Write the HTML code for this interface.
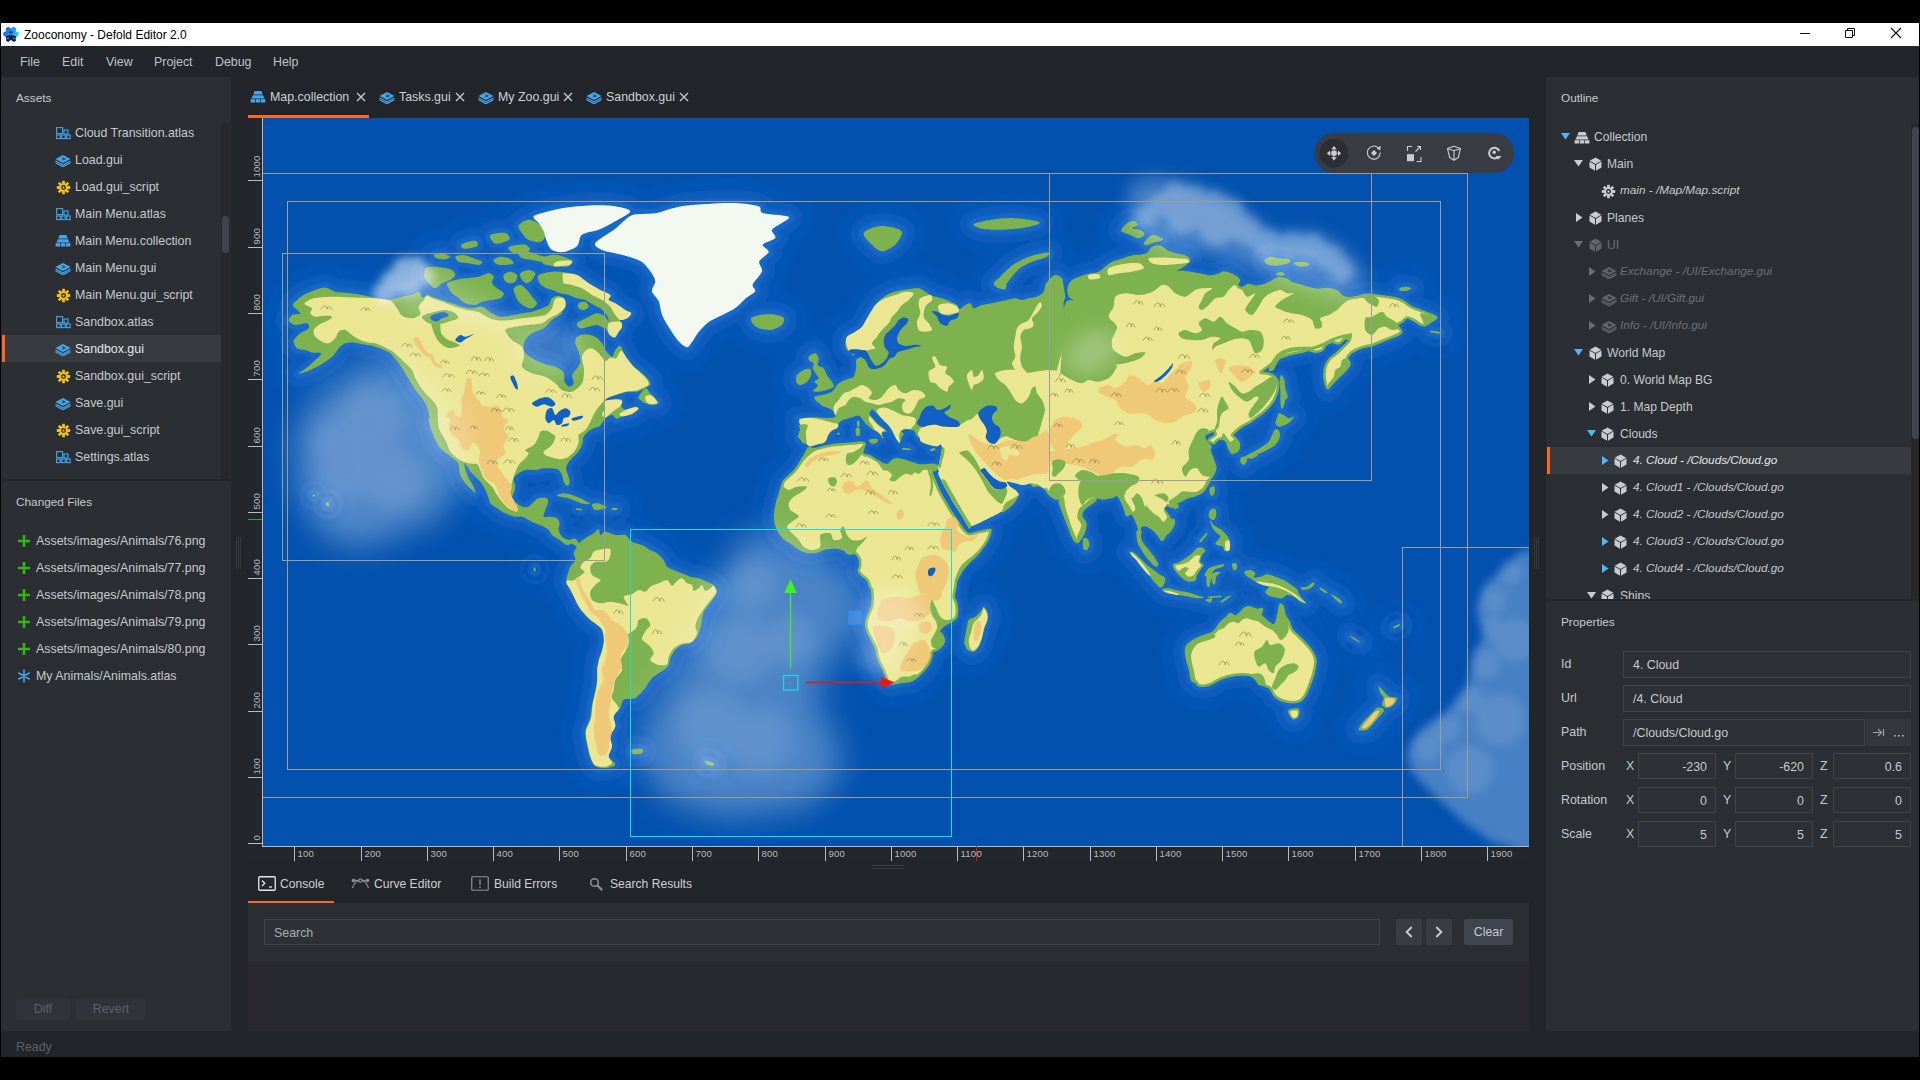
<!DOCTYPE html>
<html lang="en"><head><meta charset="utf-8"><title>Zooconomy - Defold Editor 2.0</title>
<style>
html,body{margin:0;padding:0;background:#000;}
body{width:1920px;height:1080px;overflow:hidden;font-family:"Liberation Sans",sans-serif;}
#app{position:relative;width:1920px;height:1080px;background:#000;overflow:hidden;}
#app>*, .abs{position:absolute;}
.titlebar{left:1px;top:23px;width:1918px;height:23px;background:#fff;}
.win{left:1px;top:46px;width:1918px;height:1011px;background:#22252a;}
.panel{background:#2b2e33;}
.panel2{background:#27292e;}
.t{position:absolute;white-space:pre;color:#c6cacd;font-size:12.4px;line-height:17px;}
.title{color:#000;font-size:12px;line-height:16px;}
.menu{font-size:12.4px;color:#bfc3c7;}
.hdr{font-size:11.8px;color:#c6cacd;}
.tab{font-size:12.4px;color:#cdd1d4;}
.btab{font-size:12.1px;color:#cdd1d4;}
.orow{font-size:12.1px;}
.it{font-style:italic;font-size:11.75px;margin-top:-2px;}
.dim{color:#6c7075;}
.sel1{color:#e4e7ea;}
.i{position:absolute;overflow:visible;}
.sel{background:#373b3f;}
.selbar{width:3px;background:#fd6623;position:absolute;}
.orange{background:#fd6623;}
.sbtrack{background:#26282c;}
.sbthumb{background:#40444d;border-radius:4px;}
.btn{background:#393c42;border-radius:2px;color:#c6cacd;font-size:12.4px;text-align:center;line-height:21px;}
.btn.dis{background:#30333a;color:#5d6167;}
.btn svg{display:block;}
.field{box-sizing:border-box;border:1px solid #40444a;background:#2d3035;}
.field .ph,.field .fv{position:absolute;left:9px;top:5px;font-size:12.4px;line-height:17px;color:#c6cacd;white-space:pre;}
.field .ph{color:#a9adb2;}
.field.num .fv{left:auto;right:8px;}
.pbtn{background:#34373c;}
.grip{width:5px;height:32px;border-left:1px solid #35383d;border-right:1px solid #35383d;box-sizing:border-box;}
.grip:after{content:"";position:absolute;left:1px;top:0;width:1px;height:32px;background:#35383d;}
.hgrip{width:32px;height:4px;border-top:1px solid #3a3d42;border-bottom:1px solid #3a3d42;box-sizing:border-box;}
.blu{color:#4aa5e8;fill:#4aa5e8;}
.yel{color:#f2c114;fill:#f2c114;}
.gry{color:#c8ccd0;fill:#c8ccd0;}
.gdim{color:#62666b;fill:#62666b;}
#vp{left:248px;top:118px;width:1281px;height:743px;overflow:hidden;background:#0450b2;}

</style></head>
<body>

<svg width="0" height="0" style="position:absolute">
<defs>
<symbol id="atlas" viewBox="0 0 16 14"><g fill="none" stroke="#3f9ee0" stroke-width="1.2"><rect x="1.6" y="1.600" width="6" height="6"/><rect x="9" y="4" width="4" height="4"/><rect x="1.6" y="9" width="3.600" height="3.600"/><rect x="6.6" y="9" width="3.600" height="3.600"/><rect x="11.6" y="9" width="3.600" height="3.600"/></g></symbol>
<symbol id="gui" viewBox="0 0 16 13"><path d="M8 1L15.500 5 8 9 .5 5z" fill="#4aa5e8"/><path d="M8 3.200l3.200 1.700L8 6.600 6.500 5.800 8.500 4.800 6.300 4.100z" fill="#1d4f7a"/><path d="M.5 7L8 11l7.500-4" fill="none" stroke="#4aa5e8" stroke-width="1.300"/><path d="M.5 8.800L8 12.800l7.500-4" fill="none" stroke="#4aa5e8" stroke-width="1.100"/></symbol>
<symbol id="guig" viewBox="0 0 16 13"><path d="M8 1L15.500 5 8 9 .5 5z"/><path d="M8 3.200l3.200 1.700L8 6.600 6.500 5.800 8.500 4.800 6.300 4.100z" fill="#2b2e33"/><path d="M.5 7L8 11l7.500-4" fill="none" stroke="currentColor" stroke-width="1.300"/><path d="M.5 8.800L8 12.800l7.500-4" fill="none" stroke="currentColor" stroke-width="1.100"/></symbol>
<symbol id="gear" viewBox="-8 -8 16 16"><g><circle r="4.600"/><g id="teeth"><rect x="-1.5" y="-7.200" width="3" height="14.400" rx=".6"/><rect x="-1.5" y="-7.200" width="3" height="14.400" rx=".6" transform="rotate(45)"/><rect x="-1.5" y="-7.200" width="3" height="14.400" rx=".6" transform="rotate(90)"/><rect x="-1.5" y="-7.200" width="3" height="14.400" rx=".6" transform="rotate(135)"/></g><circle r="2.600" fill="#2b2e33"/><circle r="1.200"/></g></symbol>
<symbol id="coll" viewBox="0 0 16 12"><path d="M4.500 0h7l1.200 3.500h-9.400z"/><path d="M3 4.200h10L14.600 7.500H1.400z"/><path d="M.6 8.200h4.600v3.300H.6zM5.900 8.200h4.200v3.300H5.900zM10.800 8.200h4.600v3.300h-4.600z"/></symbol>
<symbol id="cube" viewBox="0 0 13 14"><path d="M6.500 .5L12.300 3.700 6.500 6.900 .7 3.700z"/><path d="M.5 4.600L6 7.700v6L.5 10.500z"/><path d="M12.500 4.600L7 7.700v6l5.500-3.200z"/></symbol>
<symbol id="plus" viewBox="0 0 14 14"><path d="M5.700 1h2.600v4.700H13v2.600H8.300V13H5.700V8.300H1V5.700h4.700z" fill="#35b31a"/></symbol>
<symbol id="star" viewBox="0 0 14 14"><g stroke="#4aa5e8" stroke-width="1.500" stroke-linecap="round"><path d="M7 1v12M1.800 4l10.400 6M12.200 4L1.800 10"/></g></symbol>
<symbol id="console" viewBox="0 0 18 15"><rect x=".75" y=".75" width="16.500" height="13.500" rx="1" fill="none" stroke="#e6e9ec" stroke-width="1.300"/><path d="M4 4.500l2.800 2.800L4 10" fill="none" stroke="#e6e9ec" stroke-width="1.300"/><path d="M11 11h3" stroke="#e6e9ec" stroke-width="1.300"/></symbol>
<symbol id="builderr" viewBox="0 0 18 15"><rect x=".75" y=".75" width="16.500" height="13.500" rx="1" fill="none" stroke="#8d9196" stroke-width="1.200"/><path d="M9 3.500v5.500M9 10.500v1.500" stroke="#8d9196" stroke-width="1.300"/></symbol>
<symbol id="curve" viewBox="0 0 19 11"><g fill="none" stroke="#8d9196" stroke-width="1.200"><path d="M1.500 10C3 5 6 2.500 9.500 2.500S16 5 17.500 10"/><path d="M3 2.500h13"/><circle cx="9.500" cy="2.500" r="1.700" fill="#22252a"/><circle cx="2.500" cy="2.500" r="1.200" fill="#8d9196"/><circle cx="16.500" cy="2.500" r="1.200" fill="#8d9196"/></g></symbol>
<symbol id="search" viewBox="0 0 14 14"><circle cx="5.500" cy="5.500" r="3.800" fill="none" stroke="#8d9196" stroke-width="1.500"/><path d="M8.500 8.500l4 4" stroke="#8d9196" stroke-width="2.200" stroke-linecap="round"/></symbol>
<symbol id="logo" viewBox="0 0 16 16"><linearGradient id="lg1" gradientUnits="userSpaceOnUse" x1="1" y1="4" x2="15" y2="9"><stop offset="0" stop-color="#1a5fe6"/><stop offset=".55" stop-color="#1c9ae8"/><stop offset="1" stop-color="#1fdcd2"/></linearGradient><g fill="url(#lg1)"><circle cx="8" cy="8" r="5.600"/><circle cx="13.30" cy="8.00" r="2.500"/><circle cx="10.65" cy="12.59" r="2.500"/><circle cx="5.35" cy="12.59" r="2.500"/><circle cx="2.70" cy="8.00" r="2.500"/><circle cx="5.35" cy="3.41" r="2.500"/><circle cx="10.65" cy="3.41" r="2.500"/></g><path d="M2.200 10.400L8 8.800l5.800 1.600-1.600 2.100 .8 2.300-2.300 1.100L8 13.700 5.300 15.900 3 14.800l.8-2.300z" fill="#0e1c4e"/><path d="M3.600 12.300l2-.8 .2 1.900zM12.400 12.300l-2-.8-.2 1.900z" fill="#1ec6d8"/><path d="M5.800 6.300L8 5.100l2.200 1.200L8 7.500z" fill="#0e1c4e"/></symbol>
</defs>
</svg>

<div id="app">

<div class="titlebar"></div>
<svg class="i " style="left:3px;top:26px" width="16" height="16"><use href="#logo"/></svg>
<span class="t title" style="left:24px;top:27px;">Zooconomy - Defold Editor 2.0</span>
<svg class="i" style="left:1780px;top:23px" width="139" height="23" fill="none" stroke="#111" stroke-width="1"><path d="M20 10.5h10"/><path d="M65.500 7.500h7v7h-7zM67.500 7.500v-2h7v7h-2"/><path d="M111 5l10 10M121 5l-10 10" stroke-width="1.1"/></svg>
<div class="win"></div>
<span class="t menu" style="left:20px;top:54px;">File</span>
<span class="t menu" style="left:62px;top:54px;">Edit</span>
<span class="t menu" style="left:106px;top:54px;">View</span>
<span class="t menu" style="left:154px;top:54px;">Project</span>
<span class="t menu" style="left:215px;top:54px;">Debug</span>
<span class="t menu" style="left:273px;top:54px;">Help</span>
<div class="panel" style="left:1px;top:77px;width:230px;height:402px"></div>
<span class="t hdr" style="left:16px;top:90px;">Assets</span>
<div class="sel" style="left:2px;top:335px;width:219px;height:27px"></div><div class="selbar" style="left:2px;top:335px;height:27px"></div>
<svg class="i " style="left:55px;top:126.0px" width="16" height="14"><use href="#atlas"/></svg>
<span class="t row" style="left:75px;top:125.0px;">Cloud Transition.atlas</span>
<svg class="i " style="left:55px;top:153.5px" width="16" height="13"><use href="#gui"/></svg>
<span class="t row" style="left:75px;top:152.0px;">Load.gui</span>
<svg class="i yel" style="left:55.5px;top:179.5px" width="15" height="15"><use href="#gear"/></svg>
<span class="t row" style="left:75px;top:179.0px;">Load.gui_script</span>
<svg class="i " style="left:55px;top:207.0px" width="16" height="14"><use href="#atlas"/></svg>
<span class="t row" style="left:75px;top:206.0px;">Main Menu.atlas</span>
<svg class="i blu" style="left:55px;top:234.5px" width="16" height="12"><use href="#coll"/></svg>
<span class="t row" style="left:75px;top:233.0px;">Main Menu.collection</span>
<svg class="i " style="left:55px;top:261.5px" width="16" height="13"><use href="#gui"/></svg>
<span class="t row" style="left:75px;top:260.0px;">Main Menu.gui</span>
<svg class="i yel" style="left:55.5px;top:287.5px" width="15" height="15"><use href="#gear"/></svg>
<span class="t row" style="left:75px;top:287.0px;">Main Menu.gui_script</span>
<svg class="i " style="left:55px;top:315.0px" width="16" height="14"><use href="#atlas"/></svg>
<span class="t row" style="left:75px;top:314.0px;">Sandbox.atlas</span>
<svg class="i " style="left:55px;top:342.5px" width="16" height="13"><use href="#gui"/></svg>
<span class="t row sel1" style="left:75px;top:341.0px;">Sandbox.gui</span>
<svg class="i yel" style="left:55.5px;top:368.5px" width="15" height="15"><use href="#gear"/></svg>
<span class="t row" style="left:75px;top:368.0px;">Sandbox.gui_script</span>
<svg class="i " style="left:55px;top:396.5px" width="16" height="13"><use href="#gui"/></svg>
<span class="t row" style="left:75px;top:395.0px;">Save.gui</span>
<svg class="i yel" style="left:55.5px;top:422.5px" width="15" height="15"><use href="#gear"/></svg>
<span class="t row" style="left:75px;top:422.0px;">Save.gui_script</span>
<svg class="i " style="left:55px;top:450.0px" width="16" height="14"><use href="#atlas"/></svg>
<span class="t row" style="left:75px;top:449.0px;">Settings.atlas</span>
<div class="sbtrack" style="left:221px;top:123px;width:9px;height:356px"></div><div class="sbthumb" style="left:222px;top:216px;width:7px;height:37px"></div>
<div class="panel" style="left:1px;top:481px;width:230px;height:550px"></div>
<span class="t hdr" style="left:16px;top:494px;">Changed Files</span>
<svg class="i " style="left:17px;top:533.5px" width="14" height="14"><use href="#plus"/></svg>
<span class="t row" style="left:36px;top:533.0px;">Assets/images/Animals/76.png</span>
<svg class="i " style="left:17px;top:560.5px" width="14" height="14"><use href="#plus"/></svg>
<span class="t row" style="left:36px;top:560.0px;">Assets/images/Animals/77.png</span>
<svg class="i " style="left:17px;top:587.5px" width="14" height="14"><use href="#plus"/></svg>
<span class="t row" style="left:36px;top:587.0px;">Assets/images/Animals/78.png</span>
<svg class="i " style="left:17px;top:614.5px" width="14" height="14"><use href="#plus"/></svg>
<span class="t row" style="left:36px;top:614.0px;">Assets/images/Animals/79.png</span>
<svg class="i " style="left:17px;top:641.5px" width="14" height="14"><use href="#plus"/></svg>
<span class="t row" style="left:36px;top:641.0px;">Assets/images/Animals/80.png</span>
<svg class="i " style="left:17px;top:668.5px" width="14" height="14"><use href="#star"/></svg>
<span class="t row" style="left:36px;top:668.0px;">My Animals/Animals.atlas</span>
<div class="btn dis" style="left:16px;top:999px;width:54px;height:21px">Diff</div>
<div class="btn dis" style="left:76px;top:999px;width:70px;height:21px">Revert</div>
<div class="grip" style="left:236px;top:537px"></div><div class="grip" style="left:1534px;top:537px"></div>
<div class="hgrip" style="left:872px;top:865px"></div>
<svg class="i blu" style="left:250px;top:91px" width="16" height="12"><use href="#coll"/></svg>
<span class="t tab" style="left:270px;top:89px;">Map.collection</span>
<svg class="i" style="left:356px;top:92px" width="10" height="10" stroke="#c4c8cc" stroke-width="1.4"><path d="M1 1l8 8M9 1l-8 8"/></svg>
<svg class="i " style="left:379px;top:91px" width="16" height="13"><use href="#gui"/></svg>
<span class="t tab" style="left:399px;top:89px;">Tasks.gui</span>
<svg class="i" style="left:455px;top:92px" width="10" height="10" stroke="#c4c8cc" stroke-width="1.4"><path d="M1 1l8 8M9 1l-8 8"/></svg>
<svg class="i " style="left:478px;top:91px" width="16" height="13"><use href="#gui"/></svg>
<span class="t tab" style="left:498px;top:89px;">My Zoo.gui</span>
<svg class="i" style="left:563px;top:92px" width="10" height="10" stroke="#c4c8cc" stroke-width="1.4"><path d="M1 1l8 8M9 1l-8 8"/></svg>
<svg class="i " style="left:586px;top:91px" width="16" height="13"><use href="#gui"/></svg>
<span class="t tab" style="left:606px;top:89px;">Sandbox.gui</span>
<svg class="i" style="left:679px;top:92px" width="10" height="10" stroke="#c4c8cc" stroke-width="1.4"><path d="M1 1l8 8M9 1l-8 8"/></svg>
<div class="orange" style="left:248px;top:115px;width:121px;height:3px"></div>
<div id="vp">
<svg id="map" viewBox="248 118 1281 743" width="1281" height="743" style="position:absolute;left:0;top:0">
<defs>
<filter id="b3" filterUnits="userSpaceOnUse" x="248" y="118" width="1281" height="743"><feGaussianBlur stdDeviation="1.800"/></filter>
<filter id="cb" filterUnits="userSpaceOnUse" x="248" y="118" width="1281" height="743"><feGaussianBlur stdDeviation="9"/></filter>
<filter id="cb2" filterUnits="userSpaceOnUse" x="248" y="118" width="1281" height="743"><feGaussianBlur stdDeviation="4"/></filter>
<filter id="cb3" filterUnits="userSpaceOnUse" x="248" y="118" width="1281" height="743"><feGaussianBlur stdDeviation="16"/></filter>
<clipPath id="mapclip"><rect x="262" y="118" width="1267" height="728"/></clipPath>
<path id="landp" d="M518.7 225.3C519.7 223.3 525.6 219.9 528.7 219.7C531.8 219.5 536.8 221.8 539.3 224.0C541.8 226.2 545.2 232.0 545.3 234.7C545.5 237.4 542.8 241.2 540.3 242.0C537.8 242.8 531.4 241.3 528.7 240.0C525.9 238.7 523.5 235.5 522.0 233.3C520.5 231.1 517.7 227.4 518.7 225.3Z M751.3 318.0C752.6 316.5 758.4 315.2 762.0 314.7C765.6 314.2 772.1 314.2 775.3 314.7C778.6 315.2 782.7 316.5 783.7 318.0C784.7 319.5 783.8 322.9 782.0 324.7C780.2 326.4 775.2 329.1 772.0 329.7C768.8 330.3 763.1 329.4 760.3 328.7C757.6 327.9 755.0 326.3 753.7 324.7C752.3 323.1 750.1 319.5 751.3 318.0Z M293.7 303.3C295.2 301.6 300.4 297.0 303.7 295.0C306.9 293.0 312.1 291.1 315.3 290.0C318.6 288.9 322.3 287.2 325.3 287.5C328.3 287.8 331.8 290.8 335.3 291.7C338.8 292.5 344.7 292.5 348.7 293.0C352.7 293.5 358.2 294.3 362.0 295.0C365.8 295.7 370.2 296.8 373.7 297.5C377.2 298.2 382.6 299.8 385.3 300.0C388.1 300.2 389.5 299.7 392.0 299.2C394.5 298.7 398.8 297.4 402.0 296.7C405.2 295.9 411.2 294.9 413.7 294.2C416.2 293.4 417.3 291.2 418.7 291.7C420.0 292.2 421.6 297.1 422.8 297.5C424.1 297.9 425.6 294.8 427.0 294.7C428.4 294.5 429.8 295.9 432.0 296.7C434.2 297.5 439.0 299.0 442.0 300.0C445.0 301.0 449.0 302.3 452.0 303.3C455.0 304.3 459.0 305.9 462.0 306.7C465.0 307.4 469.0 308.3 472.0 308.3C475.0 308.3 479.0 305.9 482.0 306.7C485.0 307.4 489.2 311.8 492.0 313.3C494.8 314.8 497.3 316.4 500.3 316.7C503.3 317.0 508.8 315.8 512.0 315.3C515.2 314.8 519.0 313.9 522.0 313.3C525.0 312.8 529.0 312.4 532.0 311.7C535.0 310.9 539.5 309.3 542.0 308.3C544.5 307.3 547.2 306.5 548.7 305.0C550.2 303.5 550.5 299.7 552.0 298.3C553.5 297.0 556.7 295.6 558.7 295.8C560.7 296.1 564.3 298.4 565.3 300.0C566.3 301.6 565.8 304.9 565.3 306.7C564.8 308.4 562.6 310.5 562.0 311.7C561.4 312.8 562.7 312.9 561.2 314.2C559.7 315.4 554.6 317.9 552.0 320.0C549.4 322.1 546.7 326.3 543.7 328.3C540.7 330.3 534.8 331.6 532.0 333.3C529.2 335.1 526.6 337.5 525.3 340.0C524.1 342.5 522.7 347.2 523.7 350.0C524.7 352.8 528.8 356.2 532.0 358.3C535.2 360.5 541.8 362.9 545.3 364.2C548.8 365.4 552.6 365.4 555.3 366.7C558.1 367.9 562.3 370.2 563.7 372.5C565.0 374.8 563.6 379.5 564.5 381.7C565.4 383.8 568.1 386.4 569.5 386.7C570.9 386.9 573.3 385.1 573.7 383.3C574.0 381.6 571.5 377.2 572.0 375.0C572.5 372.8 575.8 370.3 577.0 368.3C578.2 366.3 580.1 364.2 580.3 361.7C580.6 359.2 579.4 354.4 578.7 351.7C577.9 348.9 575.6 345.6 575.3 343.3C575.1 341.1 575.5 338.0 577.0 336.7C578.5 335.3 582.6 334.2 585.3 334.2C588.1 334.2 592.8 335.3 595.3 336.7C597.8 338.0 600.5 341.3 602.0 343.3C603.5 345.3 603.8 348.0 605.3 350.0C606.8 352.0 610.5 356.7 612.0 356.7C613.5 356.7 614.1 351.6 615.3 350.0C616.6 348.4 618.8 344.8 620.3 345.8C621.8 346.8 623.6 353.8 625.3 356.7C627.1 359.5 629.5 362.5 632.0 365.0C634.5 367.5 639.5 371.1 642.0 373.3C644.5 375.6 647.5 378.2 648.7 380.0C649.9 381.8 650.5 383.8 650.0 385.0C649.5 386.2 647.3 387.0 645.3 388.0C643.4 389.0 639.5 391.1 637.0 391.7C634.5 392.2 631.2 391.4 628.7 391.7C626.2 392.0 623.1 392.9 620.3 393.7C617.6 394.4 612.8 395.6 610.3 396.7C607.8 397.7 603.2 400.5 603.7 400.8C604.2 401.2 610.9 399.3 613.7 399.2C616.4 399.0 620.9 399.0 622.0 400.0C623.1 401.0 620.7 404.4 621.2 405.8C621.7 407.3 623.2 409.5 625.3 409.7C627.5 409.8 633.3 406.8 635.3 406.7C637.3 406.5 639.2 407.5 638.7 408.7C638.2 409.8 634.5 413.0 632.0 414.2C629.5 415.4 624.4 416.0 622.0 416.7C619.6 417.3 617.7 418.9 616.2 418.7C614.7 418.4 613.6 415.1 612.0 415.0C610.4 414.9 606.8 417.1 605.3 418.3C603.8 419.6 603.2 421.7 602.0 423.3C600.8 425.0 597.5 428.7 597.0 429.2C596.5 429.7 599.7 426.5 598.7 426.7C597.7 426.8 592.6 428.5 590.3 430.0C588.1 431.5 584.9 434.4 583.7 436.7C582.4 438.9 583.0 442.5 582.0 445.0C581.0 447.5 578.8 451.1 577.0 453.3C575.2 455.6 571.8 458.2 570.3 460.0C568.8 461.8 567.6 463.5 567.0 465.0C566.4 466.5 565.9 468.2 566.2 470.0C566.4 471.8 568.2 474.7 568.7 476.7C569.2 478.7 569.8 482.0 569.5 483.3C569.2 484.7 567.9 486.1 567.0 485.8C566.1 485.6 564.4 483.3 563.7 481.7C562.9 480.0 562.8 476.8 562.0 475.0C561.2 473.2 560.2 471.0 558.7 470.0C557.2 469.0 554.2 468.6 552.0 468.3C549.8 468.1 546.2 468.1 543.7 468.3C541.2 468.6 538.1 469.8 535.3 470.0C532.6 470.2 527.8 469.5 525.3 470.0C522.8 470.5 520.4 472.1 518.7 473.3C516.9 474.6 514.2 476.3 513.7 478.3C513.2 480.3 515.3 484.4 515.3 486.7C515.3 488.9 514.2 491.6 513.7 493.3C513.2 495.1 511.5 496.8 512.0 498.3C512.5 499.8 515.5 502.1 517.0 503.3C518.5 504.6 520.2 506.2 522.0 506.7C523.8 507.2 526.9 507.4 528.7 506.7C530.4 505.9 532.2 502.9 533.7 501.7C535.2 500.4 536.7 498.8 538.7 498.3C540.7 497.8 545.6 497.6 547.0 498.3C548.4 499.1 548.1 501.6 547.8 503.3C547.6 505.1 546.0 508.0 545.3 510.0C544.7 512.0 542.9 515.7 543.7 516.7C544.4 517.7 548.3 516.4 550.3 516.7C552.3 516.9 555.6 517.3 557.0 518.3C558.4 519.3 559.2 521.6 559.5 523.3C559.8 525.1 558.3 528.0 558.7 530.0C559.0 532.0 560.5 535.2 562.0 536.7C563.5 538.2 566.7 539.7 568.7 540.0C570.7 540.3 573.8 538.2 575.3 538.7C576.8 539.2 578.4 542.1 578.7 543.3C578.9 544.5 578.0 546.6 577.0 546.7C576.0 546.7 573.5 543.9 572.0 543.7C570.5 543.4 568.5 545.3 567.0 545.0C565.5 544.7 563.5 542.7 562.0 541.7C560.5 540.7 558.5 539.3 557.0 538.3C555.5 537.3 553.2 536.2 552.0 535.0C550.8 533.8 549.9 531.2 548.7 530.0C547.4 528.8 545.7 527.7 543.7 526.7C541.7 525.7 537.6 524.3 535.3 523.3C533.1 522.3 530.7 521.0 528.7 520.0C526.7 519.0 524.0 517.2 522.0 516.7C520.0 516.2 517.8 517.2 515.3 516.7C512.8 516.2 508.1 514.6 505.3 513.3C502.6 512.1 499.2 509.8 497.0 508.3C494.8 506.8 491.6 504.8 490.3 503.3C489.1 501.8 489.4 500.3 488.7 498.3C487.9 496.3 486.6 492.5 485.3 490.0C484.1 487.5 482.3 484.2 480.3 481.7C478.3 479.2 474.1 475.8 472.0 473.3C469.9 470.8 467.3 466.4 466.2 465.0C465.0 463.6 464.6 462.9 464.5 463.7C464.4 464.4 464.7 467.8 465.3 470.0C466.0 472.2 467.4 475.8 468.7 478.3C469.9 480.8 472.7 484.4 473.7 486.7C474.7 488.9 475.6 492.8 475.3 493.3C475.1 493.8 473.5 491.5 472.0 490.0C470.5 488.5 467.1 485.6 465.3 483.3C463.6 481.1 461.3 477.8 460.3 475.0C459.3 472.2 459.2 467.0 458.7 465.0C458.2 463.0 458.5 463.2 457.0 461.7C455.5 460.2 451.2 457.0 448.7 455.0C446.2 453.0 442.3 450.6 440.3 448.3C438.3 446.1 436.7 442.8 435.3 440.0C434.0 437.2 432.2 433.0 431.2 430.0C430.2 427.0 428.9 422.0 428.7 420.0C428.4 418.0 429.8 418.7 429.5 416.7C429.2 414.7 428.1 409.4 427.0 406.7C425.9 403.9 423.8 400.8 422.0 398.3C420.2 395.8 417.1 392.5 415.3 390.0C413.6 387.5 411.8 384.2 410.3 381.7C408.8 379.2 407.1 376.1 405.3 373.3C403.6 370.6 400.9 366.3 398.7 363.3C396.4 360.3 392.8 355.5 390.3 353.3C387.8 351.2 384.8 350.3 382.0 349.2C379.2 348.0 375.0 346.6 372.0 345.8C369.0 345.1 364.8 344.7 362.0 344.2C359.2 343.7 356.2 342.6 353.7 342.5C351.2 342.4 347.6 342.5 345.3 343.3C343.1 344.2 340.2 346.8 338.7 348.3C337.2 349.8 336.6 351.8 335.3 353.3C334.1 354.8 332.6 356.6 330.3 358.3C328.1 360.1 323.6 363.1 320.3 365.0C317.1 366.9 311.9 369.5 308.7 370.8C305.4 372.1 298.9 374.2 298.7 373.7C298.4 373.2 304.5 369.6 307.0 367.5C309.5 365.4 313.2 362.1 315.3 360.0C317.5 357.9 321.7 354.5 321.2 353.3C320.7 352.2 314.4 353.0 312.0 352.5C309.6 352.0 307.6 350.6 305.3 350.0C303.1 349.4 298.8 349.7 297.0 348.3C295.2 347.0 293.2 343.1 293.7 340.8C294.2 338.6 298.1 335.2 300.3 333.3C302.6 331.5 307.7 329.8 308.7 328.3C309.7 326.8 309.0 323.8 307.0 323.3C305.0 322.8 298.1 325.4 295.3 325.0C292.6 324.6 289.2 322.3 288.7 320.8C288.2 319.3 290.2 316.1 292.0 315.0C293.8 313.9 300.1 314.6 300.3 313.3C300.6 312.1 294.7 308.2 293.7 306.7C292.7 305.2 292.2 305.1 293.7 303.3Z M557.0 495.0C557.5 494.5 561.4 493.3 563.7 493.3C565.9 493.3 569.5 494.2 572.0 495.0C574.5 495.8 578.1 497.3 580.3 498.3C582.6 499.3 585.5 500.9 587.0 501.7C588.5 502.4 590.6 503.0 590.3 503.3C590.1 503.7 587.3 504.4 585.3 504.2C583.3 503.9 579.5 502.5 577.0 501.7C574.5 500.8 571.2 499.1 568.7 498.3C566.2 497.6 562.1 497.2 560.3 496.7C558.6 496.2 556.5 495.5 557.0 495.0Z M592.0 504.2C592.9 503.5 596.8 503.1 598.7 503.3C600.5 503.6 603.2 505.2 604.5 505.8C605.8 506.5 607.4 507.0 607.0 507.5C606.6 508.0 603.8 508.8 602.0 509.2C600.2 509.5 596.7 510.2 595.3 510.0C594.0 509.8 593.3 508.4 592.8 507.5C592.3 506.6 591.1 504.8 592.0 504.2Z M612.0 508.0C612.8 507.7 616.2 507.7 617.0 508.0C617.8 508.3 617.8 509.7 617.0 510.0C616.2 510.3 612.8 510.3 612.0 510.0C611.2 509.7 611.2 508.3 612.0 508.0Z M576.2 508.3C576.8 508.2 580.4 508.5 581.2 508.8C581.9 509.2 581.8 510.3 581.2 510.5C580.5 510.7 577.4 510.3 576.7 510.0C575.9 509.7 575.5 508.5 576.2 508.3Z M538.7 275.0C540.7 273.5 548.0 272.0 552.0 271.7C556.0 271.3 561.6 272.0 565.3 272.5C569.1 273.0 573.5 273.4 577.0 275.0C580.5 276.6 585.2 281.1 588.7 283.3C592.2 285.6 597.1 288.2 600.3 290.0C603.6 291.8 609.1 293.5 610.3 295.0C611.6 296.5 607.9 298.8 608.7 300.0C609.4 301.2 612.8 301.8 615.3 303.3C617.8 304.8 623.0 308.5 625.3 310.0C627.7 311.5 630.9 312.1 631.2 313.3C631.4 314.6 628.6 317.3 627.0 318.3C625.4 319.3 621.1 318.8 620.3 320.0C619.6 321.2 622.2 324.9 622.0 326.7C621.8 328.4 619.8 330.0 618.7 331.7C617.5 333.3 616.0 337.2 614.5 337.5C613.0 337.8 610.0 335.0 608.7 333.3C607.3 331.7 605.3 328.7 605.3 326.7C605.3 324.7 608.7 322.0 608.7 320.0C608.7 318.0 606.6 315.1 605.3 313.3C604.1 311.6 602.1 309.6 600.3 308.3C598.6 307.1 595.9 306.2 593.7 305.0C591.4 303.8 587.8 301.0 585.3 300.0C582.8 299.0 579.5 299.1 577.0 298.3C574.5 297.6 571.2 295.8 568.7 295.0C566.2 294.2 562.8 294.1 560.3 293.3C557.8 292.6 554.5 291.0 552.0 290.0C549.5 289.0 545.7 287.9 543.7 286.7C541.7 285.4 539.4 283.4 538.7 281.7C537.9 279.9 536.7 276.5 538.7 275.0Z M577.0 323.3C578.2 321.6 585.7 318.2 588.7 316.7C591.7 315.2 594.5 313.3 597.0 313.3C599.5 313.3 603.6 315.2 605.3 316.7C607.1 318.2 608.7 321.6 608.7 323.3C608.7 325.1 607.1 328.1 605.3 328.3C603.6 328.6 599.5 325.2 597.0 325.0C594.5 324.8 591.2 326.2 588.7 326.7C586.2 327.2 582.1 328.8 580.3 328.3C578.6 327.8 575.8 325.1 577.0 323.3Z M578.7 303.3C579.7 302.3 583.8 301.2 585.3 301.7C586.8 302.2 588.9 305.4 588.7 306.7C588.4 307.9 585.2 309.8 583.7 310.0C582.2 310.2 579.4 309.3 578.7 308.3C577.9 307.3 577.7 304.3 578.7 303.3Z M638.7 396.7C639.4 394.9 643.6 388.8 645.3 388.3C647.1 387.8 648.8 391.8 650.3 393.3C651.8 394.8 654.1 396.8 655.3 398.3C656.6 399.8 659.2 402.3 658.7 403.3C658.2 404.3 654.0 405.0 652.0 405.0C650.0 405.0 647.1 404.1 645.3 403.3C643.6 402.6 641.3 401.0 640.3 400.0C639.3 399.0 637.9 398.4 638.7 396.7Z M577.0 546.7C577.8 545.2 577.4 544.6 578.7 543.3C579.9 542.1 583.1 539.8 585.3 538.3C587.6 536.8 591.7 534.7 593.7 533.3C595.7 532.0 597.7 528.9 598.7 529.2C599.7 529.4 599.3 534.6 600.3 535.0C601.3 535.4 603.1 531.7 605.3 531.7C607.6 531.7 612.3 534.5 615.3 535.0C618.3 535.5 622.8 534.0 625.3 535.0C627.8 536.0 629.5 540.2 632.0 541.7C634.5 543.2 639.2 543.8 642.0 545.0C644.8 546.2 648.1 548.8 650.3 550.0C652.6 551.2 655.0 551.8 657.0 553.3C659.0 554.8 662.2 558.0 663.7 560.0C665.2 562.0 665.5 565.2 667.0 566.7C668.5 568.2 671.4 569.0 673.7 570.0C675.9 571.0 679.5 572.3 682.0 573.3C684.5 574.3 687.8 575.9 690.3 576.7C692.8 577.4 696.2 577.6 698.7 578.3C701.2 579.1 704.8 580.7 707.0 581.7C709.2 582.7 712.2 583.5 713.7 585.0C715.2 586.5 717.0 589.7 717.0 591.7C717.0 593.7 714.9 596.3 713.7 598.3C712.4 600.3 710.2 603.0 708.7 605.0C707.2 607.0 704.7 609.4 703.7 611.7C702.7 613.9 702.5 617.5 702.0 620.0C701.5 622.5 701.1 625.8 700.3 628.3C699.6 630.8 698.5 634.4 697.0 636.7C695.5 638.9 692.6 642.1 690.3 643.3C688.1 644.6 684.2 644.0 682.0 645.0C679.8 646.0 677.1 648.0 675.3 650.0C673.6 652.0 671.3 656.1 670.3 658.3C669.3 660.6 669.7 663.2 668.7 665.0C667.7 666.8 666.2 668.0 663.7 670.0C661.2 672.0 654.8 675.3 652.0 678.0C649.2 680.7 647.8 685.0 645.3 688.0C642.8 691.0 638.6 696.2 635.3 698.0C632.1 699.8 625.9 698.2 623.7 699.7C621.4 701.2 621.8 705.5 620.3 708.0C618.8 710.5 614.4 713.6 613.7 716.3C612.9 719.1 615.8 723.3 615.3 726.3C614.8 729.3 610.8 733.3 610.3 736.3C609.8 739.3 612.2 743.3 612.0 746.3C611.8 749.3 608.2 753.6 608.7 756.3C609.2 759.1 615.8 762.9 615.3 764.7C614.8 766.4 608.3 767.8 605.3 768.0C602.3 768.2 597.6 767.8 595.3 766.3C593.1 764.8 591.6 761.2 590.3 758.0C589.1 754.8 587.8 748.7 587.0 744.7C586.2 740.7 584.8 735.3 585.3 731.3C585.8 727.3 589.3 722.0 590.3 718.0C591.3 714.0 591.2 708.9 592.0 704.7C592.8 700.5 594.6 693.7 595.3 690.0C596.1 686.3 596.8 683.0 597.0 680.0C597.2 677.0 596.8 673.0 597.0 670.0C597.2 667.0 597.9 663.0 598.7 660.0C599.4 657.0 601.2 653.0 602.0 650.0C602.8 647.0 603.7 643.0 603.7 640.0C603.7 637.0 603.0 632.2 602.0 630.0C601.0 627.8 598.8 626.5 597.0 625.0C595.2 623.5 592.3 621.8 590.3 620.0C588.3 618.2 585.4 615.3 583.7 613.3C581.9 611.3 580.2 609.2 578.7 606.7C577.2 604.2 574.9 599.2 573.7 596.7C572.4 594.2 571.5 592.0 570.3 590.0C569.2 588.0 566.7 585.3 566.2 583.3C565.7 581.3 566.4 579.2 567.0 576.7C567.6 574.2 569.1 569.2 570.3 566.7C571.6 564.2 574.8 562.0 575.3 560.0C575.8 558.0 573.4 555.3 573.7 553.3C573.9 551.3 576.2 548.2 577.0 546.7Z M533.7 568.0C533.9 567.4 535.0 567.1 535.3 567.5C535.6 567.9 535.9 570.3 535.7 570.8C535.5 571.4 534.3 571.8 534.0 571.3C533.7 570.9 533.5 568.6 533.7 568.0Z M808.9 448.1C810.0 447.5 811.7 449.4 813.2 449.4C814.8 449.4 817.4 448.6 819.5 448.1C821.6 447.7 824.8 446.7 827.0 446.2C829.2 445.8 832.2 445.3 834.5 445.0C836.8 444.7 839.8 444.6 842.0 444.4C844.2 444.2 847.2 443.9 849.5 443.8C851.8 443.6 855.3 443.3 857.0 443.1C858.7 442.9 859.6 442.4 860.8 442.5C861.9 442.6 864.1 442.8 864.5 443.8C864.9 444.7 863.6 447.4 863.2 448.8C862.9 450.1 861.8 451.6 862.0 452.5C862.2 453.4 863.4 454.4 864.5 455.0C865.6 455.6 867.8 455.5 869.5 456.2C871.2 457.0 873.9 458.9 875.8 460.0C877.6 461.1 880.1 463.0 882.0 463.8C883.9 464.5 886.8 465.4 888.2 465.0C889.8 464.6 890.7 462.1 892.0 461.2C893.3 460.4 895.3 459.5 897.0 459.4C898.7 459.3 901.4 460.2 903.2 460.6C905.1 461.1 907.4 461.8 909.5 462.5C911.6 463.2 914.9 464.5 917.0 465.0C919.1 465.5 921.4 465.6 923.2 465.6C925.1 465.6 927.8 465.1 929.5 465.0C931.2 464.9 933.4 464.7 934.5 465.0C935.6 465.3 936.9 466.1 937.0 466.9C937.1 467.6 936.0 469.5 935.1 470.0C934.3 470.5 931.7 469.1 931.4 470.0C931.0 470.9 932.2 474.2 932.9 476.2C933.6 478.3 935.0 481.3 936.0 483.8C937.0 486.2 938.4 489.9 939.8 492.5C941.1 495.1 943.2 498.6 944.8 501.2C946.2 503.9 948.2 507.6 949.8 510.0C951.2 512.4 953.3 515.4 954.8 517.5C956.2 519.6 957.8 521.9 959.1 523.8C960.4 525.6 962.1 528.4 963.5 530.0C964.9 531.6 966.6 533.8 968.7 534.2C970.7 534.5 974.5 533.0 977.0 532.5C979.5 532.0 983.3 531.2 985.3 530.8C987.3 530.5 989.8 529.1 990.3 530.0C990.8 530.9 989.4 534.7 988.7 536.7C987.9 538.7 986.6 541.3 985.3 543.3C984.1 545.3 982.1 548.0 980.3 550.0C978.6 552.0 975.7 554.9 973.7 556.7C971.7 558.4 968.8 560.2 967.0 561.7C965.2 563.2 963.2 564.9 962.0 566.7C960.8 568.4 959.5 571.3 958.7 573.3C957.8 575.3 956.7 578.0 956.2 580.0C955.7 582.0 955.7 584.2 955.3 586.7C955.0 589.2 953.5 594.2 953.7 596.7C953.8 599.2 955.7 601.1 956.2 603.3C956.7 605.6 957.1 609.4 957.0 611.7C956.9 613.9 956.6 616.7 955.3 618.3C954.1 620.0 950.7 621.2 948.7 622.5C946.7 623.8 943.5 625.3 942.0 626.7C940.5 628.0 938.7 630.4 938.7 631.7C938.7 632.9 941.2 633.5 942.0 635.0C942.8 636.5 944.2 639.7 943.7 641.7C943.2 643.7 940.4 646.8 938.7 648.3C936.9 649.8 933.1 650.4 932.0 651.7C930.9 652.9 931.7 654.9 931.2 656.7C930.7 658.4 929.8 661.3 928.7 663.3C927.5 665.3 925.4 668.0 923.7 670.0C921.9 672.0 919.0 675.0 917.0 676.7C915.0 678.3 912.6 680.1 910.3 680.8C908.1 681.6 904.5 681.3 902.0 681.7C899.5 682.0 895.7 683.2 893.7 683.3C891.7 683.5 889.8 683.5 888.7 682.5C887.5 681.5 886.9 678.5 886.2 676.7C885.4 674.8 884.5 672.0 883.7 670.0C882.8 668.0 881.2 665.3 880.3 663.3C879.5 661.3 878.5 658.9 877.8 656.7C877.2 654.4 877.0 650.8 876.2 648.3C875.3 645.8 873.2 642.5 872.0 640.0C870.8 637.5 868.7 634.2 867.8 631.7C867.0 629.2 866.0 625.8 866.2 623.3C866.3 620.8 867.8 617.5 868.7 615.0C869.5 612.5 871.4 609.2 872.0 606.7C872.6 604.2 872.8 600.8 872.8 598.3C872.8 595.8 872.4 591.8 872.0 590.0C871.6 588.2 870.8 587.9 870.3 586.7C869.8 585.4 869.3 582.9 868.7 581.7C868.0 580.4 867.2 579.3 866.2 578.3C865.2 577.3 863.1 576.1 862.0 575.0C860.9 573.9 859.2 572.3 859.0 570.8C858.8 569.3 860.3 566.9 860.3 565.0C860.4 563.1 860.2 560.1 859.5 558.3C858.8 556.6 857.0 554.1 855.3 553.3C853.7 552.6 850.4 554.0 848.7 553.3C846.9 552.7 845.7 550.0 843.7 549.2C841.7 548.3 838.1 547.6 835.3 547.5C832.6 547.4 828.3 547.7 825.3 548.3C822.3 549.0 818.1 551.2 815.3 551.7C812.6 552.2 809.2 552.0 807.0 551.7C804.8 551.3 802.6 550.4 800.3 549.2C798.1 547.9 794.5 545.1 792.0 543.3C789.5 541.6 785.7 539.5 783.7 537.5C781.6 535.5 779.5 532.4 778.3 530.0C777.1 527.6 776.1 524.2 775.7 521.7C775.2 519.2 775.1 516.1 775.3 513.3C775.5 510.6 776.4 506.1 777.0 503.3C777.6 500.6 778.8 497.5 779.5 495.0C780.2 492.5 781.4 488.7 782.0 486.7C782.6 484.7 782.7 483.2 783.7 481.7C784.7 480.2 787.0 478.2 788.7 476.7C790.3 475.1 793.1 472.8 794.5 471.2C795.9 469.7 797.1 467.9 798.2 466.2C799.4 464.6 800.9 461.9 802.0 460.0C803.1 458.1 804.7 455.5 805.8 453.8C806.8 452.0 807.8 448.8 808.9 448.1Z M983.7 606.7C984.7 606.7 986.4 609.8 987.0 611.7C987.6 613.5 988.2 616.7 987.8 619.2C987.5 621.7 985.4 625.5 984.5 628.3C983.6 631.2 982.9 635.6 982.0 638.3C981.1 641.1 979.9 644.7 978.7 646.7C977.4 648.7 975.3 651.2 973.7 651.7C972.0 652.2 969.2 651.2 967.8 650.0C966.5 648.8 964.9 645.6 964.5 643.3C964.1 641.1 965.0 637.5 965.3 635.0C965.7 632.5 966.5 628.9 967.0 626.7C967.5 624.4 967.4 621.5 968.7 620.0C969.9 618.5 973.6 617.9 975.3 616.7C977.1 615.4 979.1 613.2 980.3 611.7C981.6 610.2 982.7 606.7 983.7 606.7Z M823.7 406.7C822.2 405.6 816.7 401.5 815.3 400.0C814.0 398.5 813.5 397.4 814.5 396.7C815.5 395.9 819.4 395.8 822.0 395.0C824.6 394.2 829.5 393.4 832.0 391.7C834.5 389.9 836.4 385.2 838.7 383.3C840.9 381.5 844.8 380.2 847.0 379.2C849.2 378.2 852.3 378.5 853.7 376.7C855.0 374.8 855.8 369.2 856.2 366.7C856.5 364.2 855.5 361.6 856.2 360.0C856.8 358.4 861.5 357.1 860.3 355.8C859.2 354.6 850.9 353.3 848.7 351.7C846.4 350.0 845.6 347.2 845.3 345.0C845.1 342.8 845.5 338.7 847.0 336.7C848.5 334.7 853.1 333.2 855.3 331.7C857.6 330.2 860.2 328.7 862.0 326.7C863.8 324.7 865.5 320.8 867.0 318.3C868.5 315.8 870.8 312.0 872.0 310.0C873.2 308.0 873.8 306.8 875.3 305.0C876.8 303.2 879.8 300.1 882.0 298.3C884.2 296.6 887.8 294.5 890.3 293.3C892.8 292.2 895.9 291.5 898.7 290.8C901.4 290.2 905.7 289.5 908.7 289.2C911.7 288.8 916.2 288.0 918.7 288.3C921.2 288.7 923.3 290.5 925.3 291.7C927.3 292.8 929.5 294.8 932.0 295.8C934.5 296.8 939.2 297.5 942.0 298.3C944.8 299.2 948.1 300.7 950.3 301.7C952.6 302.7 955.6 303.9 957.0 305.0C958.4 306.1 958.2 309.2 959.5 309.2C960.8 309.2 963.7 305.9 965.3 305.0C967.0 304.1 969.1 302.8 970.3 303.3C971.6 303.8 971.9 308.1 973.7 308.3C975.4 308.6 979.2 305.8 982.0 305.0C984.8 304.2 989.5 303.8 992.0 303.3C994.5 302.8 996.4 302.2 998.7 301.7C1000.9 301.2 1004.5 300.5 1007.0 300.0C1009.5 299.5 1013.1 298.3 1015.3 298.3C1017.6 298.3 1020.0 300.0 1022.0 300.0C1024.0 300.0 1026.4 298.8 1028.7 298.3C1030.9 297.8 1034.8 297.7 1037.0 296.7C1039.2 295.7 1042.4 293.4 1043.7 291.7C1044.9 289.9 1044.6 286.8 1045.3 285.0C1046.1 283.2 1047.2 281.5 1048.7 280.0C1050.2 278.5 1053.3 275.2 1055.3 275.0C1057.3 274.8 1060.8 276.6 1062.0 278.3C1063.2 280.1 1063.2 283.9 1063.7 286.7C1064.2 289.4 1065.3 293.7 1065.3 296.7C1065.3 299.7 1063.2 298.7 1063.7 306.7C1064.2 314.7 1068.4 333.5 1068.7 350.0C1068.9 366.5 1068.3 398.7 1065.3 416.7C1062.3 434.7 1051.4 461.2 1048.7 470.0C1045.9 478.8 1047.0 473.5 1047.0 475.0C1047.0 476.5 1048.9 478.0 1048.7 480.0C1048.4 482.0 1046.8 487.6 1045.3 488.3C1043.8 489.1 1040.7 485.8 1038.7 485.0C1036.7 484.2 1034.2 483.3 1032.0 483.3C1029.8 483.3 1026.2 485.0 1023.7 485.0C1021.2 485.0 1017.8 483.8 1015.3 483.3C1012.8 482.8 1007.8 481.2 1007.0 481.7C1006.2 482.2 1009.1 485.4 1010.3 486.7C1011.6 487.9 1014.1 488.8 1015.3 490.0C1016.6 491.2 1018.9 493.2 1018.7 495.0C1018.4 496.8 1015.4 499.7 1013.7 501.7C1011.9 503.7 1009.2 506.6 1007.0 508.3C1004.8 510.1 1001.4 511.8 998.7 513.3C995.9 514.8 991.7 516.8 988.7 518.3C985.7 519.8 981.4 522.1 978.7 523.3C975.9 524.6 971.7 525.9 970.3 526.7C969.0 527.5 970.0 529.0 969.5 528.8C969.0 528.5 968.1 526.5 967.2 525.0C966.4 523.5 964.6 520.6 963.5 518.8C962.4 516.9 961.1 514.6 959.8 512.5C958.4 510.4 956.2 507.4 954.8 505.0C953.2 502.6 951.2 498.9 949.8 496.2C948.2 493.6 946.1 489.9 944.8 487.5C943.4 485.1 942.0 482.1 941.0 480.0C940.0 477.9 938.6 475.1 938.2 473.8C937.9 472.4 939.0 472.4 938.9 471.2C938.8 470.1 937.6 467.4 937.6 466.2C937.6 465.1 938.5 464.9 938.9 463.8C939.2 462.6 939.8 460.4 940.1 458.8C940.5 457.1 941.1 454.2 941.4 452.5C941.7 450.8 942.1 448.7 942.0 447.5C941.9 446.3 941.5 444.6 940.8 444.4C940.0 444.2 938.3 446.1 937.0 446.2C935.7 446.4 933.7 446.0 932.0 445.6C930.3 445.2 927.4 444.4 925.8 443.8C924.1 443.1 921.7 442.2 920.8 441.2C919.8 440.3 920.0 438.6 919.5 437.5C919.0 436.4 917.8 434.9 917.6 433.8C917.4 432.6 918.7 430.5 918.2 430.0C917.8 429.5 915.6 430.6 914.5 430.6C913.4 430.6 912.1 430.2 910.8 430.0C909.4 429.8 907.2 429.2 905.8 429.4C904.2 429.6 901.0 430.6 900.8 431.2C900.5 431.9 903.7 433.0 903.9 433.8C904.1 434.5 902.5 435.3 902.0 436.2C901.5 437.2 901.1 438.9 900.8 440.0C900.4 441.1 900.1 443.8 899.5 443.8C898.9 443.8 897.8 441.1 897.0 440.0C896.2 438.9 895.2 437.6 894.5 436.2C893.8 434.9 892.8 432.8 892.0 431.2C891.2 429.8 890.6 427.8 889.5 426.2C888.4 424.8 886.0 422.8 884.5 421.2C883.0 419.8 881.0 417.8 879.5 416.2C878.0 414.8 875.6 412.3 874.5 411.2C873.4 410.2 872.8 409.0 872.0 409.4C871.2 409.8 869.3 412.3 869.5 413.8C869.7 415.2 872.1 417.3 873.2 418.8C874.4 420.2 875.7 421.9 877.0 423.1C878.3 424.3 880.7 425.8 882.0 426.9C883.3 427.9 885.1 429.2 885.8 430.0C886.4 430.8 886.8 431.6 886.4 431.9C886.0 432.2 883.9 431.6 883.2 431.9C882.6 432.2 882.0 432.9 882.0 433.8C882.0 434.6 883.2 436.8 883.2 437.5C883.2 438.2 882.5 438.6 882.0 438.1C881.5 437.7 881.1 435.4 880.1 434.4C879.2 433.3 877.2 432.2 875.8 431.2C874.3 430.3 872.2 429.2 870.8 428.1C869.2 427.0 867.1 425.2 865.8 423.8C864.4 422.3 862.8 419.8 862.0 418.8C861.2 417.7 861.5 417.3 860.8 416.9C860.0 416.4 858.3 415.5 857.0 415.6C855.7 415.7 853.5 417.0 852.0 417.5C850.5 418.0 848.7 418.2 847.0 418.8C845.3 419.3 842.1 420.4 840.8 421.2C839.4 422.1 838.8 423.3 838.2 424.4C837.7 425.4 837.9 427.2 837.0 428.1C836.1 429.1 833.3 429.6 832.0 430.6C830.7 431.7 829.1 433.6 828.2 435.0C827.4 436.4 827.1 438.8 826.4 440.0C825.6 441.2 824.7 442.5 823.2 443.1C821.8 443.8 818.9 443.9 817.0 444.4C815.1 444.8 812.2 446.2 810.8 446.2C809.2 446.2 808.1 444.8 807.0 444.4C805.9 443.9 804.2 443.8 803.2 443.1C802.3 442.5 801.5 441.0 800.8 440.0C800.0 439.0 798.3 437.8 798.2 436.2C798.2 434.8 799.8 431.7 800.1 430.0C800.5 428.3 800.8 426.5 800.8 425.0C800.7 423.5 799.8 420.9 799.5 420.0C799.2 419.1 796.8 419.1 798.7 418.7C800.5 418.3 808.0 417.4 812.0 417.3C816.0 417.2 821.8 418.1 825.3 418.0C828.8 417.9 834.3 417.9 835.3 416.7C836.3 415.5 833.5 411.4 832.0 410.0C830.5 408.6 826.6 407.5 825.3 407.0C824.1 406.5 825.2 407.7 823.7 406.7Z M808.7 356.7C809.5 355.5 813.8 353.1 815.3 353.3C816.8 353.6 818.3 356.6 818.7 358.3C819.0 360.1 817.1 363.5 817.8 365.0C818.6 366.5 822.3 366.8 823.7 368.3C825.0 369.8 825.8 373.0 827.0 375.0C828.2 377.0 831.0 379.9 832.0 381.7C833.0 383.4 834.4 385.4 833.7 386.7C832.9 387.9 829.2 389.2 827.0 390.0C824.8 390.8 820.8 391.5 818.7 391.7C816.5 391.8 813.0 391.7 812.8 390.8C812.7 390.0 817.6 387.2 817.8 385.8C818.1 384.5 814.4 382.8 814.5 381.7C814.6 380.5 818.5 379.6 818.7 378.3C818.8 377.1 816.2 374.8 815.3 373.3C814.5 371.8 813.1 369.8 812.8 368.3C812.6 366.8 814.2 364.5 813.7 363.3C813.2 362.2 810.2 361.8 809.5 360.8C808.8 359.8 807.8 357.8 808.7 356.7Z M797.0 375.0C798.1 373.2 801.7 370.9 803.7 370.0C805.7 369.1 809.2 368.4 810.3 369.2C811.5 369.9 811.7 373.1 811.2 375.0C810.7 376.9 808.6 380.2 807.0 381.7C805.4 383.2 802.0 385.0 800.3 385.0C798.7 385.0 796.7 383.2 796.2 381.7C795.7 380.2 795.9 376.8 797.0 375.0Z M993.7 283.3C993.9 281.6 998.3 278.7 1000.3 276.7C1002.3 274.7 1004.8 272.0 1007.0 270.0C1009.2 268.0 1012.6 265.1 1015.3 263.3C1018.1 261.6 1022.1 259.7 1025.3 258.3C1028.6 257.0 1033.5 255.0 1037.0 254.2C1040.5 253.3 1047.2 252.1 1048.7 252.5C1050.2 252.9 1048.8 255.5 1047.0 256.7C1045.2 257.8 1040.0 258.9 1037.0 260.0C1034.0 261.1 1029.8 262.8 1027.0 264.2C1024.2 265.5 1020.9 267.3 1018.7 269.2C1016.4 271.0 1013.8 274.5 1012.0 276.7C1010.2 278.8 1008.0 281.5 1007.0 283.3C1006.0 285.2 1006.6 288.4 1005.3 289.2C1004.1 289.9 1000.4 289.2 998.7 288.3C996.9 287.5 993.4 285.1 993.7 283.3Z M869.5 439.4C870.6 438.9 875.8 438.4 877.0 438.8C878.2 439.1 878.2 441.1 877.6 441.9C877.1 442.6 874.5 443.8 873.2 443.8C872.0 443.8 870.1 442.5 869.5 441.9C868.9 441.2 868.4 439.8 869.5 439.4Z M855.8 428.8C856.2 427.6 858.9 427.2 859.5 428.1C860.1 429.1 860.2 433.9 859.8 435.0C859.3 436.1 857.0 436.6 856.4 435.6C855.8 434.7 855.3 429.9 855.8 428.8Z M857.0 421.2C857.3 420.4 858.9 420.2 859.2 421.0C859.6 421.8 859.8 425.4 859.5 426.2C859.2 427.1 857.8 427.2 857.4 426.5C857.0 425.8 856.7 422.1 857.0 421.2Z M930.1 449.4C930.7 448.9 933.8 448.0 934.5 448.1C935.2 448.2 935.7 449.5 935.1 450.0C934.6 450.5 931.5 451.3 930.8 451.2C930.0 451.2 929.6 449.8 930.1 449.4Z M902.6 448.1C903.8 448.0 909.6 448.5 910.8 448.8C911.9 449.0 911.3 449.9 910.1 450.0C909.0 450.1 904.1 450.0 903.0 449.8C901.9 449.5 901.5 448.3 902.6 448.1Z M837.0 433.1C837.3 432.8 839.1 432.6 839.5 432.8C839.9 432.9 839.8 434.1 839.5 434.4C839.2 434.7 837.6 434.8 837.2 434.6C836.9 434.4 836.7 433.4 837.0 433.1Z M1063.7 340.0C1068.7 318.2 1064.6 314.1 1065.3 308.3C1066.1 302.6 1067.2 302.7 1068.7 301.7C1070.2 300.7 1074.1 301.9 1075.3 301.7C1076.6 301.4 1077.8 300.8 1077.0 300.0C1076.2 299.2 1071.6 298.4 1070.3 296.7C1069.1 294.9 1068.4 290.6 1068.7 288.3C1068.9 286.1 1070.5 283.2 1072.0 281.7C1073.5 280.2 1076.2 279.3 1078.7 278.3C1081.2 277.3 1085.7 275.8 1088.7 275.0C1091.7 274.2 1096.2 274.3 1098.7 273.3C1101.2 272.3 1103.3 269.8 1105.3 268.3C1107.3 266.8 1109.5 264.6 1112.0 263.3C1114.5 262.1 1119.0 261.0 1122.0 260.0C1125.0 259.0 1129.0 257.3 1132.0 256.7C1135.0 256.0 1139.5 256.3 1142.0 255.8C1144.5 255.3 1147.2 254.5 1148.7 253.3C1150.2 252.2 1150.2 249.3 1152.0 248.3C1153.8 247.3 1158.1 246.2 1160.3 246.7C1162.6 247.2 1164.8 250.5 1167.0 251.7C1169.2 252.8 1172.6 253.4 1175.3 254.2C1178.1 254.9 1183.3 255.8 1185.3 256.7C1187.3 257.5 1188.7 258.9 1188.7 260.0C1188.7 261.1 1186.8 262.9 1185.3 264.2C1183.8 265.4 1180.7 267.2 1178.7 268.3C1176.7 269.5 1174.2 270.4 1172.0 271.7C1169.8 272.9 1163.7 276.4 1163.7 276.7C1163.7 276.9 1169.2 274.1 1172.0 273.3C1174.8 272.6 1179.0 271.7 1182.0 271.7C1185.0 271.7 1189.0 272.8 1192.0 273.3C1195.0 273.8 1199.5 274.5 1202.0 275.0C1204.5 275.5 1206.2 276.7 1208.7 276.7C1211.2 276.7 1216.4 275.6 1218.7 275.0C1220.9 274.4 1221.7 272.5 1223.7 272.5C1225.7 272.5 1229.8 273.9 1232.0 275.0C1234.2 276.1 1237.9 278.5 1238.7 280.0C1239.4 281.5 1236.5 283.8 1237.0 285.0C1237.5 286.2 1240.2 288.3 1242.0 288.3C1243.8 288.3 1246.7 285.2 1248.7 285.0C1250.7 284.8 1252.8 286.7 1255.3 286.7C1257.8 286.7 1262.8 285.8 1265.3 285.0C1267.8 284.2 1270.0 282.7 1272.0 281.7C1274.0 280.7 1276.4 278.6 1278.7 278.3C1280.9 278.1 1285.0 279.2 1287.0 280.0C1289.0 280.8 1290.2 282.6 1292.0 283.3C1293.8 284.1 1296.2 284.2 1298.7 285.0C1301.2 285.8 1305.7 287.6 1308.7 288.3C1311.7 289.1 1315.7 289.9 1318.7 290.0C1321.7 290.1 1325.9 288.9 1328.7 289.2C1331.4 289.4 1335.0 290.5 1337.0 291.7C1339.0 292.8 1340.2 295.7 1342.0 296.7C1343.8 297.7 1346.2 298.3 1348.7 298.3C1351.2 298.3 1356.2 297.2 1358.7 296.7C1361.2 296.2 1363.3 295.2 1365.3 295.0C1367.3 294.8 1369.0 294.8 1372.0 295.0C1375.0 295.2 1381.8 296.2 1385.3 296.7C1388.8 297.2 1392.6 297.6 1395.3 298.3C1398.1 299.1 1401.4 300.4 1403.7 301.7C1405.9 302.9 1408.1 305.4 1410.3 306.7C1412.6 307.9 1416.2 309.0 1418.7 310.0C1421.2 311.0 1424.4 312.2 1427.0 313.3C1429.6 314.5 1435.7 316.2 1436.2 317.5C1436.7 318.8 1432.0 320.5 1430.3 321.7C1428.7 322.8 1426.8 324.6 1425.3 325.0C1423.8 325.4 1422.1 324.9 1420.3 324.2C1418.6 323.4 1415.7 321.0 1413.7 320.0C1411.7 319.0 1408.8 317.2 1407.0 317.5C1405.2 317.8 1403.5 320.5 1402.0 321.7C1400.5 322.8 1397.1 323.5 1397.0 325.0C1396.9 326.5 1401.2 330.2 1401.2 331.7C1401.2 333.2 1398.9 334.0 1397.0 335.0C1395.1 336.0 1391.2 337.3 1388.7 338.3C1386.2 339.3 1382.8 340.7 1380.3 341.7C1377.8 342.7 1374.5 344.2 1372.0 345.0C1369.5 345.8 1366.2 345.9 1363.7 346.7C1361.2 347.4 1357.3 349.0 1355.3 350.0C1353.3 351.0 1351.6 352.1 1350.3 353.3C1349.1 354.6 1347.1 356.8 1347.0 358.3C1346.9 359.8 1349.5 361.8 1349.5 363.3C1349.5 364.8 1348.1 366.8 1347.0 368.3C1345.9 369.8 1343.5 371.8 1342.0 373.3C1340.5 374.8 1338.5 376.8 1337.0 378.3C1335.5 379.8 1333.4 381.8 1332.0 383.3C1330.6 384.8 1328.8 388.6 1327.8 388.3C1326.8 388.1 1325.8 383.9 1325.3 381.7C1324.8 379.4 1324.4 375.8 1324.5 373.3C1324.6 370.8 1325.3 367.2 1326.2 365.0C1327.0 362.8 1328.7 360.1 1330.3 358.3C1332.0 356.6 1335.0 355.1 1337.0 353.3C1339.0 351.6 1341.9 348.4 1343.7 346.7C1345.4 344.9 1347.7 343.2 1348.7 341.7C1349.7 340.2 1350.8 337.2 1350.3 336.7C1349.8 336.2 1347.1 337.3 1345.3 338.3C1343.6 339.3 1340.7 342.8 1338.7 343.3C1336.7 343.8 1334.0 341.4 1332.0 341.7C1330.0 341.9 1326.8 343.8 1325.3 345.0C1323.8 346.2 1323.5 349.0 1322.0 350.0C1320.5 351.0 1317.3 351.7 1315.3 351.7C1313.3 351.7 1310.7 350.0 1308.7 350.0C1306.7 350.0 1304.2 351.2 1302.0 351.7C1299.8 352.2 1295.9 352.8 1293.7 353.3C1291.4 353.8 1289.2 354.2 1287.0 355.0C1284.8 355.8 1280.9 357.1 1278.7 358.3C1276.4 359.6 1274.0 361.8 1272.0 363.3C1270.0 364.8 1267.1 367.0 1265.3 368.3C1263.6 369.7 1260.3 371.8 1260.3 372.5C1260.3 373.2 1263.6 373.0 1265.3 373.3C1267.1 373.7 1270.2 374.0 1272.0 375.0C1273.8 376.0 1276.1 378.0 1277.0 380.0C1277.9 382.0 1278.1 385.8 1277.8 388.3C1277.6 390.8 1276.5 394.2 1275.3 396.7C1274.2 399.2 1272.1 402.8 1270.3 405.0C1268.6 407.2 1265.7 409.9 1263.7 411.7C1261.7 413.4 1259.0 415.2 1257.0 416.7C1255.0 418.2 1252.3 420.4 1250.3 421.7C1248.3 422.9 1245.7 423.8 1243.7 425.0C1241.7 426.2 1238.8 428.5 1237.0 430.0C1235.2 431.5 1232.2 433.8 1232.0 435.0C1231.8 436.2 1234.3 437.1 1235.3 438.3C1236.3 439.6 1238.3 441.6 1238.7 443.3C1239.0 445.1 1238.8 448.6 1237.8 450.0C1236.8 451.4 1233.4 453.0 1232.0 452.5C1230.6 452.0 1229.4 448.3 1228.7 446.7C1227.9 445.0 1228.0 442.9 1227.0 441.7C1226.0 440.4 1223.5 438.6 1222.0 438.3C1220.5 438.1 1218.2 439.2 1217.0 440.0C1215.8 440.8 1214.9 443.3 1213.7 443.3C1212.4 443.3 1208.4 441.2 1208.7 440.0C1208.9 438.8 1214.6 436.4 1215.3 435.0C1216.1 433.6 1214.9 431.1 1213.7 430.8C1212.4 430.6 1208.8 432.5 1207.0 433.3C1205.2 434.2 1202.2 435.4 1202.0 436.7C1201.8 437.9 1204.1 440.2 1205.3 441.7C1206.6 443.2 1209.8 444.9 1210.3 446.7C1210.8 448.4 1208.4 451.3 1208.7 453.3C1208.9 455.3 1211.0 458.0 1212.0 460.0C1213.0 462.0 1215.1 464.7 1215.3 466.7C1215.6 468.7 1214.4 471.6 1213.7 473.3C1212.9 475.1 1211.3 476.6 1210.3 478.3C1209.3 480.1 1208.2 483.0 1207.0 485.0C1205.8 487.0 1203.8 490.2 1202.0 491.7C1200.2 493.2 1197.3 494.2 1195.3 495.0C1193.3 495.8 1190.7 495.9 1188.7 496.7C1186.7 497.4 1184.0 499.0 1182.0 500.0C1180.0 501.0 1176.8 502.3 1175.3 503.3C1173.8 504.3 1173.2 506.4 1172.0 506.7C1170.8 506.9 1168.5 505.0 1167.0 505.0C1165.5 505.0 1162.2 505.7 1162.0 506.7C1161.8 507.7 1164.3 510.2 1165.3 511.7C1166.3 513.2 1167.7 514.9 1168.7 516.7C1169.7 518.4 1171.8 521.3 1172.0 523.3C1172.2 525.3 1170.2 530.5 1170.3 530.0C1170.5 529.5 1172.3 521.0 1172.8 520.0C1173.3 519.0 1174.0 521.8 1173.7 523.3C1173.3 524.8 1171.6 528.2 1170.3 530.0C1169.1 531.8 1166.6 533.5 1165.3 535.0C1164.1 536.5 1163.0 540.0 1162.0 540.0C1161.0 540.0 1160.2 536.8 1158.7 535.0C1157.2 533.2 1154.0 529.8 1152.0 528.3C1150.0 526.8 1147.1 525.2 1145.3 525.0C1143.6 524.8 1141.2 525.9 1140.3 526.7C1139.5 527.4 1139.5 528.0 1139.5 530.0C1139.5 532.0 1139.6 537.5 1140.3 540.0C1141.1 542.5 1143.2 544.9 1144.5 546.7C1145.8 548.4 1147.3 549.9 1148.7 551.7C1150.0 553.4 1152.4 556.5 1153.7 558.3C1154.9 560.2 1156.8 563.2 1157.0 564.2C1157.2 565.2 1156.3 565.6 1155.3 565.0C1154.3 564.4 1151.7 561.5 1150.3 560.0C1149.0 558.5 1147.4 556.8 1146.2 555.0C1144.9 553.2 1143.1 550.3 1142.0 548.3C1140.9 546.3 1139.3 544.2 1138.7 541.7C1138.0 539.2 1137.6 532.9 1137.8 531.7C1138.1 530.4 1140.2 534.1 1140.3 533.3C1140.5 532.6 1139.4 528.9 1138.7 526.7C1137.9 524.4 1136.3 520.3 1135.3 518.3C1134.3 516.3 1133.2 513.8 1132.0 513.3C1130.8 512.8 1128.0 515.5 1127.0 515.0C1126.0 514.5 1126.1 512.0 1125.3 510.0C1124.6 508.0 1123.1 503.9 1122.0 501.7C1120.9 499.4 1119.3 495.8 1117.8 495.0C1116.3 494.2 1114.1 496.2 1112.0 496.7C1109.9 497.2 1106.2 498.3 1103.7 498.3C1101.2 498.3 1096.6 496.4 1095.3 496.7C1094.1 496.9 1096.3 498.8 1095.3 500.0C1094.3 501.2 1090.5 503.5 1088.7 505.0C1086.8 506.5 1084.0 508.2 1082.8 510.0C1081.7 511.8 1080.8 514.7 1081.2 516.7C1081.5 518.7 1084.9 521.1 1085.3 523.3C1085.8 525.6 1084.7 529.4 1084.0 531.7C1083.3 533.9 1081.7 536.8 1080.7 538.3C1079.7 539.9 1078.4 542.0 1077.3 542.0C1076.3 542.0 1074.7 540.1 1073.7 538.3C1072.6 536.5 1071.3 532.5 1070.3 530.0C1069.3 527.5 1068.0 524.2 1067.0 521.7C1066.0 519.2 1064.7 516.1 1063.7 513.3C1062.7 510.6 1061.0 505.6 1060.3 503.3C1059.7 501.1 1060.2 499.1 1059.5 498.3C1058.8 497.6 1057.0 499.1 1055.3 498.3C1053.7 497.6 1050.2 494.8 1048.7 493.3C1047.2 491.8 1046.8 489.6 1045.3 488.3C1043.8 487.1 1040.7 485.8 1038.7 485.0C1036.7 484.2 1033.0 488.1 1032.0 483.3C1031.0 478.6 1027.2 474.8 1032.0 453.3C1036.8 431.8 1058.7 361.8 1063.7 340.0Z M1083.7 538.3C1084.4 537.7 1087.0 538.2 1087.8 539.2C1088.7 540.2 1089.6 543.4 1089.5 545.0C1089.4 546.6 1087.9 549.4 1087.0 550.0C1086.1 550.6 1084.3 550.2 1083.7 549.2C1083.0 548.2 1082.8 545.0 1082.8 543.3C1082.8 541.7 1082.9 539.0 1083.7 538.3Z M1210.3 487.5C1211.1 486.8 1213.9 485.8 1214.5 486.7C1215.1 487.5 1215.0 492.0 1214.5 493.3C1214.0 494.7 1211.9 496.1 1211.2 495.8C1210.4 495.6 1209.6 492.9 1209.5 491.7C1209.4 490.4 1209.6 488.2 1210.3 487.5Z M1172.8 505.0C1173.3 504.2 1177.0 503.8 1177.8 504.2C1178.7 504.5 1179.2 506.8 1178.7 507.5C1178.2 508.2 1175.4 509.5 1174.5 509.2C1173.6 508.8 1172.3 505.8 1172.8 505.0Z M1281.2 375.0C1281.9 374.8 1283.9 378.0 1284.5 380.0C1285.1 382.0 1284.8 385.8 1285.3 388.3C1285.8 390.8 1287.8 394.9 1287.8 396.7C1287.8 398.4 1286.0 398.5 1285.3 400.0C1284.7 401.5 1284.3 405.4 1283.7 406.7C1283.0 407.9 1281.7 409.3 1281.2 408.3C1280.7 407.3 1280.5 402.8 1280.3 400.0C1280.2 397.2 1280.5 392.8 1280.3 390.0C1280.2 387.2 1279.4 383.9 1279.5 381.7C1279.6 379.4 1280.4 375.2 1281.2 375.0Z M1278.7 413.3C1279.7 412.8 1282.2 414.2 1283.7 415.0C1285.2 415.8 1287.2 418.1 1288.7 418.3C1290.2 418.6 1293.4 416.2 1293.7 416.7C1293.9 417.2 1291.6 420.4 1290.3 421.7C1289.1 422.9 1287.1 424.2 1285.3 425.0C1283.6 425.8 1280.2 426.9 1278.7 426.7C1277.2 426.4 1275.6 424.6 1275.3 423.3C1275.1 422.1 1276.5 419.8 1277.0 418.3C1277.5 416.8 1277.7 413.8 1278.7 413.3Z M1275.3 429.2C1276.5 428.7 1278.9 430.3 1279.5 431.7C1280.1 433.0 1280.1 436.3 1279.5 438.3C1278.9 440.3 1276.7 443.5 1275.3 445.0C1274.0 446.5 1272.1 447.3 1270.3 448.3C1268.6 449.3 1265.9 450.7 1263.7 451.7C1261.4 452.7 1257.6 454.0 1255.3 455.0C1253.1 456.0 1250.7 457.6 1248.7 458.3C1246.7 459.1 1242.2 460.5 1242.0 460.0C1241.8 459.5 1245.2 456.2 1247.0 455.0C1248.8 453.8 1251.4 452.9 1253.7 451.7C1255.9 450.4 1259.8 448.2 1262.0 446.7C1264.2 445.2 1267.2 443.4 1268.7 441.7C1270.2 439.9 1271.0 436.9 1272.0 435.0C1273.0 433.1 1274.2 429.7 1275.3 429.2Z M1241.2 457.5C1242.0 456.8 1245.3 456.2 1246.2 456.7C1247.0 457.2 1247.4 459.6 1247.0 460.8C1246.6 462.1 1244.7 464.9 1243.7 465.0C1242.7 465.1 1240.7 462.8 1240.3 461.7C1240.0 460.5 1240.3 458.2 1241.2 457.5Z M1249.5 455.3C1250.5 454.6 1255.9 453.5 1257.0 453.7C1258.1 453.8 1258.0 455.4 1257.0 456.2C1256.0 456.9 1251.5 458.8 1250.3 458.7C1249.2 458.5 1248.5 456.1 1249.5 455.3Z M1121.2 230.0C1121.7 228.6 1125.1 224.7 1127.0 223.3C1128.9 222.0 1132.0 220.6 1133.7 220.8C1135.3 221.1 1138.1 223.9 1137.8 225.0C1137.6 226.1 1131.6 227.6 1132.0 228.3C1132.4 229.1 1138.5 229.1 1140.3 230.0C1142.2 230.9 1144.8 232.9 1144.5 234.2C1144.2 235.4 1140.8 238.2 1138.7 238.3C1136.5 238.5 1132.6 235.9 1130.3 235.0C1128.1 234.1 1125.0 233.2 1123.7 232.5C1122.3 231.8 1120.7 231.4 1121.2 230.0Z M1143.7 243.3C1144.4 241.8 1149.5 235.9 1152.0 235.0C1154.5 234.1 1158.7 236.8 1160.3 237.5C1162.0 238.2 1163.8 239.2 1162.8 240.0C1161.8 240.8 1156.0 241.8 1153.7 242.5C1151.3 243.2 1148.5 244.9 1147.0 245.0C1145.5 245.1 1142.9 244.8 1143.7 243.3Z M1264.5 260.0C1265.0 258.9 1268.2 256.9 1270.3 256.7C1272.5 256.4 1275.9 258.0 1278.7 258.3C1281.4 258.7 1287.0 258.5 1288.7 259.2C1290.3 259.8 1290.5 261.6 1289.5 262.5C1288.5 263.4 1284.4 264.5 1282.0 265.0C1279.6 265.5 1275.9 266.0 1273.7 265.8C1271.4 265.7 1268.4 265.0 1267.0 264.2C1265.6 263.3 1264.0 261.1 1264.5 260.0Z M1294.5 262.5C1295.5 262.0 1299.9 261.5 1302.0 261.7C1304.1 261.8 1307.8 262.7 1308.7 263.3C1309.5 264.0 1309.1 265.3 1307.8 265.8C1306.6 266.3 1302.2 266.8 1300.3 266.7C1298.5 266.5 1296.2 265.6 1295.3 265.0C1294.5 264.4 1293.5 263.0 1294.5 262.5Z M1276.2 273.3C1276.7 272.8 1280.8 271.8 1282.0 272.0C1283.2 272.2 1285.0 274.4 1284.5 275.0C1284.0 275.6 1279.9 276.1 1278.7 275.8C1277.4 275.6 1275.7 273.9 1276.2 273.3Z M1399.5 288.3C1400.2 287.7 1403.6 286.7 1405.3 286.7C1407.1 286.7 1410.9 287.7 1411.2 288.3C1411.4 289.0 1408.6 290.5 1407.0 290.8C1405.4 291.2 1401.5 291.2 1400.3 290.8C1399.2 290.5 1398.8 289.0 1399.5 288.3Z M1430.3 330.8C1431.5 330.7 1437.3 331.2 1438.7 331.7C1440.0 332.1 1440.6 333.5 1439.5 333.7C1438.4 333.8 1432.5 332.9 1431.2 332.5C1429.8 332.1 1429.2 331.0 1430.3 330.8Z M1129.5 551.7C1129.8 551.2 1132.0 551.5 1133.7 552.5C1135.3 553.5 1138.3 556.5 1140.3 558.3C1142.3 560.2 1145.0 563.2 1147.0 565.0C1149.0 566.8 1151.7 568.5 1153.7 570.0C1155.7 571.5 1158.6 573.8 1160.3 575.0C1162.1 576.2 1164.8 576.8 1165.3 578.3C1165.8 579.8 1164.4 583.6 1163.7 585.0C1162.9 586.4 1161.6 587.8 1160.3 587.5C1159.1 587.2 1156.8 585.0 1155.3 583.3C1153.8 581.7 1152.1 578.9 1150.3 576.7C1148.6 574.4 1145.7 570.8 1143.7 568.3C1141.7 565.8 1138.8 561.9 1137.0 560.0C1135.2 558.1 1133.1 557.1 1132.0 555.8C1130.9 554.6 1129.2 552.2 1129.5 551.7Z M1162.0 589.2C1162.8 588.7 1166.2 588.1 1168.7 588.3C1171.2 588.6 1175.7 590.2 1178.7 590.8C1181.7 591.5 1185.7 591.8 1188.7 592.5C1191.7 593.2 1196.4 595.1 1198.7 595.8C1200.9 596.6 1203.7 597.1 1203.7 597.5C1203.7 597.9 1200.9 598.5 1198.7 598.3C1196.4 598.2 1191.7 597.2 1188.7 596.7C1185.7 596.2 1181.7 595.5 1178.7 595.0C1175.7 594.5 1170.9 593.8 1168.7 593.3C1166.4 592.8 1164.7 592.3 1163.7 591.7C1162.7 591.0 1161.2 589.7 1162.0 589.2Z M1205.3 600.0C1205.6 599.4 1211.2 598.0 1212.0 598.3C1212.8 598.7 1211.3 602.2 1210.3 602.5C1209.3 602.8 1205.1 600.6 1205.3 600.0Z M1208.7 596.7C1210.3 596.3 1218.5 595.8 1220.3 595.8C1222.2 595.9 1222.8 596.7 1221.2 597.0C1219.5 597.3 1211.4 598.0 1209.5 598.0C1207.6 598.0 1207.0 597.0 1208.7 596.7Z M1220.3 601.7C1221.1 600.8 1225.4 597.5 1227.0 596.7C1228.6 595.8 1231.2 595.5 1231.2 595.8C1231.2 596.2 1228.4 598.2 1227.0 599.2C1225.6 600.2 1223.0 602.1 1222.0 602.5C1221.0 602.9 1219.6 602.5 1220.3 601.7Z M1172.8 564.2C1173.5 563.0 1176.8 563.4 1178.7 562.5C1180.5 561.6 1183.3 559.7 1185.3 558.3C1187.3 557.0 1190.2 554.8 1192.0 553.3C1193.8 551.8 1195.5 549.2 1197.0 548.3C1198.5 547.5 1200.8 547.1 1202.0 547.5C1203.2 547.9 1205.3 549.7 1205.3 550.8C1205.3 552.0 1202.8 553.4 1202.0 555.0C1201.2 556.6 1200.1 560.2 1200.3 561.7C1200.6 563.2 1203.7 563.8 1203.7 565.0C1203.7 566.2 1201.3 568.5 1200.3 570.0C1199.3 571.5 1197.8 573.4 1197.0 575.0C1196.2 576.6 1196.6 579.8 1195.3 580.8C1194.1 581.8 1190.4 581.9 1188.7 581.7C1186.9 581.4 1185.2 580.2 1183.7 579.2C1182.2 578.2 1180.0 576.4 1178.7 575.0C1177.3 573.6 1175.4 571.6 1174.5 570.0C1173.6 568.4 1172.2 565.3 1172.8 564.2Z M1208.7 568.3C1210.3 567.0 1213.1 566.5 1215.3 565.8C1217.6 565.2 1222.5 564.0 1223.7 564.2C1224.8 564.3 1224.1 565.9 1222.8 566.7C1221.6 567.4 1217.0 568.2 1215.3 569.2C1213.7 570.2 1211.8 573.0 1212.0 573.3C1212.2 573.7 1215.8 571.8 1217.0 571.7C1218.2 571.5 1220.5 571.8 1220.3 572.5C1220.2 573.2 1216.9 575.0 1216.2 576.7C1215.4 578.3 1215.8 582.2 1215.3 583.3C1214.8 584.5 1213.5 584.9 1212.8 584.2C1212.2 583.4 1211.7 578.0 1211.2 578.3C1210.7 578.7 1210.1 585.5 1209.5 586.7C1208.9 587.8 1207.5 587.3 1207.0 585.8C1206.5 584.3 1206.5 578.3 1206.2 576.7C1205.8 575.0 1204.1 576.2 1204.5 575.0C1204.9 573.8 1207.0 569.7 1208.7 568.3Z M1210.3 520.0C1210.6 519.8 1212.4 523.8 1213.7 525.0C1214.9 526.2 1217.2 527.3 1218.7 528.3C1220.2 529.3 1222.2 530.2 1223.7 531.7C1225.2 533.2 1227.7 536.3 1228.7 538.3C1229.7 540.3 1230.3 543.1 1230.3 545.0C1230.3 546.9 1229.5 550.0 1228.7 550.8C1227.8 551.7 1225.4 551.5 1224.5 550.8C1223.6 550.2 1223.7 547.4 1222.8 546.7C1222.0 545.9 1219.8 546.3 1218.7 545.8C1217.5 545.3 1215.3 544.3 1215.3 543.3C1215.3 542.3 1217.9 540.3 1218.7 539.2C1219.4 538.0 1220.8 537.0 1220.3 535.8C1219.8 534.7 1216.6 533.0 1215.3 531.7C1214.1 530.3 1212.8 528.4 1212.0 526.7C1211.2 524.9 1210.1 520.2 1210.3 520.0Z M1210.3 510.0C1211.3 508.9 1214.5 508.4 1215.3 509.2C1216.2 509.9 1216.4 513.4 1216.2 515.0C1215.9 516.6 1214.8 519.8 1213.7 520.0C1212.5 520.2 1209.2 518.2 1208.7 516.7C1208.2 515.2 1209.3 511.1 1210.3 510.0Z M1199.5 540.8C1200.2 539.5 1205.0 534.3 1206.2 533.3C1207.3 532.3 1208.1 532.9 1207.3 534.2C1206.6 535.5 1202.3 541.0 1201.2 542.0C1200.0 543.0 1198.8 542.1 1199.5 540.8Z M1232.0 564.2C1232.4 563.2 1235.4 562.7 1236.2 563.3C1236.9 564.0 1237.4 567.3 1237.0 568.3C1236.6 569.3 1234.4 570.6 1233.7 570.0C1232.9 569.4 1231.6 565.2 1232.0 564.2Z M1244.5 571.7C1245.1 570.8 1248.7 569.8 1250.3 570.0C1252.0 570.2 1254.8 572.2 1255.3 573.3C1255.8 574.5 1252.9 577.0 1253.7 577.5C1254.4 578.0 1258.3 577.2 1260.3 576.7C1262.3 576.2 1264.8 574.2 1267.0 574.2C1269.2 574.2 1272.8 575.8 1275.3 576.7C1277.8 577.5 1281.4 578.9 1283.7 580.0C1285.9 581.1 1288.3 582.8 1290.3 584.2C1292.3 585.5 1295.8 587.8 1297.0 589.2C1298.2 590.5 1297.9 592.0 1298.7 593.3C1299.4 594.7 1300.9 596.8 1302.0 598.3C1303.1 599.8 1306.4 602.8 1306.2 603.3C1305.9 603.8 1302.2 602.7 1300.3 601.7C1298.5 600.7 1295.7 597.7 1293.7 596.7C1291.7 595.7 1288.8 594.8 1287.0 595.0C1285.2 595.2 1283.8 598.0 1282.0 598.3C1280.2 598.7 1277.3 597.9 1275.3 597.5C1273.3 597.1 1270.2 596.7 1268.7 595.8C1267.2 595.0 1265.3 593.0 1265.3 591.7C1265.3 590.3 1269.2 587.8 1268.7 586.7C1268.2 585.5 1264.0 584.9 1262.0 584.2C1260.0 583.4 1257.1 582.5 1255.3 581.7C1253.6 580.8 1251.7 579.2 1250.3 578.3C1249.0 577.5 1247.0 576.8 1246.2 575.8C1245.3 574.8 1243.9 572.5 1244.5 571.7Z M1300.3 587.5C1300.8 587.0 1305.1 587.4 1307.0 586.7C1308.9 585.9 1311.7 582.9 1312.8 582.5C1314.0 582.1 1314.9 583.3 1314.5 584.2C1314.1 585.0 1312.0 587.5 1310.3 588.3C1308.7 589.2 1305.2 590.1 1303.7 590.0C1302.2 589.9 1299.8 588.0 1300.3 587.5Z M1320.3 587.5C1321.4 587.9 1326.1 590.8 1327.0 591.7C1327.9 592.5 1327.2 593.7 1326.2 593.3C1325.1 593.0 1320.9 590.0 1320.0 589.2C1319.1 588.3 1319.3 587.1 1320.3 587.5Z M1332.0 594.2C1333.0 594.6 1337.2 597.1 1338.7 598.3C1340.2 599.6 1341.8 601.8 1342.0 602.5C1342.2 603.2 1341.3 603.8 1340.3 603.3C1339.3 602.8 1336.6 600.4 1335.3 599.2C1334.0 598.0 1332.2 596.1 1331.7 595.3C1331.2 594.6 1331.0 593.7 1332.0 594.2Z M1350.3 635.8C1351.5 636.3 1357.3 639.8 1358.7 640.8C1360.0 641.8 1360.6 643.0 1359.5 642.5C1358.4 642.0 1352.5 638.5 1351.2 637.5C1349.8 636.5 1349.2 635.3 1350.3 635.8Z M1393.7 626.7C1394.3 626.0 1397.8 624.3 1398.7 624.2C1399.5 624.0 1400.1 625.2 1399.5 625.8C1398.9 626.5 1395.4 628.2 1394.5 628.3C1393.6 628.5 1393.0 627.3 1393.7 626.7Z M1197.0 682.5C1196.0 681.7 1193.0 681.9 1192.0 680.0C1191.0 678.1 1191.0 672.8 1190.3 670.0C1189.7 667.2 1188.5 664.2 1187.8 661.7C1187.2 659.2 1186.3 655.6 1186.2 653.3C1186.0 651.1 1186.1 648.4 1187.0 646.7C1187.9 644.9 1189.8 643.2 1192.0 641.7C1194.2 640.2 1199.0 637.9 1202.0 636.7C1205.0 635.4 1209.8 634.6 1212.0 633.3C1214.2 632.1 1215.8 629.8 1217.0 628.3C1218.2 626.8 1218.8 625.0 1220.3 623.3C1221.8 621.7 1225.5 618.9 1227.0 617.5C1228.5 616.1 1229.1 614.3 1230.3 614.2C1231.6 614.0 1233.8 616.8 1235.3 616.7C1236.8 616.5 1238.8 614.6 1240.3 613.3C1241.8 612.1 1243.8 609.2 1245.3 608.3C1246.8 607.5 1248.6 607.2 1250.3 607.5C1252.1 607.8 1255.2 609.8 1257.0 610.0C1258.8 610.2 1261.5 608.4 1262.0 609.2C1262.5 609.9 1259.8 613.4 1260.3 615.0C1260.8 616.6 1263.6 618.5 1265.3 620.0C1267.1 621.5 1270.4 624.5 1272.0 625.0C1273.6 625.5 1275.2 625.1 1276.2 623.3C1277.2 621.6 1278.0 616.1 1278.7 613.3C1279.3 610.6 1279.7 606.0 1280.3 605.0C1281.0 604.0 1282.2 605.2 1282.8 606.7C1283.5 608.2 1283.6 612.8 1284.5 615.0C1285.4 617.2 1287.5 619.4 1288.7 621.7C1289.8 623.9 1290.5 627.8 1292.0 630.0C1293.5 632.2 1296.7 634.7 1298.7 636.7C1300.7 638.7 1303.3 641.1 1305.3 643.3C1307.3 645.6 1310.5 649.2 1312.0 651.7C1313.5 654.2 1315.0 657.5 1315.3 660.0C1315.7 662.5 1315.0 665.6 1314.5 668.3C1314.0 671.0 1313.4 674.0 1312.0 678.0C1310.6 682.0 1307.3 691.2 1305.3 694.7C1303.3 698.2 1301.7 700.3 1298.7 701.3C1295.7 702.3 1288.8 702.1 1285.3 701.3C1281.8 700.6 1277.6 698.3 1275.3 696.3C1273.1 694.3 1272.1 689.8 1270.3 688.0C1268.6 686.2 1265.4 686.2 1263.7 684.7C1261.9 683.2 1260.9 679.5 1258.7 678.0C1256.4 676.5 1252.2 675.2 1248.7 674.7C1245.2 674.2 1239.3 674.2 1235.3 674.7C1231.3 675.2 1226.0 676.5 1222.0 678.0C1218.0 679.5 1212.2 683.6 1208.7 684.7C1205.2 685.8 1200.4 685.7 1198.7 685.3C1196.9 685.0 1198.0 683.3 1197.0 682.5Z M1288.7 709.7C1290.1 708.7 1297.2 707.7 1298.7 708.7C1300.2 709.7 1299.4 714.7 1298.7 716.3C1297.9 718.0 1295.1 719.8 1293.7 719.7C1292.3 719.5 1290.1 716.8 1289.3 715.3C1288.6 713.8 1287.3 710.7 1288.7 709.7Z M1378.7 686.3C1379.2 686.1 1382.2 689.8 1383.7 691.3C1385.2 692.8 1386.7 695.3 1388.7 696.3C1390.7 697.3 1396.2 696.8 1397.0 698.0C1397.8 699.2 1395.2 703.2 1393.7 704.7C1392.2 706.2 1388.8 708.0 1387.0 708.0C1385.2 708.0 1382.5 706.2 1382.0 704.7C1381.5 703.2 1383.9 699.8 1383.7 698.0C1383.4 696.2 1381.1 694.8 1380.3 693.0C1379.6 691.2 1378.2 686.6 1378.7 686.3Z M1382.0 708.0C1383.0 708.5 1384.7 709.3 1383.7 711.3C1382.7 713.3 1377.8 718.6 1375.3 721.3C1372.8 724.1 1369.5 728.4 1367.0 729.7C1364.5 730.9 1359.2 730.9 1358.7 729.7C1358.2 728.4 1361.7 723.8 1363.7 721.3C1365.7 718.8 1370.0 715.0 1372.0 713.0C1374.0 711.0 1375.5 708.8 1377.0 708.0C1378.5 707.2 1381.0 707.5 1382.0 708.0Z M312.7 495.0C312.9 494.7 314.3 494.5 314.7 494.7C315.0 494.9 315.2 496.0 315.0 496.3C314.8 496.6 313.4 496.9 313.0 496.7C312.6 496.5 312.4 495.3 312.7 495.0Z M326.0 502.7C326.4 502.2 328.6 502.2 329.0 502.7C329.4 503.2 329.4 505.6 329.0 506.0C328.6 506.4 326.8 506.2 326.3 505.7C325.9 505.2 325.6 503.1 326.0 502.7Z M632.0 749.7C633.4 748.9 640.5 748.1 642.0 748.7C643.5 749.2 643.4 752.5 642.0 753.3C640.6 754.1 634.2 754.5 632.7 754.0C631.2 753.5 630.6 750.5 632.0 749.7Z M705.3 760.7C706.5 760.5 712.6 762.2 713.7 763.0C714.8 763.8 713.8 765.9 712.7 766.0C711.5 766.1 707.1 764.8 706.0 764.0C704.9 763.2 704.2 760.8 705.3 760.7Z M973.7 224.0C975.2 222.7 986.2 220.6 992.0 219.7C997.8 218.8 1005.5 217.8 1012.0 218.0C1018.5 218.2 1031.3 219.8 1035.3 220.7C1039.3 221.6 1040.7 222.9 1038.7 224.0C1036.7 225.1 1027.5 227.2 1022.0 228.0C1016.5 228.8 1008.0 229.6 1002.0 229.7C996.0 229.8 986.2 229.5 982.0 228.7C977.8 227.8 972.2 225.3 973.7 224.0Z M863.7 233.0C864.7 230.2 873.9 227.1 878.7 226.3C883.4 225.6 891.8 227.0 895.3 228.0C898.8 229.0 902.0 230.5 902.0 233.0C902.0 235.5 898.3 241.9 895.3 244.7C892.3 247.4 885.5 251.3 882.0 251.3C878.5 251.3 874.8 247.4 872.0 244.7C869.2 241.9 862.7 235.8 863.7 233.0Z M425.3 268.3C426.5 266.8 429.5 266.8 432.0 266.7C434.5 266.5 439.0 267.0 442.0 267.5C445.0 268.0 450.0 268.9 452.0 270.0C454.0 271.1 455.6 273.5 455.3 275.0C455.1 276.5 452.3 278.8 450.3 280.0C448.3 281.2 444.2 282.1 442.0 283.3C439.8 284.6 437.3 288.3 435.3 288.3C433.3 288.3 430.3 285.1 428.7 283.3C427.0 281.6 425.0 278.9 424.5 276.7C424.0 274.4 424.2 269.8 425.3 268.3Z M447.0 283.3C448.0 282.1 452.6 280.8 455.3 280.0C458.1 279.2 461.8 278.8 465.3 278.3C468.8 277.8 475.2 277.4 478.7 276.7C482.2 275.9 486.4 273.3 488.7 273.3C490.9 273.3 493.2 275.2 493.7 276.7C494.2 278.2 491.5 281.6 492.0 283.3C492.5 285.1 495.2 286.8 497.0 288.3C498.8 289.8 503.2 291.8 503.7 293.3C504.2 294.8 502.1 297.3 500.3 298.3C498.6 299.3 494.8 299.5 492.0 300.0C489.2 300.5 484.5 300.9 482.0 301.7C479.5 302.4 477.8 304.8 475.3 305.0C472.8 305.2 467.8 304.3 465.3 303.3C462.8 302.3 460.7 299.8 458.7 298.3C456.7 296.8 453.5 294.8 452.0 293.3C450.5 291.8 449.4 289.8 448.7 288.3C447.9 286.8 446.0 284.6 447.0 283.3Z M433.7 255.0C434.4 254.2 439.5 253.1 442.0 253.3C444.5 253.6 449.8 255.8 450.3 256.7C450.8 257.5 447.3 258.9 445.3 259.2C443.3 259.4 438.8 259.0 437.0 258.3C435.2 257.7 432.9 255.8 433.7 255.0Z M455.3 256.7C456.1 255.7 460.9 254.8 463.7 255.0C466.4 255.2 470.9 257.3 473.7 258.3C476.4 259.3 481.2 260.7 482.0 261.7C482.8 262.7 480.7 264.8 478.7 265.0C476.7 265.2 471.7 263.8 468.7 263.3C465.7 262.8 460.7 262.7 458.7 261.7C456.7 260.7 454.6 257.7 455.3 256.7Z M493.7 260.0C494.2 258.9 498.1 256.9 500.3 256.7C502.6 256.4 506.7 257.3 508.7 258.3C510.7 259.3 514.2 262.3 513.7 263.3C513.2 264.3 507.8 264.9 505.3 265.0C502.8 265.1 498.8 264.9 497.0 264.2C495.2 263.4 493.2 261.1 493.7 260.0Z M518.7 253.3C519.7 252.3 525.7 251.4 528.7 251.7C531.7 251.9 535.7 254.0 538.7 255.0C541.7 256.0 548.2 257.3 548.7 258.3C549.2 259.3 544.5 261.4 542.0 261.7C539.5 261.9 535.0 260.5 532.0 260.0C529.0 259.5 524.0 259.3 522.0 258.3C520.0 257.3 517.7 254.3 518.7 253.3Z M552.0 263.3C552.8 262.3 555.7 260.5 558.7 260.0C561.7 259.5 570.2 259.2 572.0 260.0C573.8 260.8 572.1 264.0 570.3 265.0C568.6 266.0 562.8 266.4 560.3 266.7C557.8 266.9 554.9 267.2 553.7 266.7C552.4 266.2 551.2 264.3 552.0 263.3Z M503.7 275.0C504.5 273.8 508.3 271.7 510.3 271.7C512.3 271.7 516.2 273.5 517.0 275.0C517.8 276.5 516.6 280.4 515.3 281.7C514.1 282.9 510.3 283.6 508.7 283.3C507.0 283.1 505.2 281.2 504.5 280.0C503.8 278.8 502.8 276.2 503.7 275.0Z M520.3 273.3C521.3 271.8 526.4 270.0 528.7 270.0C530.9 270.0 534.8 271.8 535.3 273.3C535.8 274.8 533.2 278.5 532.0 280.0C530.8 281.5 528.5 283.3 527.0 283.3C525.5 283.3 523.0 281.5 522.0 280.0C521.0 278.5 519.3 274.8 520.3 273.3Z M513.7 288.3C514.4 286.8 518.3 284.8 520.3 285.0C522.3 285.2 525.2 288.2 527.0 290.0C528.8 291.8 530.5 294.7 532.0 296.7C533.5 298.7 537.0 301.6 537.0 303.3C537.0 305.1 533.8 307.8 532.0 308.3C530.2 308.8 527.3 307.7 525.3 306.7C523.3 305.7 520.2 303.4 518.7 301.7C517.2 299.9 516.1 297.0 515.3 295.0C514.6 293.0 512.9 289.8 513.7 288.3Z M462.0 244.0C463.8 242.8 473.1 240.3 475.3 240.7C477.6 241.0 478.8 245.1 477.0 246.3C475.2 247.5 465.9 249.0 463.7 248.7C461.4 248.3 460.2 245.2 462.0 244.0Z M490.3 235.3C491.8 233.7 502.5 232.3 505.3 233.0C508.2 233.7 510.8 238.1 509.3 239.7C507.8 241.3 498.2 244.3 495.3 243.7C492.5 243.0 488.8 236.9 490.3 235.3Z M508.7 247.0C510.3 245.7 522.2 244.1 525.3 244.7C528.4 245.2 531.0 249.4 529.3 250.7C527.7 252.0 517.4 253.9 514.3 253.3C511.2 252.8 507.0 248.3 508.7 247.0Z M528.7 235.3C530.2 234.2 538.3 232.5 540.3 233.0C542.3 233.5 543.5 237.5 542.0 238.7C540.5 239.8 532.3 241.2 530.3 240.7C528.3 240.2 527.2 236.5 528.7 235.3Z M542.0 258.0C543.8 256.6 551.1 254.4 555.3 254.7C559.6 254.9 568.3 257.9 570.3 259.7C572.3 261.4 570.9 265.3 568.7 266.3C566.4 267.3 559.1 266.7 555.3 266.3C551.6 266.0 545.7 265.2 543.7 264.0C541.7 262.8 540.2 259.4 542.0 258.0Z M595.3 243.0C597.3 239.8 609.8 232.8 615.3 228.7C620.8 224.5 626.0 217.6 632.0 215.3C638.0 213.0 648.3 214.6 655.3 213.3C662.3 212.0 671.2 208.1 678.7 206.7C686.2 205.3 696.8 204.6 705.3 204.0C713.8 203.4 727.3 202.7 735.3 203.0C743.3 203.3 754.6 204.8 758.7 206.3C762.8 207.8 758.2 211.4 762.7 213.0C767.2 214.6 785.9 215.1 788.7 216.7C791.5 218.2 783.8 221.3 781.3 223.3C778.8 225.3 772.9 227.8 772.0 230.0C771.1 232.2 776.7 235.8 775.3 238.0C773.9 240.2 763.7 242.6 762.7 244.7C761.7 246.8 769.2 249.5 768.7 252.0C768.2 254.5 760.3 258.4 759.3 261.3C758.3 264.2 763.0 267.8 762.0 271.3C761.0 274.8 753.7 281.7 752.7 284.7C751.7 287.7 756.4 289.2 755.3 291.3C754.2 293.4 748.3 296.2 745.3 298.7C742.3 301.2 738.8 305.5 735.3 308.0C731.8 310.5 726.0 313.2 722.0 315.3C718.0 317.4 712.2 319.5 708.7 322.0C705.2 324.5 701.2 329.0 698.7 332.0C696.2 335.0 693.8 339.7 692.0 342.0C690.2 344.3 689.0 347.4 687.0 347.3C685.0 347.2 681.3 344.2 678.7 341.3C676.0 338.4 671.8 332.0 669.3 328.0C666.8 324.0 663.6 318.7 662.0 314.7C660.4 310.7 660.2 304.8 658.7 301.3C657.2 297.8 652.5 294.3 652.0 291.3C651.5 288.3 655.6 284.3 655.3 281.3C655.1 278.3 652.3 274.2 650.3 271.3C648.3 268.4 645.2 264.2 642.0 262.0C638.8 259.8 632.7 258.0 628.7 256.7C624.7 255.4 619.3 254.3 615.3 253.3C611.3 252.3 605.0 251.6 602.0 250.0C599.0 248.4 593.3 246.2 595.3 243.0Z M533.7 216.3C535.2 214.6 543.4 212.7 548.7 211.3C553.9 210.0 561.7 208.2 568.7 207.3C575.7 206.4 588.3 205.5 595.3 205.3C602.3 205.2 610.1 205.4 615.3 206.3C620.6 207.2 630.3 209.1 630.3 211.3C630.3 213.6 620.1 218.6 615.3 221.3C610.6 224.1 603.7 227.7 598.7 229.7C593.7 231.7 585.2 232.2 582.0 234.7C578.8 237.2 579.8 243.7 577.0 246.3C574.2 248.9 567.4 251.4 563.7 252.0C559.9 252.6 554.5 251.5 552.0 250.0C549.5 248.5 548.2 244.8 547.0 242.0C545.8 239.2 544.9 234.2 543.7 231.3C542.4 228.5 540.2 225.2 538.7 223.0C537.2 220.8 532.2 218.1 533.7 216.3Z"/>
</defs>
<rect x="248" y="118" width="1281" height="743" fill="#0251af"/>
<g clip-path="url(#mapclip)">
<g filter="url(#b3)" fill="none" stroke-linejoin="round">
<use href="#landp" stroke="#0655b5" stroke-width="50"/>
<use href="#landp" stroke="#0a5bbc" stroke-width="26"/>
<use href="#landp" stroke="#1767c9" stroke-width="10"/>
</g>
<path d="M518.7 225.3C519.7 223.3 525.6 219.9 528.7 219.7C531.8 219.5 536.8 221.8 539.3 224.0C541.8 226.2 545.2 232.0 545.3 234.7C545.5 237.4 542.8 241.2 540.3 242.0C537.8 242.8 531.4 241.3 528.7 240.0C525.9 238.7 523.5 235.5 522.0 233.3C520.5 231.1 517.7 227.4 518.7 225.3Z M751.3 318.0C752.6 316.5 758.4 315.2 762.0 314.7C765.6 314.2 772.1 314.2 775.3 314.7C778.6 315.2 782.7 316.5 783.7 318.0C784.7 319.5 783.8 322.9 782.0 324.7C780.2 326.4 775.2 329.1 772.0 329.7C768.8 330.3 763.1 329.4 760.3 328.7C757.6 327.9 755.0 326.3 753.7 324.7C752.3 323.1 750.1 319.5 751.3 318.0Z M293.7 303.3C295.2 301.6 300.4 297.0 303.7 295.0C306.9 293.0 312.1 291.1 315.3 290.0C318.6 288.9 322.3 287.2 325.3 287.5C328.3 287.8 331.8 290.8 335.3 291.7C338.8 292.5 344.7 292.5 348.7 293.0C352.7 293.5 358.2 294.3 362.0 295.0C365.8 295.7 370.2 296.8 373.7 297.5C377.2 298.2 382.6 299.8 385.3 300.0C388.1 300.2 389.5 299.7 392.0 299.2C394.5 298.7 398.8 297.4 402.0 296.7C405.2 295.9 411.2 294.9 413.7 294.2C416.2 293.4 417.3 291.2 418.7 291.7C420.0 292.2 421.6 297.1 422.8 297.5C424.1 297.9 425.6 294.8 427.0 294.7C428.4 294.5 429.8 295.9 432.0 296.7C434.2 297.5 439.0 299.0 442.0 300.0C445.0 301.0 449.0 302.3 452.0 303.3C455.0 304.3 459.0 305.9 462.0 306.7C465.0 307.4 469.0 308.3 472.0 308.3C475.0 308.3 479.0 305.9 482.0 306.7C485.0 307.4 489.2 311.8 492.0 313.3C494.8 314.8 497.3 316.4 500.3 316.7C503.3 317.0 508.8 315.8 512.0 315.3C515.2 314.8 519.0 313.9 522.0 313.3C525.0 312.8 529.0 312.4 532.0 311.7C535.0 310.9 539.5 309.3 542.0 308.3C544.5 307.3 547.2 306.5 548.7 305.0C550.2 303.5 550.5 299.7 552.0 298.3C553.5 297.0 556.7 295.6 558.7 295.8C560.7 296.1 564.3 298.4 565.3 300.0C566.3 301.6 565.8 304.9 565.3 306.7C564.8 308.4 562.6 310.5 562.0 311.7C561.4 312.8 562.7 312.9 561.2 314.2C559.7 315.4 554.6 317.9 552.0 320.0C549.4 322.1 546.7 326.3 543.7 328.3C540.7 330.3 534.8 331.6 532.0 333.3C529.2 335.1 526.6 337.5 525.3 340.0C524.1 342.5 522.7 347.2 523.7 350.0C524.7 352.8 528.8 356.2 532.0 358.3C535.2 360.5 541.8 362.9 545.3 364.2C548.8 365.4 552.6 365.4 555.3 366.7C558.1 367.9 562.3 370.2 563.7 372.5C565.0 374.8 563.6 379.5 564.5 381.7C565.4 383.8 568.1 386.4 569.5 386.7C570.9 386.9 573.3 385.1 573.7 383.3C574.0 381.6 571.5 377.2 572.0 375.0C572.5 372.8 575.8 370.3 577.0 368.3C578.2 366.3 580.1 364.2 580.3 361.7C580.6 359.2 579.4 354.4 578.7 351.7C577.9 348.9 575.6 345.6 575.3 343.3C575.1 341.1 575.5 338.0 577.0 336.7C578.5 335.3 582.6 334.2 585.3 334.2C588.1 334.2 592.8 335.3 595.3 336.7C597.8 338.0 600.5 341.3 602.0 343.3C603.5 345.3 603.8 348.0 605.3 350.0C606.8 352.0 610.5 356.7 612.0 356.7C613.5 356.7 614.1 351.6 615.3 350.0C616.6 348.4 618.8 344.8 620.3 345.8C621.8 346.8 623.6 353.8 625.3 356.7C627.1 359.5 629.5 362.5 632.0 365.0C634.5 367.5 639.5 371.1 642.0 373.3C644.5 375.6 647.5 378.2 648.7 380.0C649.9 381.8 650.5 383.8 650.0 385.0C649.5 386.2 647.3 387.0 645.3 388.0C643.4 389.0 639.5 391.1 637.0 391.7C634.5 392.2 631.2 391.4 628.7 391.7C626.2 392.0 623.1 392.9 620.3 393.7C617.6 394.4 612.8 395.6 610.3 396.7C607.8 397.7 603.2 400.5 603.7 400.8C604.2 401.2 610.9 399.3 613.7 399.2C616.4 399.0 620.9 399.0 622.0 400.0C623.1 401.0 620.7 404.4 621.2 405.8C621.7 407.3 623.2 409.5 625.3 409.7C627.5 409.8 633.3 406.8 635.3 406.7C637.3 406.5 639.2 407.5 638.7 408.7C638.2 409.8 634.5 413.0 632.0 414.2C629.5 415.4 624.4 416.0 622.0 416.7C619.6 417.3 617.7 418.9 616.2 418.7C614.7 418.4 613.6 415.1 612.0 415.0C610.4 414.9 606.8 417.1 605.3 418.3C603.8 419.6 603.2 421.7 602.0 423.3C600.8 425.0 597.5 428.7 597.0 429.2C596.5 429.7 599.7 426.5 598.7 426.7C597.7 426.8 592.6 428.5 590.3 430.0C588.1 431.5 584.9 434.4 583.7 436.7C582.4 438.9 583.0 442.5 582.0 445.0C581.0 447.5 578.8 451.1 577.0 453.3C575.2 455.6 571.8 458.2 570.3 460.0C568.8 461.8 567.6 463.5 567.0 465.0C566.4 466.5 565.9 468.2 566.2 470.0C566.4 471.8 568.2 474.7 568.7 476.7C569.2 478.7 569.8 482.0 569.5 483.3C569.2 484.7 567.9 486.1 567.0 485.8C566.1 485.6 564.4 483.3 563.7 481.7C562.9 480.0 562.8 476.8 562.0 475.0C561.2 473.2 560.2 471.0 558.7 470.0C557.2 469.0 554.2 468.6 552.0 468.3C549.8 468.1 546.2 468.1 543.7 468.3C541.2 468.6 538.1 469.8 535.3 470.0C532.6 470.2 527.8 469.5 525.3 470.0C522.8 470.5 520.4 472.1 518.7 473.3C516.9 474.6 514.2 476.3 513.7 478.3C513.2 480.3 515.3 484.4 515.3 486.7C515.3 488.9 514.2 491.6 513.7 493.3C513.2 495.1 511.5 496.8 512.0 498.3C512.5 499.8 515.5 502.1 517.0 503.3C518.5 504.6 520.2 506.2 522.0 506.7C523.8 507.2 526.9 507.4 528.7 506.7C530.4 505.9 532.2 502.9 533.7 501.7C535.2 500.4 536.7 498.8 538.7 498.3C540.7 497.8 545.6 497.6 547.0 498.3C548.4 499.1 548.1 501.6 547.8 503.3C547.6 505.1 546.0 508.0 545.3 510.0C544.7 512.0 542.9 515.7 543.7 516.7C544.4 517.7 548.3 516.4 550.3 516.7C552.3 516.9 555.6 517.3 557.0 518.3C558.4 519.3 559.2 521.6 559.5 523.3C559.8 525.1 558.3 528.0 558.7 530.0C559.0 532.0 560.5 535.2 562.0 536.7C563.5 538.2 566.7 539.7 568.7 540.0C570.7 540.3 573.8 538.2 575.3 538.7C576.8 539.2 578.4 542.1 578.7 543.3C578.9 544.5 578.0 546.6 577.0 546.7C576.0 546.7 573.5 543.9 572.0 543.7C570.5 543.4 568.5 545.3 567.0 545.0C565.5 544.7 563.5 542.7 562.0 541.7C560.5 540.7 558.5 539.3 557.0 538.3C555.5 537.3 553.2 536.2 552.0 535.0C550.8 533.8 549.9 531.2 548.7 530.0C547.4 528.8 545.7 527.7 543.7 526.7C541.7 525.7 537.6 524.3 535.3 523.3C533.1 522.3 530.7 521.0 528.7 520.0C526.7 519.0 524.0 517.2 522.0 516.7C520.0 516.2 517.8 517.2 515.3 516.7C512.8 516.2 508.1 514.6 505.3 513.3C502.6 512.1 499.2 509.8 497.0 508.3C494.8 506.8 491.6 504.8 490.3 503.3C489.1 501.8 489.4 500.3 488.7 498.3C487.9 496.3 486.6 492.5 485.3 490.0C484.1 487.5 482.3 484.2 480.3 481.7C478.3 479.2 474.1 475.8 472.0 473.3C469.9 470.8 467.3 466.4 466.2 465.0C465.0 463.6 464.6 462.9 464.5 463.7C464.4 464.4 464.7 467.8 465.3 470.0C466.0 472.2 467.4 475.8 468.7 478.3C469.9 480.8 472.7 484.4 473.7 486.7C474.7 488.9 475.6 492.8 475.3 493.3C475.1 493.8 473.5 491.5 472.0 490.0C470.5 488.5 467.1 485.6 465.3 483.3C463.6 481.1 461.3 477.8 460.3 475.0C459.3 472.2 459.2 467.0 458.7 465.0C458.2 463.0 458.5 463.2 457.0 461.7C455.5 460.2 451.2 457.0 448.7 455.0C446.2 453.0 442.3 450.6 440.3 448.3C438.3 446.1 436.7 442.8 435.3 440.0C434.0 437.2 432.2 433.0 431.2 430.0C430.2 427.0 428.9 422.0 428.7 420.0C428.4 418.0 429.8 418.7 429.5 416.7C429.2 414.7 428.1 409.4 427.0 406.7C425.9 403.9 423.8 400.8 422.0 398.3C420.2 395.8 417.1 392.5 415.3 390.0C413.6 387.5 411.8 384.2 410.3 381.7C408.8 379.2 407.1 376.1 405.3 373.3C403.6 370.6 400.9 366.3 398.7 363.3C396.4 360.3 392.8 355.5 390.3 353.3C387.8 351.2 384.8 350.3 382.0 349.2C379.2 348.0 375.0 346.6 372.0 345.8C369.0 345.1 364.8 344.7 362.0 344.2C359.2 343.7 356.2 342.6 353.7 342.5C351.2 342.4 347.6 342.5 345.3 343.3C343.1 344.2 340.2 346.8 338.7 348.3C337.2 349.8 336.6 351.8 335.3 353.3C334.1 354.8 332.6 356.6 330.3 358.3C328.1 360.1 323.6 363.1 320.3 365.0C317.1 366.9 311.9 369.5 308.7 370.8C305.4 372.1 298.9 374.2 298.7 373.7C298.4 373.2 304.5 369.6 307.0 367.5C309.5 365.4 313.2 362.1 315.3 360.0C317.5 357.9 321.7 354.5 321.2 353.3C320.7 352.2 314.4 353.0 312.0 352.5C309.6 352.0 307.6 350.6 305.3 350.0C303.1 349.4 298.8 349.7 297.0 348.3C295.2 347.0 293.2 343.1 293.7 340.8C294.2 338.6 298.1 335.2 300.3 333.3C302.6 331.5 307.7 329.8 308.7 328.3C309.7 326.8 309.0 323.8 307.0 323.3C305.0 322.8 298.1 325.4 295.3 325.0C292.6 324.6 289.2 322.3 288.7 320.8C288.2 319.3 290.2 316.1 292.0 315.0C293.8 313.9 300.1 314.6 300.3 313.3C300.6 312.1 294.7 308.2 293.7 306.7C292.7 305.2 292.2 305.1 293.7 303.3Z M557.0 495.0C557.5 494.5 561.4 493.3 563.7 493.3C565.9 493.3 569.5 494.2 572.0 495.0C574.5 495.8 578.1 497.3 580.3 498.3C582.6 499.3 585.5 500.9 587.0 501.7C588.5 502.4 590.6 503.0 590.3 503.3C590.1 503.7 587.3 504.4 585.3 504.2C583.3 503.9 579.5 502.5 577.0 501.7C574.5 500.8 571.2 499.1 568.7 498.3C566.2 497.6 562.1 497.2 560.3 496.7C558.6 496.2 556.5 495.5 557.0 495.0Z M592.0 504.2C592.9 503.5 596.8 503.1 598.7 503.3C600.5 503.6 603.2 505.2 604.5 505.8C605.8 506.5 607.4 507.0 607.0 507.5C606.6 508.0 603.8 508.8 602.0 509.2C600.2 509.5 596.7 510.2 595.3 510.0C594.0 509.8 593.3 508.4 592.8 507.5C592.3 506.6 591.1 504.8 592.0 504.2Z M612.0 508.0C612.8 507.7 616.2 507.7 617.0 508.0C617.8 508.3 617.8 509.7 617.0 510.0C616.2 510.3 612.8 510.3 612.0 510.0C611.2 509.7 611.2 508.3 612.0 508.0Z M576.2 508.3C576.8 508.2 580.4 508.5 581.2 508.8C581.9 509.2 581.8 510.3 581.2 510.5C580.5 510.7 577.4 510.3 576.7 510.0C575.9 509.7 575.5 508.5 576.2 508.3Z M538.7 275.0C540.7 273.5 548.0 272.0 552.0 271.7C556.0 271.3 561.6 272.0 565.3 272.5C569.1 273.0 573.5 273.4 577.0 275.0C580.5 276.6 585.2 281.1 588.7 283.3C592.2 285.6 597.1 288.2 600.3 290.0C603.6 291.8 609.1 293.5 610.3 295.0C611.6 296.5 607.9 298.8 608.7 300.0C609.4 301.2 612.8 301.8 615.3 303.3C617.8 304.8 623.0 308.5 625.3 310.0C627.7 311.5 630.9 312.1 631.2 313.3C631.4 314.6 628.6 317.3 627.0 318.3C625.4 319.3 621.1 318.8 620.3 320.0C619.6 321.2 622.2 324.9 622.0 326.7C621.8 328.4 619.8 330.0 618.7 331.7C617.5 333.3 616.0 337.2 614.5 337.5C613.0 337.8 610.0 335.0 608.7 333.3C607.3 331.7 605.3 328.7 605.3 326.7C605.3 324.7 608.7 322.0 608.7 320.0C608.7 318.0 606.6 315.1 605.3 313.3C604.1 311.6 602.1 309.6 600.3 308.3C598.6 307.1 595.9 306.2 593.7 305.0C591.4 303.8 587.8 301.0 585.3 300.0C582.8 299.0 579.5 299.1 577.0 298.3C574.5 297.6 571.2 295.8 568.7 295.0C566.2 294.2 562.8 294.1 560.3 293.3C557.8 292.6 554.5 291.0 552.0 290.0C549.5 289.0 545.7 287.9 543.7 286.7C541.7 285.4 539.4 283.4 538.7 281.7C537.9 279.9 536.7 276.5 538.7 275.0Z M577.0 323.3C578.2 321.6 585.7 318.2 588.7 316.7C591.7 315.2 594.5 313.3 597.0 313.3C599.5 313.3 603.6 315.2 605.3 316.7C607.1 318.2 608.7 321.6 608.7 323.3C608.7 325.1 607.1 328.1 605.3 328.3C603.6 328.6 599.5 325.2 597.0 325.0C594.5 324.8 591.2 326.2 588.7 326.7C586.2 327.2 582.1 328.8 580.3 328.3C578.6 327.8 575.8 325.1 577.0 323.3Z M578.7 303.3C579.7 302.3 583.8 301.2 585.3 301.7C586.8 302.2 588.9 305.4 588.7 306.7C588.4 307.9 585.2 309.8 583.7 310.0C582.2 310.2 579.4 309.3 578.7 308.3C577.9 307.3 577.7 304.3 578.7 303.3Z M638.7 396.7C639.4 394.9 643.6 388.8 645.3 388.3C647.1 387.8 648.8 391.8 650.3 393.3C651.8 394.8 654.1 396.8 655.3 398.3C656.6 399.8 659.2 402.3 658.7 403.3C658.2 404.3 654.0 405.0 652.0 405.0C650.0 405.0 647.1 404.1 645.3 403.3C643.6 402.6 641.3 401.0 640.3 400.0C639.3 399.0 637.9 398.4 638.7 396.7Z M577.0 546.7C577.8 545.2 577.4 544.6 578.7 543.3C579.9 542.1 583.1 539.8 585.3 538.3C587.6 536.8 591.7 534.7 593.7 533.3C595.7 532.0 597.7 528.9 598.7 529.2C599.7 529.4 599.3 534.6 600.3 535.0C601.3 535.4 603.1 531.7 605.3 531.7C607.6 531.7 612.3 534.5 615.3 535.0C618.3 535.5 622.8 534.0 625.3 535.0C627.8 536.0 629.5 540.2 632.0 541.7C634.5 543.2 639.2 543.8 642.0 545.0C644.8 546.2 648.1 548.8 650.3 550.0C652.6 551.2 655.0 551.8 657.0 553.3C659.0 554.8 662.2 558.0 663.7 560.0C665.2 562.0 665.5 565.2 667.0 566.7C668.5 568.2 671.4 569.0 673.7 570.0C675.9 571.0 679.5 572.3 682.0 573.3C684.5 574.3 687.8 575.9 690.3 576.7C692.8 577.4 696.2 577.6 698.7 578.3C701.2 579.1 704.8 580.7 707.0 581.7C709.2 582.7 712.2 583.5 713.7 585.0C715.2 586.5 717.0 589.7 717.0 591.7C717.0 593.7 714.9 596.3 713.7 598.3C712.4 600.3 710.2 603.0 708.7 605.0C707.2 607.0 704.7 609.4 703.7 611.7C702.7 613.9 702.5 617.5 702.0 620.0C701.5 622.5 701.1 625.8 700.3 628.3C699.6 630.8 698.5 634.4 697.0 636.7C695.5 638.9 692.6 642.1 690.3 643.3C688.1 644.6 684.2 644.0 682.0 645.0C679.8 646.0 677.1 648.0 675.3 650.0C673.6 652.0 671.3 656.1 670.3 658.3C669.3 660.6 669.7 663.2 668.7 665.0C667.7 666.8 666.2 668.0 663.7 670.0C661.2 672.0 654.8 675.3 652.0 678.0C649.2 680.7 647.8 685.0 645.3 688.0C642.8 691.0 638.6 696.2 635.3 698.0C632.1 699.8 625.9 698.2 623.7 699.7C621.4 701.2 621.8 705.5 620.3 708.0C618.8 710.5 614.4 713.6 613.7 716.3C612.9 719.1 615.8 723.3 615.3 726.3C614.8 729.3 610.8 733.3 610.3 736.3C609.8 739.3 612.2 743.3 612.0 746.3C611.8 749.3 608.2 753.6 608.7 756.3C609.2 759.1 615.8 762.9 615.3 764.7C614.8 766.4 608.3 767.8 605.3 768.0C602.3 768.2 597.6 767.8 595.3 766.3C593.1 764.8 591.6 761.2 590.3 758.0C589.1 754.8 587.8 748.7 587.0 744.7C586.2 740.7 584.8 735.3 585.3 731.3C585.8 727.3 589.3 722.0 590.3 718.0C591.3 714.0 591.2 708.9 592.0 704.7C592.8 700.5 594.6 693.7 595.3 690.0C596.1 686.3 596.8 683.0 597.0 680.0C597.2 677.0 596.8 673.0 597.0 670.0C597.2 667.0 597.9 663.0 598.7 660.0C599.4 657.0 601.2 653.0 602.0 650.0C602.8 647.0 603.7 643.0 603.7 640.0C603.7 637.0 603.0 632.2 602.0 630.0C601.0 627.8 598.8 626.5 597.0 625.0C595.2 623.5 592.3 621.8 590.3 620.0C588.3 618.2 585.4 615.3 583.7 613.3C581.9 611.3 580.2 609.2 578.7 606.7C577.2 604.2 574.9 599.2 573.7 596.7C572.4 594.2 571.5 592.0 570.3 590.0C569.2 588.0 566.7 585.3 566.2 583.3C565.7 581.3 566.4 579.2 567.0 576.7C567.6 574.2 569.1 569.2 570.3 566.7C571.6 564.2 574.8 562.0 575.3 560.0C575.8 558.0 573.4 555.3 573.7 553.3C573.9 551.3 576.2 548.2 577.0 546.7Z M533.7 568.0C533.9 567.4 535.0 567.1 535.3 567.5C535.6 567.9 535.9 570.3 535.7 570.8C535.5 571.4 534.3 571.8 534.0 571.3C533.7 570.9 533.5 568.6 533.7 568.0Z M808.9 448.1C810.0 447.5 811.7 449.4 813.2 449.4C814.8 449.4 817.4 448.6 819.5 448.1C821.6 447.7 824.8 446.7 827.0 446.2C829.2 445.8 832.2 445.3 834.5 445.0C836.8 444.7 839.8 444.6 842.0 444.4C844.2 444.2 847.2 443.9 849.5 443.8C851.8 443.6 855.3 443.3 857.0 443.1C858.7 442.9 859.6 442.4 860.8 442.5C861.9 442.6 864.1 442.8 864.5 443.8C864.9 444.7 863.6 447.4 863.2 448.8C862.9 450.1 861.8 451.6 862.0 452.5C862.2 453.4 863.4 454.4 864.5 455.0C865.6 455.6 867.8 455.5 869.5 456.2C871.2 457.0 873.9 458.9 875.8 460.0C877.6 461.1 880.1 463.0 882.0 463.8C883.9 464.5 886.8 465.4 888.2 465.0C889.8 464.6 890.7 462.1 892.0 461.2C893.3 460.4 895.3 459.5 897.0 459.4C898.7 459.3 901.4 460.2 903.2 460.6C905.1 461.1 907.4 461.8 909.5 462.5C911.6 463.2 914.9 464.5 917.0 465.0C919.1 465.5 921.4 465.6 923.2 465.6C925.1 465.6 927.8 465.1 929.5 465.0C931.2 464.9 933.4 464.7 934.5 465.0C935.6 465.3 936.9 466.1 937.0 466.9C937.1 467.6 936.0 469.5 935.1 470.0C934.3 470.5 931.7 469.1 931.4 470.0C931.0 470.9 932.2 474.2 932.9 476.2C933.6 478.3 935.0 481.3 936.0 483.8C937.0 486.2 938.4 489.9 939.8 492.5C941.1 495.1 943.2 498.6 944.8 501.2C946.2 503.9 948.2 507.6 949.8 510.0C951.2 512.4 953.3 515.4 954.8 517.5C956.2 519.6 957.8 521.9 959.1 523.8C960.4 525.6 962.1 528.4 963.5 530.0C964.9 531.6 966.6 533.8 968.7 534.2C970.7 534.5 974.5 533.0 977.0 532.5C979.5 532.0 983.3 531.2 985.3 530.8C987.3 530.5 989.8 529.1 990.3 530.0C990.8 530.9 989.4 534.7 988.7 536.7C987.9 538.7 986.6 541.3 985.3 543.3C984.1 545.3 982.1 548.0 980.3 550.0C978.6 552.0 975.7 554.9 973.7 556.7C971.7 558.4 968.8 560.2 967.0 561.7C965.2 563.2 963.2 564.9 962.0 566.7C960.8 568.4 959.5 571.3 958.7 573.3C957.8 575.3 956.7 578.0 956.2 580.0C955.7 582.0 955.7 584.2 955.3 586.7C955.0 589.2 953.5 594.2 953.7 596.7C953.8 599.2 955.7 601.1 956.2 603.3C956.7 605.6 957.1 609.4 957.0 611.7C956.9 613.9 956.6 616.7 955.3 618.3C954.1 620.0 950.7 621.2 948.7 622.5C946.7 623.8 943.5 625.3 942.0 626.7C940.5 628.0 938.7 630.4 938.7 631.7C938.7 632.9 941.2 633.5 942.0 635.0C942.8 636.5 944.2 639.7 943.7 641.7C943.2 643.7 940.4 646.8 938.7 648.3C936.9 649.8 933.1 650.4 932.0 651.7C930.9 652.9 931.7 654.9 931.2 656.7C930.7 658.4 929.8 661.3 928.7 663.3C927.5 665.3 925.4 668.0 923.7 670.0C921.9 672.0 919.0 675.0 917.0 676.7C915.0 678.3 912.6 680.1 910.3 680.8C908.1 681.6 904.5 681.3 902.0 681.7C899.5 682.0 895.7 683.2 893.7 683.3C891.7 683.5 889.8 683.5 888.7 682.5C887.5 681.5 886.9 678.5 886.2 676.7C885.4 674.8 884.5 672.0 883.7 670.0C882.8 668.0 881.2 665.3 880.3 663.3C879.5 661.3 878.5 658.9 877.8 656.7C877.2 654.4 877.0 650.8 876.2 648.3C875.3 645.8 873.2 642.5 872.0 640.0C870.8 637.5 868.7 634.2 867.8 631.7C867.0 629.2 866.0 625.8 866.2 623.3C866.3 620.8 867.8 617.5 868.7 615.0C869.5 612.5 871.4 609.2 872.0 606.7C872.6 604.2 872.8 600.8 872.8 598.3C872.8 595.8 872.4 591.8 872.0 590.0C871.6 588.2 870.8 587.9 870.3 586.7C869.8 585.4 869.3 582.9 868.7 581.7C868.0 580.4 867.2 579.3 866.2 578.3C865.2 577.3 863.1 576.1 862.0 575.0C860.9 573.9 859.2 572.3 859.0 570.8C858.8 569.3 860.3 566.9 860.3 565.0C860.4 563.1 860.2 560.1 859.5 558.3C858.8 556.6 857.0 554.1 855.3 553.3C853.7 552.6 850.4 554.0 848.7 553.3C846.9 552.7 845.7 550.0 843.7 549.2C841.7 548.3 838.1 547.6 835.3 547.5C832.6 547.4 828.3 547.7 825.3 548.3C822.3 549.0 818.1 551.2 815.3 551.7C812.6 552.2 809.2 552.0 807.0 551.7C804.8 551.3 802.6 550.4 800.3 549.2C798.1 547.9 794.5 545.1 792.0 543.3C789.5 541.6 785.7 539.5 783.7 537.5C781.6 535.5 779.5 532.4 778.3 530.0C777.1 527.6 776.1 524.2 775.7 521.7C775.2 519.2 775.1 516.1 775.3 513.3C775.5 510.6 776.4 506.1 777.0 503.3C777.6 500.6 778.8 497.5 779.5 495.0C780.2 492.5 781.4 488.7 782.0 486.7C782.6 484.7 782.7 483.2 783.7 481.7C784.7 480.2 787.0 478.2 788.7 476.7C790.3 475.1 793.1 472.8 794.5 471.2C795.9 469.7 797.1 467.9 798.2 466.2C799.4 464.6 800.9 461.9 802.0 460.0C803.1 458.1 804.7 455.5 805.8 453.8C806.8 452.0 807.8 448.8 808.9 448.1Z M983.7 606.7C984.7 606.7 986.4 609.8 987.0 611.7C987.6 613.5 988.2 616.7 987.8 619.2C987.5 621.7 985.4 625.5 984.5 628.3C983.6 631.2 982.9 635.6 982.0 638.3C981.1 641.1 979.9 644.7 978.7 646.7C977.4 648.7 975.3 651.2 973.7 651.7C972.0 652.2 969.2 651.2 967.8 650.0C966.5 648.8 964.9 645.6 964.5 643.3C964.1 641.1 965.0 637.5 965.3 635.0C965.7 632.5 966.5 628.9 967.0 626.7C967.5 624.4 967.4 621.5 968.7 620.0C969.9 618.5 973.6 617.9 975.3 616.7C977.1 615.4 979.1 613.2 980.3 611.7C981.6 610.2 982.7 606.7 983.7 606.7Z M823.7 406.7C822.2 405.6 816.7 401.5 815.3 400.0C814.0 398.5 813.5 397.4 814.5 396.7C815.5 395.9 819.4 395.8 822.0 395.0C824.6 394.2 829.5 393.4 832.0 391.7C834.5 389.9 836.4 385.2 838.7 383.3C840.9 381.5 844.8 380.2 847.0 379.2C849.2 378.2 852.3 378.5 853.7 376.7C855.0 374.8 855.8 369.2 856.2 366.7C856.5 364.2 855.5 361.6 856.2 360.0C856.8 358.4 861.5 357.1 860.3 355.8C859.2 354.6 850.9 353.3 848.7 351.7C846.4 350.0 845.6 347.2 845.3 345.0C845.1 342.8 845.5 338.7 847.0 336.7C848.5 334.7 853.1 333.2 855.3 331.7C857.6 330.2 860.2 328.7 862.0 326.7C863.8 324.7 865.5 320.8 867.0 318.3C868.5 315.8 870.8 312.0 872.0 310.0C873.2 308.0 873.8 306.8 875.3 305.0C876.8 303.2 879.8 300.1 882.0 298.3C884.2 296.6 887.8 294.5 890.3 293.3C892.8 292.2 895.9 291.5 898.7 290.8C901.4 290.2 905.7 289.5 908.7 289.2C911.7 288.8 916.2 288.0 918.7 288.3C921.2 288.7 923.3 290.5 925.3 291.7C927.3 292.8 929.5 294.8 932.0 295.8C934.5 296.8 939.2 297.5 942.0 298.3C944.8 299.2 948.1 300.7 950.3 301.7C952.6 302.7 955.6 303.9 957.0 305.0C958.4 306.1 958.2 309.2 959.5 309.2C960.8 309.2 963.7 305.9 965.3 305.0C967.0 304.1 969.1 302.8 970.3 303.3C971.6 303.8 971.9 308.1 973.7 308.3C975.4 308.6 979.2 305.8 982.0 305.0C984.8 304.2 989.5 303.8 992.0 303.3C994.5 302.8 996.4 302.2 998.7 301.7C1000.9 301.2 1004.5 300.5 1007.0 300.0C1009.5 299.5 1013.1 298.3 1015.3 298.3C1017.6 298.3 1020.0 300.0 1022.0 300.0C1024.0 300.0 1026.4 298.8 1028.7 298.3C1030.9 297.8 1034.8 297.7 1037.0 296.7C1039.2 295.7 1042.4 293.4 1043.7 291.7C1044.9 289.9 1044.6 286.8 1045.3 285.0C1046.1 283.2 1047.2 281.5 1048.7 280.0C1050.2 278.5 1053.3 275.2 1055.3 275.0C1057.3 274.8 1060.8 276.6 1062.0 278.3C1063.2 280.1 1063.2 283.9 1063.7 286.7C1064.2 289.4 1065.3 293.7 1065.3 296.7C1065.3 299.7 1063.2 298.7 1063.7 306.7C1064.2 314.7 1068.4 333.5 1068.7 350.0C1068.9 366.5 1068.3 398.7 1065.3 416.7C1062.3 434.7 1051.4 461.2 1048.7 470.0C1045.9 478.8 1047.0 473.5 1047.0 475.0C1047.0 476.5 1048.9 478.0 1048.7 480.0C1048.4 482.0 1046.8 487.6 1045.3 488.3C1043.8 489.1 1040.7 485.8 1038.7 485.0C1036.7 484.2 1034.2 483.3 1032.0 483.3C1029.8 483.3 1026.2 485.0 1023.7 485.0C1021.2 485.0 1017.8 483.8 1015.3 483.3C1012.8 482.8 1007.8 481.2 1007.0 481.7C1006.2 482.2 1009.1 485.4 1010.3 486.7C1011.6 487.9 1014.1 488.8 1015.3 490.0C1016.6 491.2 1018.9 493.2 1018.7 495.0C1018.4 496.8 1015.4 499.7 1013.7 501.7C1011.9 503.7 1009.2 506.6 1007.0 508.3C1004.8 510.1 1001.4 511.8 998.7 513.3C995.9 514.8 991.7 516.8 988.7 518.3C985.7 519.8 981.4 522.1 978.7 523.3C975.9 524.6 971.7 525.9 970.3 526.7C969.0 527.5 970.0 529.0 969.5 528.8C969.0 528.5 968.1 526.5 967.2 525.0C966.4 523.5 964.6 520.6 963.5 518.8C962.4 516.9 961.1 514.6 959.8 512.5C958.4 510.4 956.2 507.4 954.8 505.0C953.2 502.6 951.2 498.9 949.8 496.2C948.2 493.6 946.1 489.9 944.8 487.5C943.4 485.1 942.0 482.1 941.0 480.0C940.0 477.9 938.6 475.1 938.2 473.8C937.9 472.4 939.0 472.4 938.9 471.2C938.8 470.1 937.6 467.4 937.6 466.2C937.6 465.1 938.5 464.9 938.9 463.8C939.2 462.6 939.8 460.4 940.1 458.8C940.5 457.1 941.1 454.2 941.4 452.5C941.7 450.8 942.1 448.7 942.0 447.5C941.9 446.3 941.5 444.6 940.8 444.4C940.0 444.2 938.3 446.1 937.0 446.2C935.7 446.4 933.7 446.0 932.0 445.6C930.3 445.2 927.4 444.4 925.8 443.8C924.1 443.1 921.7 442.2 920.8 441.2C919.8 440.3 920.0 438.6 919.5 437.5C919.0 436.4 917.8 434.9 917.6 433.8C917.4 432.6 918.7 430.5 918.2 430.0C917.8 429.5 915.6 430.6 914.5 430.6C913.4 430.6 912.1 430.2 910.8 430.0C909.4 429.8 907.2 429.2 905.8 429.4C904.2 429.6 901.0 430.6 900.8 431.2C900.5 431.9 903.7 433.0 903.9 433.8C904.1 434.5 902.5 435.3 902.0 436.2C901.5 437.2 901.1 438.9 900.8 440.0C900.4 441.1 900.1 443.8 899.5 443.8C898.9 443.8 897.8 441.1 897.0 440.0C896.2 438.9 895.2 437.6 894.5 436.2C893.8 434.9 892.8 432.8 892.0 431.2C891.2 429.8 890.6 427.8 889.5 426.2C888.4 424.8 886.0 422.8 884.5 421.2C883.0 419.8 881.0 417.8 879.5 416.2C878.0 414.8 875.6 412.3 874.5 411.2C873.4 410.2 872.8 409.0 872.0 409.4C871.2 409.8 869.3 412.3 869.5 413.8C869.7 415.2 872.1 417.3 873.2 418.8C874.4 420.2 875.7 421.9 877.0 423.1C878.3 424.3 880.7 425.8 882.0 426.9C883.3 427.9 885.1 429.2 885.8 430.0C886.4 430.8 886.8 431.6 886.4 431.9C886.0 432.2 883.9 431.6 883.2 431.9C882.6 432.2 882.0 432.9 882.0 433.8C882.0 434.6 883.2 436.8 883.2 437.5C883.2 438.2 882.5 438.6 882.0 438.1C881.5 437.7 881.1 435.4 880.1 434.4C879.2 433.3 877.2 432.2 875.8 431.2C874.3 430.3 872.2 429.2 870.8 428.1C869.2 427.0 867.1 425.2 865.8 423.8C864.4 422.3 862.8 419.8 862.0 418.8C861.2 417.7 861.5 417.3 860.8 416.9C860.0 416.4 858.3 415.5 857.0 415.6C855.7 415.7 853.5 417.0 852.0 417.5C850.5 418.0 848.7 418.2 847.0 418.8C845.3 419.3 842.1 420.4 840.8 421.2C839.4 422.1 838.8 423.3 838.2 424.4C837.7 425.4 837.9 427.2 837.0 428.1C836.1 429.1 833.3 429.6 832.0 430.6C830.7 431.7 829.1 433.6 828.2 435.0C827.4 436.4 827.1 438.8 826.4 440.0C825.6 441.2 824.7 442.5 823.2 443.1C821.8 443.8 818.9 443.9 817.0 444.4C815.1 444.8 812.2 446.2 810.8 446.2C809.2 446.2 808.1 444.8 807.0 444.4C805.9 443.9 804.2 443.8 803.2 443.1C802.3 442.5 801.5 441.0 800.8 440.0C800.0 439.0 798.3 437.8 798.2 436.2C798.2 434.8 799.8 431.7 800.1 430.0C800.5 428.3 800.8 426.5 800.8 425.0C800.7 423.5 799.8 420.9 799.5 420.0C799.2 419.1 796.8 419.1 798.7 418.7C800.5 418.3 808.0 417.4 812.0 417.3C816.0 417.2 821.8 418.1 825.3 418.0C828.8 417.9 834.3 417.9 835.3 416.7C836.3 415.5 833.5 411.4 832.0 410.0C830.5 408.6 826.6 407.5 825.3 407.0C824.1 406.5 825.2 407.7 823.7 406.7Z M808.7 356.7C809.5 355.5 813.8 353.1 815.3 353.3C816.8 353.6 818.3 356.6 818.7 358.3C819.0 360.1 817.1 363.5 817.8 365.0C818.6 366.5 822.3 366.8 823.7 368.3C825.0 369.8 825.8 373.0 827.0 375.0C828.2 377.0 831.0 379.9 832.0 381.7C833.0 383.4 834.4 385.4 833.7 386.7C832.9 387.9 829.2 389.2 827.0 390.0C824.8 390.8 820.8 391.5 818.7 391.7C816.5 391.8 813.0 391.7 812.8 390.8C812.7 390.0 817.6 387.2 817.8 385.8C818.1 384.5 814.4 382.8 814.5 381.7C814.6 380.5 818.5 379.6 818.7 378.3C818.8 377.1 816.2 374.8 815.3 373.3C814.5 371.8 813.1 369.8 812.8 368.3C812.6 366.8 814.2 364.5 813.7 363.3C813.2 362.2 810.2 361.8 809.5 360.8C808.8 359.8 807.8 357.8 808.7 356.7Z M797.0 375.0C798.1 373.2 801.7 370.9 803.7 370.0C805.7 369.1 809.2 368.4 810.3 369.2C811.5 369.9 811.7 373.1 811.2 375.0C810.7 376.9 808.6 380.2 807.0 381.7C805.4 383.2 802.0 385.0 800.3 385.0C798.7 385.0 796.7 383.2 796.2 381.7C795.7 380.2 795.9 376.8 797.0 375.0Z M993.7 283.3C993.9 281.6 998.3 278.7 1000.3 276.7C1002.3 274.7 1004.8 272.0 1007.0 270.0C1009.2 268.0 1012.6 265.1 1015.3 263.3C1018.1 261.6 1022.1 259.7 1025.3 258.3C1028.6 257.0 1033.5 255.0 1037.0 254.2C1040.5 253.3 1047.2 252.1 1048.7 252.5C1050.2 252.9 1048.8 255.5 1047.0 256.7C1045.2 257.8 1040.0 258.9 1037.0 260.0C1034.0 261.1 1029.8 262.8 1027.0 264.2C1024.2 265.5 1020.9 267.3 1018.7 269.2C1016.4 271.0 1013.8 274.5 1012.0 276.7C1010.2 278.8 1008.0 281.5 1007.0 283.3C1006.0 285.2 1006.6 288.4 1005.3 289.2C1004.1 289.9 1000.4 289.2 998.7 288.3C996.9 287.5 993.4 285.1 993.7 283.3Z M869.5 439.4C870.6 438.9 875.8 438.4 877.0 438.8C878.2 439.1 878.2 441.1 877.6 441.9C877.1 442.6 874.5 443.8 873.2 443.8C872.0 443.8 870.1 442.5 869.5 441.9C868.9 441.2 868.4 439.8 869.5 439.4Z M855.8 428.8C856.2 427.6 858.9 427.2 859.5 428.1C860.1 429.1 860.2 433.9 859.8 435.0C859.3 436.1 857.0 436.6 856.4 435.6C855.8 434.7 855.3 429.9 855.8 428.8Z M857.0 421.2C857.3 420.4 858.9 420.2 859.2 421.0C859.6 421.8 859.8 425.4 859.5 426.2C859.2 427.1 857.8 427.2 857.4 426.5C857.0 425.8 856.7 422.1 857.0 421.2Z M930.1 449.4C930.7 448.9 933.8 448.0 934.5 448.1C935.2 448.2 935.7 449.5 935.1 450.0C934.6 450.5 931.5 451.3 930.8 451.2C930.0 451.2 929.6 449.8 930.1 449.4Z M902.6 448.1C903.8 448.0 909.6 448.5 910.8 448.8C911.9 449.0 911.3 449.9 910.1 450.0C909.0 450.1 904.1 450.0 903.0 449.8C901.9 449.5 901.5 448.3 902.6 448.1Z M837.0 433.1C837.3 432.8 839.1 432.6 839.5 432.8C839.9 432.9 839.8 434.1 839.5 434.4C839.2 434.7 837.6 434.8 837.2 434.6C836.9 434.4 836.7 433.4 837.0 433.1Z M1063.7 340.0C1068.7 318.2 1064.6 314.1 1065.3 308.3C1066.1 302.6 1067.2 302.7 1068.7 301.7C1070.2 300.7 1074.1 301.9 1075.3 301.7C1076.6 301.4 1077.8 300.8 1077.0 300.0C1076.2 299.2 1071.6 298.4 1070.3 296.7C1069.1 294.9 1068.4 290.6 1068.7 288.3C1068.9 286.1 1070.5 283.2 1072.0 281.7C1073.5 280.2 1076.2 279.3 1078.7 278.3C1081.2 277.3 1085.7 275.8 1088.7 275.0C1091.7 274.2 1096.2 274.3 1098.7 273.3C1101.2 272.3 1103.3 269.8 1105.3 268.3C1107.3 266.8 1109.5 264.6 1112.0 263.3C1114.5 262.1 1119.0 261.0 1122.0 260.0C1125.0 259.0 1129.0 257.3 1132.0 256.7C1135.0 256.0 1139.5 256.3 1142.0 255.8C1144.5 255.3 1147.2 254.5 1148.7 253.3C1150.2 252.2 1150.2 249.3 1152.0 248.3C1153.8 247.3 1158.1 246.2 1160.3 246.7C1162.6 247.2 1164.8 250.5 1167.0 251.7C1169.2 252.8 1172.6 253.4 1175.3 254.2C1178.1 254.9 1183.3 255.8 1185.3 256.7C1187.3 257.5 1188.7 258.9 1188.7 260.0C1188.7 261.1 1186.8 262.9 1185.3 264.2C1183.8 265.4 1180.7 267.2 1178.7 268.3C1176.7 269.5 1174.2 270.4 1172.0 271.7C1169.8 272.9 1163.7 276.4 1163.7 276.7C1163.7 276.9 1169.2 274.1 1172.0 273.3C1174.8 272.6 1179.0 271.7 1182.0 271.7C1185.0 271.7 1189.0 272.8 1192.0 273.3C1195.0 273.8 1199.5 274.5 1202.0 275.0C1204.5 275.5 1206.2 276.7 1208.7 276.7C1211.2 276.7 1216.4 275.6 1218.7 275.0C1220.9 274.4 1221.7 272.5 1223.7 272.5C1225.7 272.5 1229.8 273.9 1232.0 275.0C1234.2 276.1 1237.9 278.5 1238.7 280.0C1239.4 281.5 1236.5 283.8 1237.0 285.0C1237.5 286.2 1240.2 288.3 1242.0 288.3C1243.8 288.3 1246.7 285.2 1248.7 285.0C1250.7 284.8 1252.8 286.7 1255.3 286.7C1257.8 286.7 1262.8 285.8 1265.3 285.0C1267.8 284.2 1270.0 282.7 1272.0 281.7C1274.0 280.7 1276.4 278.6 1278.7 278.3C1280.9 278.1 1285.0 279.2 1287.0 280.0C1289.0 280.8 1290.2 282.6 1292.0 283.3C1293.8 284.1 1296.2 284.2 1298.7 285.0C1301.2 285.8 1305.7 287.6 1308.7 288.3C1311.7 289.1 1315.7 289.9 1318.7 290.0C1321.7 290.1 1325.9 288.9 1328.7 289.2C1331.4 289.4 1335.0 290.5 1337.0 291.7C1339.0 292.8 1340.2 295.7 1342.0 296.7C1343.8 297.7 1346.2 298.3 1348.7 298.3C1351.2 298.3 1356.2 297.2 1358.7 296.7C1361.2 296.2 1363.3 295.2 1365.3 295.0C1367.3 294.8 1369.0 294.8 1372.0 295.0C1375.0 295.2 1381.8 296.2 1385.3 296.7C1388.8 297.2 1392.6 297.6 1395.3 298.3C1398.1 299.1 1401.4 300.4 1403.7 301.7C1405.9 302.9 1408.1 305.4 1410.3 306.7C1412.6 307.9 1416.2 309.0 1418.7 310.0C1421.2 311.0 1424.4 312.2 1427.0 313.3C1429.6 314.5 1435.7 316.2 1436.2 317.5C1436.7 318.8 1432.0 320.5 1430.3 321.7C1428.7 322.8 1426.8 324.6 1425.3 325.0C1423.8 325.4 1422.1 324.9 1420.3 324.2C1418.6 323.4 1415.7 321.0 1413.7 320.0C1411.7 319.0 1408.8 317.2 1407.0 317.5C1405.2 317.8 1403.5 320.5 1402.0 321.7C1400.5 322.8 1397.1 323.5 1397.0 325.0C1396.9 326.5 1401.2 330.2 1401.2 331.7C1401.2 333.2 1398.9 334.0 1397.0 335.0C1395.1 336.0 1391.2 337.3 1388.7 338.3C1386.2 339.3 1382.8 340.7 1380.3 341.7C1377.8 342.7 1374.5 344.2 1372.0 345.0C1369.5 345.8 1366.2 345.9 1363.7 346.7C1361.2 347.4 1357.3 349.0 1355.3 350.0C1353.3 351.0 1351.6 352.1 1350.3 353.3C1349.1 354.6 1347.1 356.8 1347.0 358.3C1346.9 359.8 1349.5 361.8 1349.5 363.3C1349.5 364.8 1348.1 366.8 1347.0 368.3C1345.9 369.8 1343.5 371.8 1342.0 373.3C1340.5 374.8 1338.5 376.8 1337.0 378.3C1335.5 379.8 1333.4 381.8 1332.0 383.3C1330.6 384.8 1328.8 388.6 1327.8 388.3C1326.8 388.1 1325.8 383.9 1325.3 381.7C1324.8 379.4 1324.4 375.8 1324.5 373.3C1324.6 370.8 1325.3 367.2 1326.2 365.0C1327.0 362.8 1328.7 360.1 1330.3 358.3C1332.0 356.6 1335.0 355.1 1337.0 353.3C1339.0 351.6 1341.9 348.4 1343.7 346.7C1345.4 344.9 1347.7 343.2 1348.7 341.7C1349.7 340.2 1350.8 337.2 1350.3 336.7C1349.8 336.2 1347.1 337.3 1345.3 338.3C1343.6 339.3 1340.7 342.8 1338.7 343.3C1336.7 343.8 1334.0 341.4 1332.0 341.7C1330.0 341.9 1326.8 343.8 1325.3 345.0C1323.8 346.2 1323.5 349.0 1322.0 350.0C1320.5 351.0 1317.3 351.7 1315.3 351.7C1313.3 351.7 1310.7 350.0 1308.7 350.0C1306.7 350.0 1304.2 351.2 1302.0 351.7C1299.8 352.2 1295.9 352.8 1293.7 353.3C1291.4 353.8 1289.2 354.2 1287.0 355.0C1284.8 355.8 1280.9 357.1 1278.7 358.3C1276.4 359.6 1274.0 361.8 1272.0 363.3C1270.0 364.8 1267.1 367.0 1265.3 368.3C1263.6 369.7 1260.3 371.8 1260.3 372.5C1260.3 373.2 1263.6 373.0 1265.3 373.3C1267.1 373.7 1270.2 374.0 1272.0 375.0C1273.8 376.0 1276.1 378.0 1277.0 380.0C1277.9 382.0 1278.1 385.8 1277.8 388.3C1277.6 390.8 1276.5 394.2 1275.3 396.7C1274.2 399.2 1272.1 402.8 1270.3 405.0C1268.6 407.2 1265.7 409.9 1263.7 411.7C1261.7 413.4 1259.0 415.2 1257.0 416.7C1255.0 418.2 1252.3 420.4 1250.3 421.7C1248.3 422.9 1245.7 423.8 1243.7 425.0C1241.7 426.2 1238.8 428.5 1237.0 430.0C1235.2 431.5 1232.2 433.8 1232.0 435.0C1231.8 436.2 1234.3 437.1 1235.3 438.3C1236.3 439.6 1238.3 441.6 1238.7 443.3C1239.0 445.1 1238.8 448.6 1237.8 450.0C1236.8 451.4 1233.4 453.0 1232.0 452.5C1230.6 452.0 1229.4 448.3 1228.7 446.7C1227.9 445.0 1228.0 442.9 1227.0 441.7C1226.0 440.4 1223.5 438.6 1222.0 438.3C1220.5 438.1 1218.2 439.2 1217.0 440.0C1215.8 440.8 1214.9 443.3 1213.7 443.3C1212.4 443.3 1208.4 441.2 1208.7 440.0C1208.9 438.8 1214.6 436.4 1215.3 435.0C1216.1 433.6 1214.9 431.1 1213.7 430.8C1212.4 430.6 1208.8 432.5 1207.0 433.3C1205.2 434.2 1202.2 435.4 1202.0 436.7C1201.8 437.9 1204.1 440.2 1205.3 441.7C1206.6 443.2 1209.8 444.9 1210.3 446.7C1210.8 448.4 1208.4 451.3 1208.7 453.3C1208.9 455.3 1211.0 458.0 1212.0 460.0C1213.0 462.0 1215.1 464.7 1215.3 466.7C1215.6 468.7 1214.4 471.6 1213.7 473.3C1212.9 475.1 1211.3 476.6 1210.3 478.3C1209.3 480.1 1208.2 483.0 1207.0 485.0C1205.8 487.0 1203.8 490.2 1202.0 491.7C1200.2 493.2 1197.3 494.2 1195.3 495.0C1193.3 495.8 1190.7 495.9 1188.7 496.7C1186.7 497.4 1184.0 499.0 1182.0 500.0C1180.0 501.0 1176.8 502.3 1175.3 503.3C1173.8 504.3 1173.2 506.4 1172.0 506.7C1170.8 506.9 1168.5 505.0 1167.0 505.0C1165.5 505.0 1162.2 505.7 1162.0 506.7C1161.8 507.7 1164.3 510.2 1165.3 511.7C1166.3 513.2 1167.7 514.9 1168.7 516.7C1169.7 518.4 1171.8 521.3 1172.0 523.3C1172.2 525.3 1170.2 530.5 1170.3 530.0C1170.5 529.5 1172.3 521.0 1172.8 520.0C1173.3 519.0 1174.0 521.8 1173.7 523.3C1173.3 524.8 1171.6 528.2 1170.3 530.0C1169.1 531.8 1166.6 533.5 1165.3 535.0C1164.1 536.5 1163.0 540.0 1162.0 540.0C1161.0 540.0 1160.2 536.8 1158.7 535.0C1157.2 533.2 1154.0 529.8 1152.0 528.3C1150.0 526.8 1147.1 525.2 1145.3 525.0C1143.6 524.8 1141.2 525.9 1140.3 526.7C1139.5 527.4 1139.5 528.0 1139.5 530.0C1139.5 532.0 1139.6 537.5 1140.3 540.0C1141.1 542.5 1143.2 544.9 1144.5 546.7C1145.8 548.4 1147.3 549.9 1148.7 551.7C1150.0 553.4 1152.4 556.5 1153.7 558.3C1154.9 560.2 1156.8 563.2 1157.0 564.2C1157.2 565.2 1156.3 565.6 1155.3 565.0C1154.3 564.4 1151.7 561.5 1150.3 560.0C1149.0 558.5 1147.4 556.8 1146.2 555.0C1144.9 553.2 1143.1 550.3 1142.0 548.3C1140.9 546.3 1139.3 544.2 1138.7 541.7C1138.0 539.2 1137.6 532.9 1137.8 531.7C1138.1 530.4 1140.2 534.1 1140.3 533.3C1140.5 532.6 1139.4 528.9 1138.7 526.7C1137.9 524.4 1136.3 520.3 1135.3 518.3C1134.3 516.3 1133.2 513.8 1132.0 513.3C1130.8 512.8 1128.0 515.5 1127.0 515.0C1126.0 514.5 1126.1 512.0 1125.3 510.0C1124.6 508.0 1123.1 503.9 1122.0 501.7C1120.9 499.4 1119.3 495.8 1117.8 495.0C1116.3 494.2 1114.1 496.2 1112.0 496.7C1109.9 497.2 1106.2 498.3 1103.7 498.3C1101.2 498.3 1096.6 496.4 1095.3 496.7C1094.1 496.9 1096.3 498.8 1095.3 500.0C1094.3 501.2 1090.5 503.5 1088.7 505.0C1086.8 506.5 1084.0 508.2 1082.8 510.0C1081.7 511.8 1080.8 514.7 1081.2 516.7C1081.5 518.7 1084.9 521.1 1085.3 523.3C1085.8 525.6 1084.7 529.4 1084.0 531.7C1083.3 533.9 1081.7 536.8 1080.7 538.3C1079.7 539.9 1078.4 542.0 1077.3 542.0C1076.3 542.0 1074.7 540.1 1073.7 538.3C1072.6 536.5 1071.3 532.5 1070.3 530.0C1069.3 527.5 1068.0 524.2 1067.0 521.7C1066.0 519.2 1064.7 516.1 1063.7 513.3C1062.7 510.6 1061.0 505.6 1060.3 503.3C1059.7 501.1 1060.2 499.1 1059.5 498.3C1058.8 497.6 1057.0 499.1 1055.3 498.3C1053.7 497.6 1050.2 494.8 1048.7 493.3C1047.2 491.8 1046.8 489.6 1045.3 488.3C1043.8 487.1 1040.7 485.8 1038.7 485.0C1036.7 484.2 1033.0 488.1 1032.0 483.3C1031.0 478.6 1027.2 474.8 1032.0 453.3C1036.8 431.8 1058.7 361.8 1063.7 340.0Z M1083.7 538.3C1084.4 537.7 1087.0 538.2 1087.8 539.2C1088.7 540.2 1089.6 543.4 1089.5 545.0C1089.4 546.6 1087.9 549.4 1087.0 550.0C1086.1 550.6 1084.3 550.2 1083.7 549.2C1083.0 548.2 1082.8 545.0 1082.8 543.3C1082.8 541.7 1082.9 539.0 1083.7 538.3Z M1210.3 487.5C1211.1 486.8 1213.9 485.8 1214.5 486.7C1215.1 487.5 1215.0 492.0 1214.5 493.3C1214.0 494.7 1211.9 496.1 1211.2 495.8C1210.4 495.6 1209.6 492.9 1209.5 491.7C1209.4 490.4 1209.6 488.2 1210.3 487.5Z M1172.8 505.0C1173.3 504.2 1177.0 503.8 1177.8 504.2C1178.7 504.5 1179.2 506.8 1178.7 507.5C1178.2 508.2 1175.4 509.5 1174.5 509.2C1173.6 508.8 1172.3 505.8 1172.8 505.0Z M1281.2 375.0C1281.9 374.8 1283.9 378.0 1284.5 380.0C1285.1 382.0 1284.8 385.8 1285.3 388.3C1285.8 390.8 1287.8 394.9 1287.8 396.7C1287.8 398.4 1286.0 398.5 1285.3 400.0C1284.7 401.5 1284.3 405.4 1283.7 406.7C1283.0 407.9 1281.7 409.3 1281.2 408.3C1280.7 407.3 1280.5 402.8 1280.3 400.0C1280.2 397.2 1280.5 392.8 1280.3 390.0C1280.2 387.2 1279.4 383.9 1279.5 381.7C1279.6 379.4 1280.4 375.2 1281.2 375.0Z M1278.7 413.3C1279.7 412.8 1282.2 414.2 1283.7 415.0C1285.2 415.8 1287.2 418.1 1288.7 418.3C1290.2 418.6 1293.4 416.2 1293.7 416.7C1293.9 417.2 1291.6 420.4 1290.3 421.7C1289.1 422.9 1287.1 424.2 1285.3 425.0C1283.6 425.8 1280.2 426.9 1278.7 426.7C1277.2 426.4 1275.6 424.6 1275.3 423.3C1275.1 422.1 1276.5 419.8 1277.0 418.3C1277.5 416.8 1277.7 413.8 1278.7 413.3Z M1275.3 429.2C1276.5 428.7 1278.9 430.3 1279.5 431.7C1280.1 433.0 1280.1 436.3 1279.5 438.3C1278.9 440.3 1276.7 443.5 1275.3 445.0C1274.0 446.5 1272.1 447.3 1270.3 448.3C1268.6 449.3 1265.9 450.7 1263.7 451.7C1261.4 452.7 1257.6 454.0 1255.3 455.0C1253.1 456.0 1250.7 457.6 1248.7 458.3C1246.7 459.1 1242.2 460.5 1242.0 460.0C1241.8 459.5 1245.2 456.2 1247.0 455.0C1248.8 453.8 1251.4 452.9 1253.7 451.7C1255.9 450.4 1259.8 448.2 1262.0 446.7C1264.2 445.2 1267.2 443.4 1268.7 441.7C1270.2 439.9 1271.0 436.9 1272.0 435.0C1273.0 433.1 1274.2 429.7 1275.3 429.2Z M1241.2 457.5C1242.0 456.8 1245.3 456.2 1246.2 456.7C1247.0 457.2 1247.4 459.6 1247.0 460.8C1246.6 462.1 1244.7 464.9 1243.7 465.0C1242.7 465.1 1240.7 462.8 1240.3 461.7C1240.0 460.5 1240.3 458.2 1241.2 457.5Z M1249.5 455.3C1250.5 454.6 1255.9 453.5 1257.0 453.7C1258.1 453.8 1258.0 455.4 1257.0 456.2C1256.0 456.9 1251.5 458.8 1250.3 458.7C1249.2 458.5 1248.5 456.1 1249.5 455.3Z M1121.2 230.0C1121.7 228.6 1125.1 224.7 1127.0 223.3C1128.9 222.0 1132.0 220.6 1133.7 220.8C1135.3 221.1 1138.1 223.9 1137.8 225.0C1137.6 226.1 1131.6 227.6 1132.0 228.3C1132.4 229.1 1138.5 229.1 1140.3 230.0C1142.2 230.9 1144.8 232.9 1144.5 234.2C1144.2 235.4 1140.8 238.2 1138.7 238.3C1136.5 238.5 1132.6 235.9 1130.3 235.0C1128.1 234.1 1125.0 233.2 1123.7 232.5C1122.3 231.8 1120.7 231.4 1121.2 230.0Z M1143.7 243.3C1144.4 241.8 1149.5 235.9 1152.0 235.0C1154.5 234.1 1158.7 236.8 1160.3 237.5C1162.0 238.2 1163.8 239.2 1162.8 240.0C1161.8 240.8 1156.0 241.8 1153.7 242.5C1151.3 243.2 1148.5 244.9 1147.0 245.0C1145.5 245.1 1142.9 244.8 1143.7 243.3Z M1264.5 260.0C1265.0 258.9 1268.2 256.9 1270.3 256.7C1272.5 256.4 1275.9 258.0 1278.7 258.3C1281.4 258.7 1287.0 258.5 1288.7 259.2C1290.3 259.8 1290.5 261.6 1289.5 262.5C1288.5 263.4 1284.4 264.5 1282.0 265.0C1279.6 265.5 1275.9 266.0 1273.7 265.8C1271.4 265.7 1268.4 265.0 1267.0 264.2C1265.6 263.3 1264.0 261.1 1264.5 260.0Z M1294.5 262.5C1295.5 262.0 1299.9 261.5 1302.0 261.7C1304.1 261.8 1307.8 262.7 1308.7 263.3C1309.5 264.0 1309.1 265.3 1307.8 265.8C1306.6 266.3 1302.2 266.8 1300.3 266.7C1298.5 266.5 1296.2 265.6 1295.3 265.0C1294.5 264.4 1293.5 263.0 1294.5 262.5Z M1276.2 273.3C1276.7 272.8 1280.8 271.8 1282.0 272.0C1283.2 272.2 1285.0 274.4 1284.5 275.0C1284.0 275.6 1279.9 276.1 1278.7 275.8C1277.4 275.6 1275.7 273.9 1276.2 273.3Z M1399.5 288.3C1400.2 287.7 1403.6 286.7 1405.3 286.7C1407.1 286.7 1410.9 287.7 1411.2 288.3C1411.4 289.0 1408.6 290.5 1407.0 290.8C1405.4 291.2 1401.5 291.2 1400.3 290.8C1399.2 290.5 1398.8 289.0 1399.5 288.3Z M1430.3 330.8C1431.5 330.7 1437.3 331.2 1438.7 331.7C1440.0 332.1 1440.6 333.5 1439.5 333.7C1438.4 333.8 1432.5 332.9 1431.2 332.5C1429.8 332.1 1429.2 331.0 1430.3 330.8Z M1129.5 551.7C1129.8 551.2 1132.0 551.5 1133.7 552.5C1135.3 553.5 1138.3 556.5 1140.3 558.3C1142.3 560.2 1145.0 563.2 1147.0 565.0C1149.0 566.8 1151.7 568.5 1153.7 570.0C1155.7 571.5 1158.6 573.8 1160.3 575.0C1162.1 576.2 1164.8 576.8 1165.3 578.3C1165.8 579.8 1164.4 583.6 1163.7 585.0C1162.9 586.4 1161.6 587.8 1160.3 587.5C1159.1 587.2 1156.8 585.0 1155.3 583.3C1153.8 581.7 1152.1 578.9 1150.3 576.7C1148.6 574.4 1145.7 570.8 1143.7 568.3C1141.7 565.8 1138.8 561.9 1137.0 560.0C1135.2 558.1 1133.1 557.1 1132.0 555.8C1130.9 554.6 1129.2 552.2 1129.5 551.7Z M1162.0 589.2C1162.8 588.7 1166.2 588.1 1168.7 588.3C1171.2 588.6 1175.7 590.2 1178.7 590.8C1181.7 591.5 1185.7 591.8 1188.7 592.5C1191.7 593.2 1196.4 595.1 1198.7 595.8C1200.9 596.6 1203.7 597.1 1203.7 597.5C1203.7 597.9 1200.9 598.5 1198.7 598.3C1196.4 598.2 1191.7 597.2 1188.7 596.7C1185.7 596.2 1181.7 595.5 1178.7 595.0C1175.7 594.5 1170.9 593.8 1168.7 593.3C1166.4 592.8 1164.7 592.3 1163.7 591.7C1162.7 591.0 1161.2 589.7 1162.0 589.2Z M1205.3 600.0C1205.6 599.4 1211.2 598.0 1212.0 598.3C1212.8 598.7 1211.3 602.2 1210.3 602.5C1209.3 602.8 1205.1 600.6 1205.3 600.0Z M1208.7 596.7C1210.3 596.3 1218.5 595.8 1220.3 595.8C1222.2 595.9 1222.8 596.7 1221.2 597.0C1219.5 597.3 1211.4 598.0 1209.5 598.0C1207.6 598.0 1207.0 597.0 1208.7 596.7Z M1220.3 601.7C1221.1 600.8 1225.4 597.5 1227.0 596.7C1228.6 595.8 1231.2 595.5 1231.2 595.8C1231.2 596.2 1228.4 598.2 1227.0 599.2C1225.6 600.2 1223.0 602.1 1222.0 602.5C1221.0 602.9 1219.6 602.5 1220.3 601.7Z M1172.8 564.2C1173.5 563.0 1176.8 563.4 1178.7 562.5C1180.5 561.6 1183.3 559.7 1185.3 558.3C1187.3 557.0 1190.2 554.8 1192.0 553.3C1193.8 551.8 1195.5 549.2 1197.0 548.3C1198.5 547.5 1200.8 547.1 1202.0 547.5C1203.2 547.9 1205.3 549.7 1205.3 550.8C1205.3 552.0 1202.8 553.4 1202.0 555.0C1201.2 556.6 1200.1 560.2 1200.3 561.7C1200.6 563.2 1203.7 563.8 1203.7 565.0C1203.7 566.2 1201.3 568.5 1200.3 570.0C1199.3 571.5 1197.8 573.4 1197.0 575.0C1196.2 576.6 1196.6 579.8 1195.3 580.8C1194.1 581.8 1190.4 581.9 1188.7 581.7C1186.9 581.4 1185.2 580.2 1183.7 579.2C1182.2 578.2 1180.0 576.4 1178.7 575.0C1177.3 573.6 1175.4 571.6 1174.5 570.0C1173.6 568.4 1172.2 565.3 1172.8 564.2Z M1208.7 568.3C1210.3 567.0 1213.1 566.5 1215.3 565.8C1217.6 565.2 1222.5 564.0 1223.7 564.2C1224.8 564.3 1224.1 565.9 1222.8 566.7C1221.6 567.4 1217.0 568.2 1215.3 569.2C1213.7 570.2 1211.8 573.0 1212.0 573.3C1212.2 573.7 1215.8 571.8 1217.0 571.7C1218.2 571.5 1220.5 571.8 1220.3 572.5C1220.2 573.2 1216.9 575.0 1216.2 576.7C1215.4 578.3 1215.8 582.2 1215.3 583.3C1214.8 584.5 1213.5 584.9 1212.8 584.2C1212.2 583.4 1211.7 578.0 1211.2 578.3C1210.7 578.7 1210.1 585.5 1209.5 586.7C1208.9 587.8 1207.5 587.3 1207.0 585.8C1206.5 584.3 1206.5 578.3 1206.2 576.7C1205.8 575.0 1204.1 576.2 1204.5 575.0C1204.9 573.8 1207.0 569.7 1208.7 568.3Z M1210.3 520.0C1210.6 519.8 1212.4 523.8 1213.7 525.0C1214.9 526.2 1217.2 527.3 1218.7 528.3C1220.2 529.3 1222.2 530.2 1223.7 531.7C1225.2 533.2 1227.7 536.3 1228.7 538.3C1229.7 540.3 1230.3 543.1 1230.3 545.0C1230.3 546.9 1229.5 550.0 1228.7 550.8C1227.8 551.7 1225.4 551.5 1224.5 550.8C1223.6 550.2 1223.7 547.4 1222.8 546.7C1222.0 545.9 1219.8 546.3 1218.7 545.8C1217.5 545.3 1215.3 544.3 1215.3 543.3C1215.3 542.3 1217.9 540.3 1218.7 539.2C1219.4 538.0 1220.8 537.0 1220.3 535.8C1219.8 534.7 1216.6 533.0 1215.3 531.7C1214.1 530.3 1212.8 528.4 1212.0 526.7C1211.2 524.9 1210.1 520.2 1210.3 520.0Z M1210.3 510.0C1211.3 508.9 1214.5 508.4 1215.3 509.2C1216.2 509.9 1216.4 513.4 1216.2 515.0C1215.9 516.6 1214.8 519.8 1213.7 520.0C1212.5 520.2 1209.2 518.2 1208.7 516.7C1208.2 515.2 1209.3 511.1 1210.3 510.0Z M1199.5 540.8C1200.2 539.5 1205.0 534.3 1206.2 533.3C1207.3 532.3 1208.1 532.9 1207.3 534.2C1206.6 535.5 1202.3 541.0 1201.2 542.0C1200.0 543.0 1198.8 542.1 1199.5 540.8Z M1232.0 564.2C1232.4 563.2 1235.4 562.7 1236.2 563.3C1236.9 564.0 1237.4 567.3 1237.0 568.3C1236.6 569.3 1234.4 570.6 1233.7 570.0C1232.9 569.4 1231.6 565.2 1232.0 564.2Z M1244.5 571.7C1245.1 570.8 1248.7 569.8 1250.3 570.0C1252.0 570.2 1254.8 572.2 1255.3 573.3C1255.8 574.5 1252.9 577.0 1253.7 577.5C1254.4 578.0 1258.3 577.2 1260.3 576.7C1262.3 576.2 1264.8 574.2 1267.0 574.2C1269.2 574.2 1272.8 575.8 1275.3 576.7C1277.8 577.5 1281.4 578.9 1283.7 580.0C1285.9 581.1 1288.3 582.8 1290.3 584.2C1292.3 585.5 1295.8 587.8 1297.0 589.2C1298.2 590.5 1297.9 592.0 1298.7 593.3C1299.4 594.7 1300.9 596.8 1302.0 598.3C1303.1 599.8 1306.4 602.8 1306.2 603.3C1305.9 603.8 1302.2 602.7 1300.3 601.7C1298.5 600.7 1295.7 597.7 1293.7 596.7C1291.7 595.7 1288.8 594.8 1287.0 595.0C1285.2 595.2 1283.8 598.0 1282.0 598.3C1280.2 598.7 1277.3 597.9 1275.3 597.5C1273.3 597.1 1270.2 596.7 1268.7 595.8C1267.2 595.0 1265.3 593.0 1265.3 591.7C1265.3 590.3 1269.2 587.8 1268.7 586.7C1268.2 585.5 1264.0 584.9 1262.0 584.2C1260.0 583.4 1257.1 582.5 1255.3 581.7C1253.6 580.8 1251.7 579.2 1250.3 578.3C1249.0 577.5 1247.0 576.8 1246.2 575.8C1245.3 574.8 1243.9 572.5 1244.5 571.7Z M1300.3 587.5C1300.8 587.0 1305.1 587.4 1307.0 586.7C1308.9 585.9 1311.7 582.9 1312.8 582.5C1314.0 582.1 1314.9 583.3 1314.5 584.2C1314.1 585.0 1312.0 587.5 1310.3 588.3C1308.7 589.2 1305.2 590.1 1303.7 590.0C1302.2 589.9 1299.8 588.0 1300.3 587.5Z M1320.3 587.5C1321.4 587.9 1326.1 590.8 1327.0 591.7C1327.9 592.5 1327.2 593.7 1326.2 593.3C1325.1 593.0 1320.9 590.0 1320.0 589.2C1319.1 588.3 1319.3 587.1 1320.3 587.5Z M1332.0 594.2C1333.0 594.6 1337.2 597.1 1338.7 598.3C1340.2 599.6 1341.8 601.8 1342.0 602.5C1342.2 603.2 1341.3 603.8 1340.3 603.3C1339.3 602.8 1336.6 600.4 1335.3 599.2C1334.0 598.0 1332.2 596.1 1331.7 595.3C1331.2 594.6 1331.0 593.7 1332.0 594.2Z M1350.3 635.8C1351.5 636.3 1357.3 639.8 1358.7 640.8C1360.0 641.8 1360.6 643.0 1359.5 642.5C1358.4 642.0 1352.5 638.5 1351.2 637.5C1349.8 636.5 1349.2 635.3 1350.3 635.8Z M1393.7 626.7C1394.3 626.0 1397.8 624.3 1398.7 624.2C1399.5 624.0 1400.1 625.2 1399.5 625.8C1398.9 626.5 1395.4 628.2 1394.5 628.3C1393.6 628.5 1393.0 627.3 1393.7 626.7Z M1197.0 682.5C1196.0 681.7 1193.0 681.9 1192.0 680.0C1191.0 678.1 1191.0 672.8 1190.3 670.0C1189.7 667.2 1188.5 664.2 1187.8 661.7C1187.2 659.2 1186.3 655.6 1186.2 653.3C1186.0 651.1 1186.1 648.4 1187.0 646.7C1187.9 644.9 1189.8 643.2 1192.0 641.7C1194.2 640.2 1199.0 637.9 1202.0 636.7C1205.0 635.4 1209.8 634.6 1212.0 633.3C1214.2 632.1 1215.8 629.8 1217.0 628.3C1218.2 626.8 1218.8 625.0 1220.3 623.3C1221.8 621.7 1225.5 618.9 1227.0 617.5C1228.5 616.1 1229.1 614.3 1230.3 614.2C1231.6 614.0 1233.8 616.8 1235.3 616.7C1236.8 616.5 1238.8 614.6 1240.3 613.3C1241.8 612.1 1243.8 609.2 1245.3 608.3C1246.8 607.5 1248.6 607.2 1250.3 607.5C1252.1 607.8 1255.2 609.8 1257.0 610.0C1258.8 610.2 1261.5 608.4 1262.0 609.2C1262.5 609.9 1259.8 613.4 1260.3 615.0C1260.8 616.6 1263.6 618.5 1265.3 620.0C1267.1 621.5 1270.4 624.5 1272.0 625.0C1273.6 625.5 1275.2 625.1 1276.2 623.3C1277.2 621.6 1278.0 616.1 1278.7 613.3C1279.3 610.6 1279.7 606.0 1280.3 605.0C1281.0 604.0 1282.2 605.2 1282.8 606.7C1283.5 608.2 1283.6 612.8 1284.5 615.0C1285.4 617.2 1287.5 619.4 1288.7 621.7C1289.8 623.9 1290.5 627.8 1292.0 630.0C1293.5 632.2 1296.7 634.7 1298.7 636.7C1300.7 638.7 1303.3 641.1 1305.3 643.3C1307.3 645.6 1310.5 649.2 1312.0 651.7C1313.5 654.2 1315.0 657.5 1315.3 660.0C1315.7 662.5 1315.0 665.6 1314.5 668.3C1314.0 671.0 1313.4 674.0 1312.0 678.0C1310.6 682.0 1307.3 691.2 1305.3 694.7C1303.3 698.2 1301.7 700.3 1298.7 701.3C1295.7 702.3 1288.8 702.1 1285.3 701.3C1281.8 700.6 1277.6 698.3 1275.3 696.3C1273.1 694.3 1272.1 689.8 1270.3 688.0C1268.6 686.2 1265.4 686.2 1263.7 684.7C1261.9 683.2 1260.9 679.5 1258.7 678.0C1256.4 676.5 1252.2 675.2 1248.7 674.7C1245.2 674.2 1239.3 674.2 1235.3 674.7C1231.3 675.2 1226.0 676.5 1222.0 678.0C1218.0 679.5 1212.2 683.6 1208.7 684.7C1205.2 685.8 1200.4 685.7 1198.7 685.3C1196.9 685.0 1198.0 683.3 1197.0 682.5Z M1288.7 709.7C1290.1 708.7 1297.2 707.7 1298.7 708.7C1300.2 709.7 1299.4 714.7 1298.7 716.3C1297.9 718.0 1295.1 719.8 1293.7 719.7C1292.3 719.5 1290.1 716.8 1289.3 715.3C1288.6 713.8 1287.3 710.7 1288.7 709.7Z M1378.7 686.3C1379.2 686.1 1382.2 689.8 1383.7 691.3C1385.2 692.8 1386.7 695.3 1388.7 696.3C1390.7 697.3 1396.2 696.8 1397.0 698.0C1397.8 699.2 1395.2 703.2 1393.7 704.7C1392.2 706.2 1388.8 708.0 1387.0 708.0C1385.2 708.0 1382.5 706.2 1382.0 704.7C1381.5 703.2 1383.9 699.8 1383.7 698.0C1383.4 696.2 1381.1 694.8 1380.3 693.0C1379.6 691.2 1378.2 686.6 1378.7 686.3Z M1382.0 708.0C1383.0 708.5 1384.7 709.3 1383.7 711.3C1382.7 713.3 1377.8 718.6 1375.3 721.3C1372.8 724.1 1369.5 728.4 1367.0 729.7C1364.5 730.9 1359.2 730.9 1358.7 729.7C1358.2 728.4 1361.7 723.8 1363.7 721.3C1365.7 718.8 1370.0 715.0 1372.0 713.0C1374.0 711.0 1375.5 708.8 1377.0 708.0C1378.5 707.2 1381.0 707.5 1382.0 708.0Z M312.7 495.0C312.9 494.7 314.3 494.5 314.7 494.7C315.0 494.9 315.2 496.0 315.0 496.3C314.8 496.6 313.4 496.9 313.0 496.7C312.6 496.5 312.4 495.3 312.7 495.0Z M326.0 502.7C326.4 502.2 328.6 502.2 329.0 502.7C329.4 503.2 329.4 505.6 329.0 506.0C328.6 506.4 326.8 506.2 326.3 505.7C325.9 505.2 325.6 503.1 326.0 502.7Z M632.0 749.7C633.4 748.9 640.5 748.1 642.0 748.7C643.5 749.2 643.4 752.5 642.0 753.3C640.6 754.1 634.2 754.5 632.7 754.0C631.2 753.5 630.6 750.5 632.0 749.7Z M705.3 760.7C706.5 760.5 712.6 762.2 713.7 763.0C714.8 763.8 713.8 765.9 712.7 766.0C711.5 766.1 707.1 764.8 706.0 764.0C704.9 763.2 704.2 760.8 705.3 760.7Z M973.7 224.0C975.2 222.7 986.2 220.6 992.0 219.7C997.8 218.8 1005.5 217.8 1012.0 218.0C1018.5 218.2 1031.3 219.8 1035.3 220.7C1039.3 221.6 1040.7 222.9 1038.7 224.0C1036.7 225.1 1027.5 227.2 1022.0 228.0C1016.5 228.8 1008.0 229.6 1002.0 229.7C996.0 229.8 986.2 229.5 982.0 228.7C977.8 227.8 972.2 225.3 973.7 224.0Z M863.7 233.0C864.7 230.2 873.9 227.1 878.7 226.3C883.4 225.6 891.8 227.0 895.3 228.0C898.8 229.0 902.0 230.5 902.0 233.0C902.0 235.5 898.3 241.9 895.3 244.7C892.3 247.4 885.5 251.3 882.0 251.3C878.5 251.3 874.8 247.4 872.0 244.7C869.2 241.9 862.7 235.8 863.7 233.0Z M425.3 268.3C426.5 266.8 429.5 266.8 432.0 266.7C434.5 266.5 439.0 267.0 442.0 267.5C445.0 268.0 450.0 268.9 452.0 270.0C454.0 271.1 455.6 273.5 455.3 275.0C455.1 276.5 452.3 278.8 450.3 280.0C448.3 281.2 444.2 282.1 442.0 283.3C439.8 284.6 437.3 288.3 435.3 288.3C433.3 288.3 430.3 285.1 428.7 283.3C427.0 281.6 425.0 278.9 424.5 276.7C424.0 274.4 424.2 269.8 425.3 268.3Z M447.0 283.3C448.0 282.1 452.6 280.8 455.3 280.0C458.1 279.2 461.8 278.8 465.3 278.3C468.8 277.8 475.2 277.4 478.7 276.7C482.2 275.9 486.4 273.3 488.7 273.3C490.9 273.3 493.2 275.2 493.7 276.7C494.2 278.2 491.5 281.6 492.0 283.3C492.5 285.1 495.2 286.8 497.0 288.3C498.8 289.8 503.2 291.8 503.7 293.3C504.2 294.8 502.1 297.3 500.3 298.3C498.6 299.3 494.8 299.5 492.0 300.0C489.2 300.5 484.5 300.9 482.0 301.7C479.5 302.4 477.8 304.8 475.3 305.0C472.8 305.2 467.8 304.3 465.3 303.3C462.8 302.3 460.7 299.8 458.7 298.3C456.7 296.8 453.5 294.8 452.0 293.3C450.5 291.8 449.4 289.8 448.7 288.3C447.9 286.8 446.0 284.6 447.0 283.3Z M433.7 255.0C434.4 254.2 439.5 253.1 442.0 253.3C444.5 253.6 449.8 255.8 450.3 256.7C450.8 257.5 447.3 258.9 445.3 259.2C443.3 259.4 438.8 259.0 437.0 258.3C435.2 257.7 432.9 255.8 433.7 255.0Z M455.3 256.7C456.1 255.7 460.9 254.8 463.7 255.0C466.4 255.2 470.9 257.3 473.7 258.3C476.4 259.3 481.2 260.7 482.0 261.7C482.8 262.7 480.7 264.8 478.7 265.0C476.7 265.2 471.7 263.8 468.7 263.3C465.7 262.8 460.7 262.7 458.7 261.7C456.7 260.7 454.6 257.7 455.3 256.7Z M493.7 260.0C494.2 258.9 498.1 256.9 500.3 256.7C502.6 256.4 506.7 257.3 508.7 258.3C510.7 259.3 514.2 262.3 513.7 263.3C513.2 264.3 507.8 264.9 505.3 265.0C502.8 265.1 498.8 264.9 497.0 264.2C495.2 263.4 493.2 261.1 493.7 260.0Z M518.7 253.3C519.7 252.3 525.7 251.4 528.7 251.7C531.7 251.9 535.7 254.0 538.7 255.0C541.7 256.0 548.2 257.3 548.7 258.3C549.2 259.3 544.5 261.4 542.0 261.7C539.5 261.9 535.0 260.5 532.0 260.0C529.0 259.5 524.0 259.3 522.0 258.3C520.0 257.3 517.7 254.3 518.7 253.3Z M552.0 263.3C552.8 262.3 555.7 260.5 558.7 260.0C561.7 259.5 570.2 259.2 572.0 260.0C573.8 260.8 572.1 264.0 570.3 265.0C568.6 266.0 562.8 266.4 560.3 266.7C557.8 266.9 554.9 267.2 553.7 266.7C552.4 266.2 551.2 264.3 552.0 263.3Z M503.7 275.0C504.5 273.8 508.3 271.7 510.3 271.7C512.3 271.7 516.2 273.5 517.0 275.0C517.8 276.5 516.6 280.4 515.3 281.7C514.1 282.9 510.3 283.6 508.7 283.3C507.0 283.1 505.2 281.2 504.5 280.0C503.8 278.8 502.8 276.2 503.7 275.0Z M520.3 273.3C521.3 271.8 526.4 270.0 528.7 270.0C530.9 270.0 534.8 271.8 535.3 273.3C535.8 274.8 533.2 278.5 532.0 280.0C530.8 281.5 528.5 283.3 527.0 283.3C525.5 283.3 523.0 281.5 522.0 280.0C521.0 278.5 519.3 274.8 520.3 273.3Z M513.7 288.3C514.4 286.8 518.3 284.8 520.3 285.0C522.3 285.2 525.2 288.2 527.0 290.0C528.8 291.8 530.5 294.7 532.0 296.7C533.5 298.7 537.0 301.6 537.0 303.3C537.0 305.1 533.8 307.8 532.0 308.3C530.2 308.8 527.3 307.7 525.3 306.7C523.3 305.7 520.2 303.4 518.7 301.7C517.2 299.9 516.1 297.0 515.3 295.0C514.6 293.0 512.9 289.8 513.7 288.3Z M462.0 244.0C463.8 242.8 473.1 240.3 475.3 240.7C477.6 241.0 478.8 245.1 477.0 246.3C475.2 247.5 465.9 249.0 463.7 248.7C461.4 248.3 460.2 245.2 462.0 244.0Z M490.3 235.3C491.8 233.7 502.5 232.3 505.3 233.0C508.2 233.7 510.8 238.1 509.3 239.7C507.8 241.3 498.2 244.3 495.3 243.7C492.5 243.0 488.8 236.9 490.3 235.3Z M508.7 247.0C510.3 245.7 522.2 244.1 525.3 244.7C528.4 245.2 531.0 249.4 529.3 250.7C527.7 252.0 517.4 253.9 514.3 253.3C511.2 252.8 507.0 248.3 508.7 247.0Z M528.7 235.3C530.2 234.2 538.3 232.5 540.3 233.0C542.3 233.5 543.5 237.5 542.0 238.7C540.5 239.8 532.3 241.2 530.3 240.7C528.3 240.2 527.2 236.5 528.7 235.3Z M542.0 258.0C543.8 256.6 551.1 254.4 555.3 254.7C559.6 254.9 568.3 257.9 570.3 259.7C572.3 261.4 570.9 265.3 568.7 266.3C566.4 267.3 559.1 266.7 555.3 266.3C551.6 266.0 545.7 265.2 543.7 264.0C541.7 262.8 540.2 259.4 542.0 258.0Z" fill="#7eb24f"/>
<path d="M808.9 448.1C810.0 447.5 811.7 449.4 813.2 449.4C814.8 449.4 817.4 448.6 819.5 448.1C821.6 447.7 824.8 446.7 827.0 446.2C829.2 445.8 832.2 445.3 834.5 445.0C836.8 444.7 839.8 444.6 842.0 444.4C844.2 444.2 847.2 443.9 849.5 443.8C851.8 443.6 855.3 443.3 857.0 443.1C858.7 442.9 859.6 442.4 860.8 442.5C861.9 442.6 864.1 442.8 864.5 443.8C864.9 444.7 863.6 447.4 863.2 448.8C862.9 450.1 861.8 451.6 862.0 452.5C862.2 453.4 863.4 454.4 864.5 455.0C865.6 455.6 867.8 455.5 869.5 456.2C871.2 457.0 873.9 458.9 875.8 460.0C877.6 461.1 880.1 463.0 882.0 463.8C883.9 464.5 886.8 465.4 888.2 465.0C889.8 464.6 890.7 462.1 892.0 461.2C893.3 460.4 895.3 459.5 897.0 459.4C898.7 459.3 901.4 460.2 903.2 460.6C905.1 461.1 907.4 461.8 909.5 462.5C911.6 463.2 914.9 464.5 917.0 465.0C919.1 465.5 921.4 465.6 923.2 465.6C925.1 465.6 927.8 465.1 929.5 465.0C931.2 464.9 933.4 464.7 934.5 465.0C935.6 465.3 936.9 466.1 937.0 466.9C937.1 467.6 936.0 469.5 935.1 470.0C934.3 470.5 931.7 469.1 931.4 470.0C931.0 470.9 932.2 474.2 932.9 476.2C933.6 478.3 935.0 481.3 936.0 483.8C937.0 486.2 938.4 489.9 939.8 492.5C941.1 495.1 943.2 498.6 944.8 501.2C946.2 503.9 948.2 507.6 949.8 510.0C951.2 512.4 953.3 515.4 954.8 517.5C956.2 519.6 957.8 521.9 959.1 523.8C960.4 525.6 962.1 528.4 963.5 530.0C964.9 531.6 966.6 533.8 968.7 534.2C970.7 534.5 974.5 533.0 977.0 532.5C979.5 532.0 983.3 531.2 985.3 530.8C987.3 530.5 989.8 529.1 990.3 530.0C990.8 530.9 989.4 534.7 988.7 536.7C987.9 538.7 986.6 541.3 985.3 543.3C984.1 545.3 982.1 548.0 980.3 550.0C978.6 552.0 975.7 554.9 973.7 556.7C971.7 558.4 968.8 560.2 967.0 561.7C965.2 563.2 963.2 564.9 962.0 566.7C960.8 568.4 959.5 571.3 958.7 573.3C957.8 575.3 956.7 578.0 956.2 580.0C955.7 582.0 955.7 584.2 955.3 586.7C955.0 589.2 953.5 594.2 953.7 596.7C953.8 599.2 955.7 601.1 956.2 603.3C956.7 605.6 957.1 609.4 957.0 611.7C956.9 613.9 956.6 616.7 955.3 618.3C954.1 620.0 950.7 621.2 948.7 622.5C946.7 623.8 943.5 625.3 942.0 626.7C940.5 628.0 938.7 630.4 938.7 631.7C938.7 632.9 941.2 633.5 942.0 635.0C942.8 636.5 944.2 639.7 943.7 641.7C943.2 643.7 940.4 646.8 938.7 648.3C936.9 649.8 933.1 650.4 932.0 651.7C930.9 652.9 931.7 654.9 931.2 656.7C930.7 658.4 929.8 661.3 928.7 663.3C927.5 665.3 925.4 668.0 923.7 670.0C921.9 672.0 919.0 675.0 917.0 676.7C915.0 678.3 912.6 680.1 910.3 680.8C908.1 681.6 904.5 681.3 902.0 681.7C899.5 682.0 895.7 683.2 893.7 683.3C891.7 683.5 889.8 683.5 888.7 682.5C887.5 681.5 886.9 678.5 886.2 676.7C885.4 674.8 884.5 672.0 883.7 670.0C882.8 668.0 881.2 665.3 880.3 663.3C879.5 661.3 878.5 658.9 877.8 656.7C877.2 654.4 877.0 650.8 876.2 648.3C875.3 645.8 873.2 642.5 872.0 640.0C870.8 637.5 868.7 634.2 867.8 631.7C867.0 629.2 866.0 625.8 866.2 623.3C866.3 620.8 867.8 617.5 868.7 615.0C869.5 612.5 871.4 609.2 872.0 606.7C872.6 604.2 872.8 600.8 872.8 598.3C872.8 595.8 872.4 591.8 872.0 590.0C871.6 588.2 870.8 587.9 870.3 586.7C869.8 585.4 869.3 582.9 868.7 581.7C868.0 580.4 867.2 579.3 866.2 578.3C865.2 577.3 863.1 576.1 862.0 575.0C860.9 573.9 859.2 572.3 859.0 570.8C858.8 569.3 860.3 566.9 860.3 565.0C860.4 563.1 860.2 560.1 859.5 558.3C858.8 556.6 857.0 554.1 855.3 553.3C853.7 552.6 850.4 554.0 848.7 553.3C846.9 552.7 845.7 550.0 843.7 549.2C841.7 548.3 838.1 547.6 835.3 547.5C832.6 547.4 828.3 547.7 825.3 548.3C822.3 549.0 818.1 551.2 815.3 551.7C812.6 552.2 809.2 552.0 807.0 551.7C804.8 551.3 802.6 550.4 800.3 549.2C798.1 547.9 794.5 545.1 792.0 543.3C789.5 541.6 785.7 539.5 783.7 537.5C781.6 535.5 779.5 532.4 778.3 530.0C777.1 527.6 776.1 524.2 775.7 521.7C775.2 519.2 775.1 516.1 775.3 513.3C775.5 510.6 776.4 506.1 777.0 503.3C777.6 500.6 778.8 497.5 779.5 495.0C780.2 492.5 781.4 488.7 782.0 486.7C782.6 484.7 782.7 483.2 783.7 481.7C784.7 480.2 787.0 478.2 788.7 476.7C790.3 475.1 793.1 472.8 794.5 471.2C795.9 469.7 797.1 467.9 798.2 466.2C799.4 464.6 800.9 461.9 802.0 460.0C803.1 458.1 804.7 455.5 805.8 453.8C806.8 452.0 807.8 448.8 808.9 448.1Z M1063.7 340.0C1068.7 318.2 1064.6 314.1 1065.3 308.3C1066.1 302.6 1067.2 302.7 1068.7 301.7C1070.2 300.7 1074.1 301.9 1075.3 301.7C1076.6 301.4 1077.8 300.8 1077.0 300.0C1076.2 299.2 1071.6 298.4 1070.3 296.7C1069.1 294.9 1068.4 290.6 1068.7 288.3C1068.9 286.1 1070.5 283.2 1072.0 281.7C1073.5 280.2 1076.2 279.3 1078.7 278.3C1081.2 277.3 1085.7 275.8 1088.7 275.0C1091.7 274.2 1096.2 274.3 1098.7 273.3C1101.2 272.3 1103.3 269.8 1105.3 268.3C1107.3 266.8 1109.5 264.6 1112.0 263.3C1114.5 262.1 1119.0 261.0 1122.0 260.0C1125.0 259.0 1129.0 257.3 1132.0 256.7C1135.0 256.0 1139.5 256.3 1142.0 255.8C1144.5 255.3 1147.2 254.5 1148.7 253.3C1150.2 252.2 1150.2 249.3 1152.0 248.3C1153.8 247.3 1158.1 246.2 1160.3 246.7C1162.6 247.2 1164.8 250.5 1167.0 251.7C1169.2 252.8 1172.6 253.4 1175.3 254.2C1178.1 254.9 1183.3 255.8 1185.3 256.7C1187.3 257.5 1188.7 258.9 1188.7 260.0C1188.7 261.1 1186.8 262.9 1185.3 264.2C1183.8 265.4 1180.7 267.2 1178.7 268.3C1176.7 269.5 1174.2 270.4 1172.0 271.7C1169.8 272.9 1163.7 276.4 1163.7 276.7C1163.7 276.9 1169.2 274.1 1172.0 273.3C1174.8 272.6 1179.0 271.7 1182.0 271.7C1185.0 271.7 1189.0 272.8 1192.0 273.3C1195.0 273.8 1199.5 274.5 1202.0 275.0C1204.5 275.5 1206.2 276.7 1208.7 276.7C1211.2 276.7 1216.4 275.6 1218.7 275.0C1220.9 274.4 1221.7 272.5 1223.7 272.5C1225.7 272.5 1229.8 273.9 1232.0 275.0C1234.2 276.1 1237.9 278.5 1238.7 280.0C1239.4 281.5 1236.5 283.8 1237.0 285.0C1237.5 286.2 1240.2 288.3 1242.0 288.3C1243.8 288.3 1246.7 285.2 1248.7 285.0C1250.7 284.8 1252.8 286.7 1255.3 286.7C1257.8 286.7 1262.8 285.8 1265.3 285.0C1267.8 284.2 1270.0 282.7 1272.0 281.7C1274.0 280.7 1276.4 278.6 1278.7 278.3C1280.9 278.1 1285.0 279.2 1287.0 280.0C1289.0 280.8 1290.2 282.6 1292.0 283.3C1293.8 284.1 1296.2 284.2 1298.7 285.0C1301.2 285.8 1305.7 287.6 1308.7 288.3C1311.7 289.1 1315.7 289.9 1318.7 290.0C1321.7 290.1 1325.9 288.9 1328.7 289.2C1331.4 289.4 1335.0 290.5 1337.0 291.7C1339.0 292.8 1340.2 295.7 1342.0 296.7C1343.8 297.7 1346.2 298.3 1348.7 298.3C1351.2 298.3 1356.2 297.2 1358.7 296.7C1361.2 296.2 1363.3 295.2 1365.3 295.0C1367.3 294.8 1369.0 294.8 1372.0 295.0C1375.0 295.2 1381.8 296.2 1385.3 296.7C1388.8 297.2 1392.6 297.6 1395.3 298.3C1398.1 299.1 1401.4 300.4 1403.7 301.7C1405.9 302.9 1408.1 305.4 1410.3 306.7C1412.6 307.9 1416.2 309.0 1418.7 310.0C1421.2 311.0 1424.4 312.2 1427.0 313.3C1429.6 314.5 1435.7 316.2 1436.2 317.5C1436.7 318.8 1432.0 320.5 1430.3 321.7C1428.7 322.8 1426.8 324.6 1425.3 325.0C1423.8 325.4 1422.1 324.9 1420.3 324.2C1418.6 323.4 1415.7 321.0 1413.7 320.0C1411.7 319.0 1408.8 317.2 1407.0 317.5C1405.2 317.8 1403.5 320.5 1402.0 321.7C1400.5 322.8 1397.1 323.5 1397.0 325.0C1396.9 326.5 1401.2 330.2 1401.2 331.7C1401.2 333.2 1398.9 334.0 1397.0 335.0C1395.1 336.0 1391.2 337.3 1388.7 338.3C1386.2 339.3 1382.8 340.7 1380.3 341.7C1377.8 342.7 1374.5 344.2 1372.0 345.0C1369.5 345.8 1366.2 345.9 1363.7 346.7C1361.2 347.4 1357.3 349.0 1355.3 350.0C1353.3 351.0 1351.6 352.1 1350.3 353.3C1349.1 354.6 1347.1 356.8 1347.0 358.3C1346.9 359.8 1349.5 361.8 1349.5 363.3C1349.5 364.8 1348.1 366.8 1347.0 368.3C1345.9 369.8 1343.5 371.8 1342.0 373.3C1340.5 374.8 1338.5 376.8 1337.0 378.3C1335.5 379.8 1333.4 381.8 1332.0 383.3C1330.6 384.8 1328.8 388.6 1327.8 388.3C1326.8 388.1 1325.8 383.9 1325.3 381.7C1324.8 379.4 1324.4 375.8 1324.5 373.3C1324.6 370.8 1325.3 367.2 1326.2 365.0C1327.0 362.8 1328.7 360.1 1330.3 358.3C1332.0 356.6 1335.0 355.1 1337.0 353.3C1339.0 351.6 1341.9 348.4 1343.7 346.7C1345.4 344.9 1347.7 343.2 1348.7 341.7C1349.7 340.2 1350.8 337.2 1350.3 336.7C1349.8 336.2 1347.1 337.3 1345.3 338.3C1343.6 339.3 1340.7 342.8 1338.7 343.3C1336.7 343.8 1334.0 341.4 1332.0 341.7C1330.0 341.9 1326.8 343.8 1325.3 345.0C1323.8 346.2 1323.5 349.0 1322.0 350.0C1320.5 351.0 1317.3 351.7 1315.3 351.7C1313.3 351.7 1310.7 350.0 1308.7 350.0C1306.7 350.0 1304.2 351.2 1302.0 351.7C1299.8 352.2 1295.9 352.8 1293.7 353.3C1291.4 353.8 1289.2 354.2 1287.0 355.0C1284.8 355.8 1280.9 357.1 1278.7 358.3C1276.4 359.6 1274.0 361.8 1272.0 363.3C1270.0 364.8 1267.1 367.0 1265.3 368.3C1263.6 369.7 1260.3 371.8 1260.3 372.5C1260.3 373.2 1263.6 373.0 1265.3 373.3C1267.1 373.7 1270.2 374.0 1272.0 375.0C1273.8 376.0 1276.1 378.0 1277.0 380.0C1277.9 382.0 1278.1 385.8 1277.8 388.3C1277.6 390.8 1276.5 394.2 1275.3 396.7C1274.2 399.2 1272.1 402.8 1270.3 405.0C1268.6 407.2 1265.7 409.9 1263.7 411.7C1261.7 413.4 1259.0 415.2 1257.0 416.7C1255.0 418.2 1252.3 420.4 1250.3 421.7C1248.3 422.9 1245.7 423.8 1243.7 425.0C1241.7 426.2 1238.8 428.5 1237.0 430.0C1235.2 431.5 1232.2 433.8 1232.0 435.0C1231.8 436.2 1234.3 437.1 1235.3 438.3C1236.3 439.6 1238.3 441.6 1238.7 443.3C1239.0 445.1 1238.8 448.6 1237.8 450.0C1236.8 451.4 1233.4 453.0 1232.0 452.5C1230.6 452.0 1229.4 448.3 1228.7 446.7C1227.9 445.0 1228.0 442.9 1227.0 441.7C1226.0 440.4 1223.5 438.6 1222.0 438.3C1220.5 438.1 1218.2 439.2 1217.0 440.0C1215.8 440.8 1214.9 443.3 1213.7 443.3C1212.4 443.3 1208.4 441.2 1208.7 440.0C1208.9 438.8 1214.6 436.4 1215.3 435.0C1216.1 433.6 1214.9 431.1 1213.7 430.8C1212.4 430.6 1208.8 432.5 1207.0 433.3C1205.2 434.2 1202.2 435.4 1202.0 436.7C1201.8 437.9 1204.1 440.2 1205.3 441.7C1206.6 443.2 1209.8 444.9 1210.3 446.7C1210.8 448.4 1208.4 451.3 1208.7 453.3C1208.9 455.3 1211.0 458.0 1212.0 460.0C1213.0 462.0 1215.1 464.7 1215.3 466.7C1215.6 468.7 1214.4 471.6 1213.7 473.3C1212.9 475.1 1211.3 476.6 1210.3 478.3C1209.3 480.1 1208.2 483.0 1207.0 485.0C1205.8 487.0 1203.8 490.2 1202.0 491.7C1200.2 493.2 1197.3 494.2 1195.3 495.0C1193.3 495.8 1190.7 495.9 1188.7 496.7C1186.7 497.4 1184.0 499.0 1182.0 500.0C1180.0 501.0 1176.8 502.3 1175.3 503.3C1173.8 504.3 1173.2 506.4 1172.0 506.7C1170.8 506.9 1168.5 505.0 1167.0 505.0C1165.5 505.0 1162.2 505.7 1162.0 506.7C1161.8 507.7 1164.3 510.2 1165.3 511.7C1166.3 513.2 1167.7 514.9 1168.7 516.7C1169.7 518.4 1171.8 521.3 1172.0 523.3C1172.2 525.3 1170.2 530.5 1170.3 530.0C1170.5 529.5 1172.3 521.0 1172.8 520.0C1173.3 519.0 1174.0 521.8 1173.7 523.3C1173.3 524.8 1171.6 528.2 1170.3 530.0C1169.1 531.8 1166.6 533.5 1165.3 535.0C1164.1 536.5 1163.0 540.0 1162.0 540.0C1161.0 540.0 1160.2 536.8 1158.7 535.0C1157.2 533.2 1154.0 529.8 1152.0 528.3C1150.0 526.8 1147.1 525.2 1145.3 525.0C1143.6 524.8 1141.2 525.9 1140.3 526.7C1139.5 527.4 1139.5 528.0 1139.5 530.0C1139.5 532.0 1139.6 537.5 1140.3 540.0C1141.1 542.5 1143.2 544.9 1144.5 546.7C1145.8 548.4 1147.3 549.9 1148.7 551.7C1150.0 553.4 1152.4 556.5 1153.7 558.3C1154.9 560.2 1156.8 563.2 1157.0 564.2C1157.2 565.2 1156.3 565.6 1155.3 565.0C1154.3 564.4 1151.7 561.5 1150.3 560.0C1149.0 558.5 1147.4 556.8 1146.2 555.0C1144.9 553.2 1143.1 550.3 1142.0 548.3C1140.9 546.3 1139.3 544.2 1138.7 541.7C1138.0 539.2 1137.6 532.9 1137.8 531.7C1138.1 530.4 1140.2 534.1 1140.3 533.3C1140.5 532.6 1139.4 528.9 1138.7 526.7C1137.9 524.4 1136.3 520.3 1135.3 518.3C1134.3 516.3 1133.2 513.8 1132.0 513.3C1130.8 512.8 1128.0 515.5 1127.0 515.0C1126.0 514.5 1126.1 512.0 1125.3 510.0C1124.6 508.0 1123.1 503.9 1122.0 501.7C1120.9 499.4 1119.3 495.8 1117.8 495.0C1116.3 494.2 1114.1 496.2 1112.0 496.7C1109.9 497.2 1106.2 498.3 1103.7 498.3C1101.2 498.3 1096.6 496.4 1095.3 496.7C1094.1 496.9 1096.3 498.8 1095.3 500.0C1094.3 501.2 1090.5 503.5 1088.7 505.0C1086.8 506.5 1084.0 508.2 1082.8 510.0C1081.7 511.8 1080.8 514.7 1081.2 516.7C1081.5 518.7 1084.9 521.1 1085.3 523.3C1085.8 525.6 1084.7 529.4 1084.0 531.7C1083.3 533.9 1081.7 536.8 1080.7 538.3C1079.7 539.9 1078.4 542.0 1077.3 542.0C1076.3 542.0 1074.7 540.1 1073.7 538.3C1072.6 536.5 1071.3 532.5 1070.3 530.0C1069.3 527.5 1068.0 524.2 1067.0 521.7C1066.0 519.2 1064.7 516.1 1063.7 513.3C1062.7 510.6 1061.0 505.6 1060.3 503.3C1059.7 501.1 1060.2 499.1 1059.5 498.3C1058.8 497.6 1057.0 499.1 1055.3 498.3C1053.7 497.6 1050.2 494.8 1048.7 493.3C1047.2 491.8 1046.8 489.6 1045.3 488.3C1043.8 487.1 1040.7 485.8 1038.7 485.0C1036.7 484.2 1033.0 488.1 1032.0 483.3C1031.0 478.6 1027.2 474.8 1032.0 453.3C1036.8 431.8 1058.7 361.8 1063.7 340.0Z M1197.0 682.5C1196.0 681.7 1193.0 681.9 1192.0 680.0C1191.0 678.1 1191.0 672.8 1190.3 670.0C1189.7 667.2 1188.5 664.2 1187.8 661.7C1187.2 659.2 1186.3 655.6 1186.2 653.3C1186.0 651.1 1186.1 648.4 1187.0 646.7C1187.9 644.9 1189.8 643.2 1192.0 641.7C1194.2 640.2 1199.0 637.9 1202.0 636.7C1205.0 635.4 1209.8 634.6 1212.0 633.3C1214.2 632.1 1215.8 629.8 1217.0 628.3C1218.2 626.8 1218.8 625.0 1220.3 623.3C1221.8 621.7 1225.5 618.9 1227.0 617.5C1228.5 616.1 1229.1 614.3 1230.3 614.2C1231.6 614.0 1233.8 616.8 1235.3 616.7C1236.8 616.5 1238.8 614.6 1240.3 613.3C1241.8 612.1 1243.8 609.2 1245.3 608.3C1246.8 607.5 1248.6 607.2 1250.3 607.5C1252.1 607.8 1255.2 609.8 1257.0 610.0C1258.8 610.2 1261.5 608.4 1262.0 609.2C1262.5 609.9 1259.8 613.4 1260.3 615.0C1260.8 616.6 1263.6 618.5 1265.3 620.0C1267.1 621.5 1270.4 624.5 1272.0 625.0C1273.6 625.5 1275.2 625.1 1276.2 623.3C1277.2 621.6 1278.0 616.1 1278.7 613.3C1279.3 610.6 1279.7 606.0 1280.3 605.0C1281.0 604.0 1282.2 605.2 1282.8 606.7C1283.5 608.2 1283.6 612.8 1284.5 615.0C1285.4 617.2 1287.5 619.4 1288.7 621.7C1289.8 623.9 1290.5 627.8 1292.0 630.0C1293.5 632.2 1296.7 634.7 1298.7 636.7C1300.7 638.7 1303.3 641.1 1305.3 643.3C1307.3 645.6 1310.5 649.2 1312.0 651.7C1313.5 654.2 1315.0 657.5 1315.3 660.0C1315.7 662.5 1315.0 665.6 1314.5 668.3C1314.0 671.0 1313.4 674.0 1312.0 678.0C1310.6 682.0 1307.3 691.2 1305.3 694.7C1303.3 698.2 1301.7 700.3 1298.7 701.3C1295.7 702.3 1288.8 702.1 1285.3 701.3C1281.8 700.6 1277.6 698.3 1275.3 696.3C1273.1 694.3 1272.1 689.8 1270.3 688.0C1268.6 686.2 1265.4 686.2 1263.7 684.7C1261.9 683.2 1260.9 679.5 1258.7 678.0C1256.4 676.5 1252.2 675.2 1248.7 674.7C1245.2 674.2 1239.3 674.2 1235.3 674.7C1231.3 675.2 1226.0 676.5 1222.0 678.0C1218.0 679.5 1212.2 683.6 1208.7 684.7C1205.2 685.8 1200.4 685.7 1198.7 685.3C1196.9 685.0 1198.0 683.3 1197.0 682.5Z" fill="#eae691" stroke="#7eb24f" stroke-width="2.600" stroke-linejoin="round"/>
<path d="M304.5 303.3C305.5 302.2 309.5 299.3 313.7 298.3C317.8 297.3 326.2 296.8 332.0 296.7C337.8 296.5 345.5 297.2 352.0 297.5C358.5 297.8 369.6 297.8 375.3 298.3C381.1 298.8 387.1 299.3 390.3 300.8C393.6 302.3 395.2 306.1 397.0 308.3C398.8 310.6 399.8 314.3 402.0 315.8C404.2 317.3 409.2 318.6 412.0 318.3C414.8 318.1 419.3 315.9 420.3 314.2C421.3 312.4 418.2 308.8 418.7 306.7C419.2 304.5 422.4 301.6 423.7 300.0C424.9 298.4 425.8 296.1 427.0 295.8C428.2 295.6 429.8 297.5 432.0 298.3C434.2 299.2 438.5 300.4 442.0 301.7C445.5 302.9 451.3 305.4 455.3 306.7C459.3 308.0 465.2 309.5 468.7 310.3C472.2 311.1 475.9 311.0 478.7 312.0C481.4 313.0 484.2 315.8 487.0 317.0C489.8 318.2 493.8 319.8 497.0 320.3C500.2 320.8 504.9 320.6 508.7 320.3C512.4 320.0 518.0 318.9 522.0 318.3C526.0 317.8 531.8 317.2 535.3 316.7C538.8 316.2 542.8 316.2 545.3 315.0C547.8 313.8 550.5 310.8 552.0 308.3C553.5 305.9 553.6 300.2 555.3 298.7C557.1 297.2 562.2 297.1 563.7 298.3C565.2 299.5 566.1 304.4 565.3 306.7C564.6 308.9 561.2 311.5 558.7 313.3C556.2 315.1 551.2 317.2 548.7 318.7C546.2 320.2 545.0 322.4 542.0 323.3C539.0 324.3 532.7 324.5 528.7 325.0C524.7 325.5 518.8 325.9 515.3 326.7C511.8 327.4 505.8 328.0 505.3 330.0C504.8 332.0 509.5 337.5 512.0 340.0C514.5 342.5 520.2 344.2 522.0 346.7C523.8 349.2 524.0 353.7 524.0 356.7C524.0 359.7 520.8 364.2 522.0 366.7C523.2 369.2 528.5 371.8 532.0 373.3C535.5 374.8 541.8 375.2 545.3 376.7C548.8 378.2 552.8 381.3 555.3 383.3C557.8 385.3 559.5 388.8 562.0 390.0C564.5 391.2 569.0 392.7 572.0 391.7C575.0 390.7 580.2 386.6 582.0 383.3C583.8 380.1 584.0 374.0 584.0 370.0C584.0 366.0 581.7 359.7 582.0 356.7C582.3 353.7 584.7 351.2 586.2 350.0C587.7 348.8 590.1 347.8 592.0 348.3C593.9 348.8 596.7 351.5 598.7 353.3C600.7 355.2 603.6 360.2 605.3 360.8C607.1 361.5 608.7 357.9 610.3 357.5C612.0 357.1 614.5 359.3 616.2 358.3C617.8 357.3 619.5 350.8 621.2 350.8C622.8 350.8 625.1 356.0 627.0 358.3C628.9 360.7 631.4 364.3 633.7 366.7C635.9 369.0 639.9 372.0 642.0 374.2C644.1 376.3 646.9 379.2 647.8 380.8C648.8 382.5 649.0 384.0 648.3 385.0C647.7 386.0 645.6 386.6 643.7 387.5C641.7 388.4 638.1 390.2 635.3 390.8C632.6 391.5 628.3 391.0 625.3 391.7C622.3 392.3 618.1 394.0 615.3 395.0C612.6 396.0 609.2 396.8 607.0 398.3C604.8 399.8 602.1 403.0 600.3 405.0C598.6 407.0 596.6 409.7 595.3 411.7C594.1 413.7 593.0 416.3 592.0 418.3C591.0 420.3 589.7 423.2 588.7 425.0C587.7 426.8 586.8 428.5 585.3 430.0C583.8 431.5 579.7 433.2 578.7 435.0C577.7 436.8 579.2 439.4 578.7 441.7C578.2 443.9 576.8 447.8 575.3 450.0C573.8 452.2 570.9 455.3 568.7 456.7C566.4 458.0 562.8 459.0 560.3 459.2C557.8 459.3 554.2 458.1 552.0 457.5C549.8 456.9 546.6 455.9 545.3 455.0C544.1 454.1 542.7 453.2 543.7 451.7C544.7 450.2 550.2 447.2 552.0 445.0C553.8 442.8 555.1 438.2 555.3 436.7C555.6 435.2 554.9 435.9 553.7 435.0C552.4 434.1 549.0 431.3 547.0 430.8C545.0 430.3 541.6 430.8 540.3 431.7C539.1 432.5 539.7 434.7 538.7 436.7C537.7 438.7 535.7 443.0 533.7 445.0C531.7 447.0 526.1 448.8 525.3 450.0C524.6 451.2 528.7 452.1 528.7 453.3C528.7 454.6 526.8 456.6 525.3 458.3C523.8 460.1 520.4 462.2 518.7 465.0C516.9 467.8 514.9 472.9 513.7 476.7C512.4 480.4 510.6 486.8 510.3 490.0C510.1 493.2 511.0 495.8 512.0 498.3C513.0 500.8 516.2 504.7 517.0 506.7C517.8 508.7 518.2 511.4 517.0 511.7C515.8 511.9 510.9 509.8 508.7 508.3C506.4 506.8 503.8 503.7 502.0 501.7C500.2 499.7 498.5 497.2 497.0 495.0C495.5 492.8 494.0 489.2 492.0 486.7C490.0 484.2 485.4 480.8 483.7 478.3C481.9 475.8 481.3 472.1 480.3 470.0C479.3 467.9 478.8 465.2 477.0 464.2C475.2 463.2 471.4 464.1 468.7 463.3C465.9 462.6 461.4 460.9 458.7 459.2C455.9 457.4 452.2 454.3 450.3 451.7C448.5 449.0 447.8 444.9 446.2 441.7C444.5 438.4 440.8 433.2 439.5 430.0C438.2 426.8 438.1 422.0 437.8 420.0C437.6 418.0 438.0 418.7 437.8 416.7C437.7 414.7 437.9 409.2 437.0 406.7C436.1 404.2 433.8 402.0 432.0 400.0C430.2 398.0 427.1 395.3 425.3 393.3C423.6 391.3 421.8 388.9 420.3 386.7C418.8 384.4 416.6 380.8 415.3 378.3C414.1 375.8 413.5 372.2 412.0 370.0C410.5 367.8 407.3 365.3 405.3 363.3C403.3 361.3 400.9 358.7 398.7 356.7C396.4 354.7 393.8 352.0 390.3 350.0C386.8 348.0 378.6 344.5 375.3 343.3C372.1 342.2 370.9 343.0 368.7 342.5C366.4 342.0 362.8 341.1 360.3 340.0C357.8 338.9 354.2 336.5 352.0 335.0C349.8 333.5 347.3 330.5 345.3 330.0C343.3 329.5 340.2 330.4 338.7 331.7C337.2 332.9 336.8 336.6 335.3 338.3C333.8 340.1 330.7 342.8 328.7 343.3C326.7 343.8 324.0 342.7 322.0 341.7C320.0 340.7 316.6 338.4 315.3 336.7C314.1 334.9 313.2 331.8 313.7 330.0C314.2 328.2 316.4 326.5 318.7 325.0C320.9 323.5 326.7 321.2 328.7 320.0C330.7 318.8 332.5 317.3 332.0 316.7C331.5 316.0 327.8 315.8 325.3 315.8C322.8 315.8 317.6 317.0 315.3 316.7C313.1 316.3 310.8 314.6 310.3 313.3C309.8 312.1 312.5 309.5 312.0 308.3C311.5 307.2 308.1 306.6 307.0 305.8C305.9 305.1 303.5 304.5 304.5 303.3Z M563.7 273.3C565.8 272.8 573.2 273.5 577.0 275.0C580.8 276.5 585.2 281.1 588.7 283.3C592.2 285.6 597.1 288.2 600.3 290.0C603.6 291.8 609.1 293.5 610.3 295.0C611.6 296.5 607.9 298.8 608.7 300.0C609.4 301.2 612.8 301.8 615.3 303.3C617.8 304.8 623.0 308.5 625.3 310.0C627.7 311.5 630.9 312.1 631.2 313.3C631.4 314.6 628.6 317.3 627.0 318.3C625.4 319.3 622.1 320.5 620.3 320.0C618.6 319.5 616.8 317.0 615.3 315.0C613.8 313.0 612.3 308.9 610.3 306.7C608.3 304.4 604.8 301.8 602.0 300.0C599.2 298.2 595.0 296.8 592.0 295.0C589.0 293.2 585.0 289.8 582.0 288.3C579.0 286.8 574.8 285.8 572.0 285.0C569.2 284.2 565.0 284.3 563.7 283.3C562.3 282.3 562.8 279.8 562.8 278.3C562.8 276.8 561.5 273.8 563.7 273.3Z M608.7 323.3C610.4 321.6 618.3 321.2 620.3 321.7C622.3 322.2 622.2 325.2 622.0 326.7C621.8 328.2 619.8 330.0 618.7 331.7C617.5 333.3 616.0 337.2 614.5 337.5C613.0 337.8 609.5 335.5 608.7 333.3C607.8 331.2 606.9 325.1 608.7 323.3Z M604.5 401.3C605.8 400.0 611.1 399.8 613.7 399.7C616.2 399.5 620.6 399.6 621.7 400.5C622.7 401.4 621.6 404.5 620.7 405.8C619.7 407.2 617.0 408.4 615.3 409.7C613.7 410.9 611.0 413.0 609.5 414.2C608.0 415.3 606.5 417.5 605.3 417.5C604.2 417.5 602.0 415.5 602.0 414.2C602.0 412.8 605.0 410.3 605.3 408.3C605.7 406.4 603.2 402.6 604.5 401.3Z M625.7 410.0C628.0 408.9 633.5 407.3 635.3 407.2C637.2 407.0 638.7 407.9 638.2 408.8C637.7 409.8 634.3 412.6 632.0 413.7C629.7 414.8 624.7 416.1 622.8 416.2C621.0 416.2 619.1 415.1 619.5 414.2C619.9 413.2 623.3 411.1 625.7 410.0Z M645.3 396.7C645.8 395.5 648.8 394.6 650.3 395.0C651.8 395.4 654.3 398.0 655.3 399.2C656.3 400.4 657.5 402.2 657.0 403.0C656.5 403.8 653.5 404.2 652.0 404.2C650.5 404.1 648.0 403.6 647.0 402.5C646.0 401.4 644.8 397.8 645.3 396.7Z M623.7 596.7C624.2 594.8 629.8 595.2 632.0 594.2C634.2 593.2 636.7 590.4 638.7 590.0C640.7 589.6 643.6 592.2 645.3 591.7C647.1 591.2 648.3 587.9 650.3 586.7C652.3 585.4 656.2 584.3 658.7 583.3C661.2 582.3 665.0 579.6 667.0 580.0C669.0 580.4 670.6 585.6 672.0 585.8C673.4 586.1 674.7 582.8 676.2 581.7C677.7 580.5 680.4 578.1 682.0 578.3C683.6 578.6 685.5 582.3 687.0 583.3C688.5 584.3 691.0 583.9 692.0 585.0C693.0 586.1 692.7 590.3 693.7 590.8C694.7 591.3 697.4 589.2 698.7 588.3C699.9 587.5 701.0 584.6 702.0 585.0C703.0 585.4 704.1 590.3 705.3 590.8C706.6 591.3 709.1 589.1 710.3 588.3C711.6 587.6 712.8 585.3 713.7 585.8C714.5 586.3 716.4 589.8 716.2 591.7C715.9 593.5 713.6 596.1 712.0 598.3C710.4 600.6 706.8 604.7 705.3 606.7C703.8 608.7 703.1 609.9 702.0 611.7C700.9 613.4 698.8 616.1 697.8 618.3C696.8 620.6 695.5 624.4 695.3 626.7C695.2 628.9 697.5 631.1 697.0 633.3C696.5 635.6 694.2 640.1 692.0 641.7C689.8 643.2 684.8 642.7 682.0 643.7C679.2 644.7 675.7 646.4 673.7 648.3C671.7 650.3 669.7 654.3 668.7 656.7C667.7 659.0 668.5 662.9 667.0 664.2C665.5 665.4 661.2 665.6 658.7 665.0C656.2 664.4 651.1 661.8 650.3 660.0C649.6 658.2 653.7 655.3 653.7 653.3C653.7 651.3 651.7 648.4 650.3 646.7C649.0 644.9 645.8 642.9 644.5 641.7C643.2 640.4 641.8 640.1 642.0 638.3C642.2 636.6 644.9 632.0 646.2 630.0C647.4 628.0 650.3 626.8 650.3 625.0C650.3 623.2 647.9 619.1 646.2 618.3C644.4 617.6 640.0 618.8 638.7 620.0C637.3 621.2 638.2 624.8 637.0 626.7C635.8 628.5 631.6 632.5 630.3 632.5C629.1 632.5 628.7 629.0 628.7 626.7C628.7 624.3 630.3 619.7 630.3 616.7C630.3 613.7 629.7 609.7 628.7 606.7C627.7 603.7 623.2 598.5 623.7 596.7Z M593.7 551.7C595.4 550.3 599.5 549.5 602.0 549.2C604.5 548.8 609.2 547.8 610.3 549.2C611.5 550.5 610.2 556.5 609.5 558.3C608.8 560.2 607.5 561.1 605.3 561.7C603.2 562.2 597.6 561.2 595.3 562.0C593.1 562.8 590.8 564.7 590.3 566.7C589.8 568.6 590.5 573.0 592.0 575.0C593.5 577.0 599.8 578.5 600.3 580.0C600.8 581.5 596.8 583.2 595.3 585.0C593.8 586.8 590.8 589.4 590.3 591.7C589.8 593.9 590.5 598.2 592.0 600.0C593.5 601.8 597.6 603.1 600.3 603.3C603.1 603.6 607.6 601.7 610.3 601.7C613.1 601.7 615.9 602.6 618.7 603.3C621.4 604.1 626.9 604.7 628.7 606.7C630.4 608.7 630.3 613.7 630.3 616.7C630.3 619.7 628.7 624.3 628.7 626.7C628.7 629.0 630.8 631.0 630.3 632.5C629.8 634.0 625.6 635.0 625.3 636.7C625.1 638.3 628.7 641.1 628.7 643.3C628.7 645.6 626.6 649.2 625.3 651.7C624.1 654.2 620.8 657.2 620.3 660.0C619.8 662.8 622.8 667.0 622.0 670.0C621.2 673.0 616.6 677.0 615.3 680.0C614.1 683.0 614.2 687.3 613.7 690.0C613.2 692.7 611.2 695.3 612.0 698.0C612.8 700.7 618.4 705.2 618.7 708.0C618.9 710.8 614.2 713.6 613.7 716.3C613.2 719.1 615.8 723.3 615.3 726.3C614.8 729.3 610.8 733.3 610.3 736.3C609.8 739.3 612.2 743.3 612.0 746.3C611.8 749.3 608.7 753.8 608.7 756.3C608.7 758.8 612.5 761.4 612.0 763.0C611.5 764.6 607.8 766.3 605.3 766.7C602.8 767.0 597.5 766.6 595.3 765.3C593.2 764.0 592.1 761.1 591.0 758.0C589.9 754.9 588.4 748.7 587.7 744.7C586.9 740.7 585.5 735.3 586.0 731.3C586.5 727.3 590.0 722.0 591.0 718.0C592.0 714.0 591.9 708.9 592.7 704.7C593.4 700.5 595.3 693.7 596.0 690.0C596.7 686.3 597.1 683.0 597.3 680.0C597.5 677.0 597.1 673.0 597.3 670.0C597.6 667.0 598.2 663.0 599.0 660.0C599.8 657.0 601.6 653.0 602.3 650.0C603.1 647.0 604.0 643.0 604.0 640.0C604.0 637.0 603.3 632.2 602.3 630.0C601.3 627.8 599.1 626.5 597.3 625.0C595.6 623.5 592.7 621.8 590.7 620.0C588.7 618.2 585.8 615.3 584.0 613.3C582.2 611.3 580.5 609.2 579.0 606.7C577.5 604.2 575.2 599.2 574.0 596.7C572.8 594.2 571.8 592.0 570.7 590.0C569.6 588.0 567.1 584.8 566.7 583.3C566.2 581.8 567.0 580.4 567.8 580.0C568.6 579.6 570.6 581.1 572.0 580.8C573.4 580.6 575.8 579.1 577.0 578.3C578.2 577.6 579.2 576.8 580.3 575.8C581.5 574.8 584.5 572.9 584.5 571.7C584.5 570.4 580.5 569.0 580.3 567.5C580.2 566.0 582.2 563.4 583.7 562.0C585.2 560.6 588.8 559.9 590.3 558.3C591.8 556.8 591.9 553.0 593.7 551.7Z M983.7 608.3C984.4 608.3 986.5 611.7 987.0 613.3C987.5 615.0 987.8 616.9 987.3 619.2C986.9 621.4 984.9 625.5 984.0 628.3C983.1 631.2 982.5 635.6 981.7 638.3C980.8 641.0 979.5 644.5 978.3 646.3C977.1 648.2 974.9 650.5 973.7 650.8C972.5 651.1 971.1 650.0 970.3 648.3C969.6 646.7 968.5 642.5 968.7 640.0C968.8 637.5 970.4 634.2 971.2 631.7C971.9 629.2 972.5 625.3 973.7 623.3C974.8 621.3 977.4 619.8 978.7 618.3C979.9 616.8 981.2 614.8 982.0 613.3C982.8 611.8 982.9 608.3 983.7 608.3Z M847.0 336.7C848.4 334.9 853.1 333.2 855.3 331.7C857.6 330.2 860.2 328.7 862.0 326.7C863.8 324.7 865.5 320.8 867.0 318.3C868.5 315.8 870.5 312.2 872.0 310.0C873.5 307.8 875.0 305.1 877.0 303.3C879.0 301.6 882.6 299.6 885.3 298.3C888.1 297.1 892.3 296.0 895.3 295.0C898.3 294.0 902.6 291.9 905.3 291.7C908.1 291.4 913.2 292.1 913.7 293.3C914.2 294.6 910.4 298.2 908.7 300.0C906.9 301.8 903.8 303.2 902.0 305.0C900.2 306.8 898.5 309.9 897.0 311.7C895.5 313.4 893.2 314.9 892.0 316.7C890.8 318.4 890.2 321.3 888.7 323.3C887.2 325.3 883.8 328.0 882.0 330.0C880.2 332.0 878.5 334.7 877.0 336.7C875.5 338.7 872.2 341.6 872.0 343.3C871.8 345.1 875.8 347.3 875.3 348.3C874.8 349.3 870.9 349.2 868.7 350.0C866.4 350.8 862.6 352.6 860.3 353.3C858.1 354.1 855.4 355.5 853.7 355.0C851.9 354.5 849.8 351.8 848.7 350.0C847.5 348.2 846.4 345.3 846.2 343.3C845.9 341.3 845.6 338.4 847.0 336.7Z M920.3 298.3C922.1 296.8 928.6 294.8 930.3 295.0C932.1 295.2 932.8 298.2 932.0 300.0C931.2 301.8 926.6 304.2 925.3 306.7C924.1 309.2 923.2 314.2 923.7 316.7C924.2 319.2 927.4 321.3 928.7 323.3C929.9 325.3 932.5 328.8 932.0 330.0C931.5 331.2 927.3 331.7 925.3 331.7C923.3 331.7 919.9 331.5 918.7 330.0C917.4 328.5 916.8 324.2 917.0 321.7C917.2 319.2 920.1 315.8 920.3 313.3C920.6 310.8 918.7 307.2 918.7 305.0C918.7 302.8 918.6 299.8 920.3 298.3Z M938.7 305.0C940.2 304.0 945.9 303.1 948.7 303.3C951.4 303.6 955.5 305.4 957.0 306.7C958.5 307.9 959.7 310.5 958.7 311.7C957.7 312.8 952.8 313.8 950.3 314.2C947.8 314.5 943.8 314.8 942.0 314.2C940.2 313.5 939.2 311.4 938.7 310.0C938.2 308.6 937.2 306.0 938.7 305.0Z M1038.7 303.3C1040.7 301.2 1042.2 304.3 1042.0 305.8C1041.8 307.3 1038.5 311.5 1037.0 313.3C1035.5 315.2 1032.5 316.6 1032.0 318.3C1031.5 320.1 1033.9 323.5 1033.7 325.0C1033.4 326.5 1031.8 327.6 1030.3 328.3C1028.8 329.1 1025.2 328.8 1023.7 330.0C1022.2 331.2 1020.6 334.2 1020.3 336.7C1020.1 339.2 1022.0 343.7 1022.0 346.7C1022.0 349.7 1020.3 353.7 1020.3 356.7C1020.3 359.7 1021.0 364.2 1022.0 366.7C1023.0 369.2 1027.0 371.8 1027.0 373.3C1027.0 374.8 1023.8 377.2 1022.0 376.7C1020.2 376.2 1016.8 372.0 1015.3 370.0C1013.8 368.0 1012.0 365.3 1012.0 363.3C1012.0 361.3 1015.1 359.2 1015.3 356.7C1015.6 354.2 1013.7 349.7 1013.7 346.7C1013.7 343.7 1014.8 339.4 1015.3 336.7C1015.8 333.9 1016.0 330.3 1017.0 328.3C1018.0 326.3 1020.2 324.6 1022.0 323.3C1023.8 322.1 1026.2 323.0 1028.7 320.0C1031.2 317.0 1036.7 305.5 1038.7 303.3Z M928.7 371.7C929.4 369.4 934.8 368.7 935.3 366.7C935.8 364.7 932.0 359.8 932.0 358.3C932.0 356.8 934.1 355.7 935.3 356.7C936.6 357.7 938.6 363.5 940.3 365.0C942.1 366.5 946.2 365.4 947.0 366.7C947.8 367.9 944.8 371.8 945.3 373.3C945.8 374.8 949.1 375.4 950.3 376.7C951.6 377.9 953.9 380.2 953.7 381.7C953.4 383.2 949.7 385.2 948.7 386.7C947.7 388.2 948.2 391.4 947.0 391.7C945.8 391.9 942.1 389.6 940.3 388.3C938.6 387.1 936.8 384.3 935.3 383.3C933.8 382.3 931.3 383.4 930.3 381.7C929.3 379.9 927.9 373.9 928.7 371.7Z M967.0 375.0C967.5 373.0 971.0 369.8 972.0 370.0C973.0 370.2 972.7 375.9 973.7 376.7C974.7 377.4 977.4 376.0 978.7 375.0C979.9 374.0 981.2 369.5 982.0 370.0C982.8 370.5 984.2 376.3 983.7 378.3C983.2 380.3 980.2 382.3 978.7 383.3C977.2 384.3 974.7 384.0 973.7 385.0C972.7 386.0 972.8 390.2 972.0 390.0C971.2 389.8 969.4 385.6 968.7 383.3C967.9 381.1 966.5 377.0 967.0 375.0Z M855.3 388.3C857.3 387.3 860.0 385.0 862.0 385.0C864.0 385.0 867.2 387.1 868.7 388.3C870.2 389.6 872.0 391.8 872.0 393.3C872.0 394.8 868.2 397.3 868.7 398.3C869.2 399.3 873.3 400.2 875.3 400.0C877.3 399.8 880.0 398.4 882.0 396.7C884.0 394.9 886.7 390.1 888.7 388.3C890.7 386.6 893.8 384.8 895.3 385.0C896.8 385.2 897.2 388.8 898.7 390.0C900.2 391.2 903.1 393.3 905.3 393.3C907.6 393.3 911.2 390.2 913.7 390.0C916.2 389.8 920.2 390.7 922.0 391.7C923.8 392.7 925.8 395.4 925.3 396.7C924.8 397.9 920.2 398.5 918.7 400.0C917.2 401.5 916.6 404.7 915.3 406.7C914.1 408.7 912.1 412.6 910.3 413.3C908.6 414.1 904.9 412.9 903.7 411.7C902.4 410.4 901.8 406.8 902.0 405.0C902.2 403.2 905.8 401.0 905.3 400.0C904.8 399.0 900.7 398.1 898.7 398.3C896.7 398.6 894.0 400.9 892.0 401.7C890.0 402.4 887.3 402.8 885.3 403.3C883.3 403.8 880.7 405.0 878.7 405.0C876.7 405.0 874.0 403.8 872.0 403.3C870.0 402.8 867.1 402.4 865.3 401.7C863.6 400.9 862.1 399.1 860.3 398.3C858.6 397.6 855.4 396.4 853.7 396.7C851.9 396.9 849.9 398.8 848.7 400.0C847.4 401.2 846.8 403.8 845.3 405.0C843.8 406.2 840.2 406.8 838.7 408.3C837.2 409.8 836.1 415.2 835.3 415.0C834.6 414.8 833.2 408.9 833.7 406.7C834.2 404.4 837.2 402.0 838.7 400.0C840.2 398.0 842.2 394.6 843.7 393.3C845.2 392.1 846.9 392.4 848.7 391.7C850.4 390.9 853.3 389.3 855.3 388.3Z M799.5 420.0C800.4 419.0 804.4 418.3 807.0 418.1C809.6 417.9 814.4 418.4 817.0 418.8C819.6 419.1 822.2 420.1 824.5 420.6C826.8 421.2 829.9 421.9 832.0 422.5C834.1 423.1 837.5 423.5 838.2 424.4C839.0 425.2 837.9 427.2 837.0 428.1C836.1 429.1 833.3 429.6 832.0 430.6C830.7 431.7 829.1 433.6 828.2 435.0C827.4 436.4 827.1 438.8 826.4 440.0C825.6 441.2 824.7 442.5 823.2 443.1C821.8 443.8 818.9 443.9 817.0 444.4C815.1 444.8 812.2 446.2 810.8 446.2C809.2 446.2 807.7 445.3 807.0 444.4C806.3 443.4 806.6 441.8 806.4 440.0C806.2 438.2 805.6 434.8 805.8 432.5C805.9 430.2 808.4 426.1 807.6 425.0C806.9 423.9 802.0 425.8 800.8 425.0C799.5 424.2 798.6 421.0 799.5 420.0Z M869.5 416.2C870.2 416.2 872.1 418.8 873.2 420.0C874.4 421.2 875.7 423.2 877.0 424.4C878.3 425.6 880.8 427.2 882.0 428.1C883.2 429.1 885.1 430.1 885.1 430.6C885.1 431.2 882.6 431.2 882.0 431.9C881.4 432.5 881.9 435.0 881.4 435.0C880.8 435.0 879.3 432.7 878.2 431.9C877.2 431.0 875.4 430.4 874.5 429.4C873.6 428.3 872.8 426.3 872.0 425.0C871.2 423.7 869.2 421.9 868.9 420.6C868.5 419.3 868.8 416.3 869.5 416.2Z M877.0 410.0C877.8 408.9 881.9 407.3 884.5 407.5C887.1 407.7 891.9 410.1 894.5 411.2C897.1 412.4 899.8 414.2 902.0 415.0C904.2 415.8 907.4 415.7 909.5 416.2C911.6 416.8 915.0 417.4 915.8 418.8C916.5 420.1 915.2 423.5 914.5 425.0C913.8 426.5 912.2 428.2 910.8 428.8C909.2 429.3 906.0 428.4 904.5 428.8C903.0 429.1 901.6 430.1 900.8 431.2C899.9 432.4 899.0 434.6 898.9 436.2C898.8 437.9 900.4 441.9 900.1 442.5C899.8 443.1 897.8 441.1 897.0 440.0C896.2 438.9 895.2 436.5 894.5 435.0C893.8 433.5 892.9 431.5 892.0 430.0C891.1 428.5 889.6 426.5 888.2 425.0C886.9 423.5 884.7 421.5 883.2 420.0C881.8 418.5 879.8 416.5 878.9 415.0C877.9 413.5 876.2 411.1 877.0 410.0Z M918.2 430.0C919.1 429.0 921.8 427.5 923.2 426.9C924.8 426.2 926.6 426.0 928.2 425.6C929.9 425.2 932.4 424.3 934.5 424.4C936.6 424.5 939.8 425.9 942.0 426.2C944.2 426.6 947.2 426.8 949.5 426.9C951.8 427.0 955.4 427.2 957.0 426.9C958.6 426.6 958.8 425.8 960.1 425.0C961.4 424.2 964.0 422.2 965.8 421.2C967.5 420.3 970.1 419.9 972.0 418.8C973.9 417.6 976.9 413.6 978.2 413.8C979.6 413.9 979.8 418.3 980.8 420.0C981.7 421.7 983.6 423.3 984.5 425.0C985.4 426.7 986.8 429.4 987.0 431.2C987.2 433.1 985.4 435.8 985.8 437.5C986.1 439.2 988.2 441.6 989.5 442.5C990.8 443.4 993.2 444.1 994.5 443.8C995.8 443.4 997.1 440.9 998.2 440.0C999.4 439.1 1000.7 438.1 1002.0 437.5C1003.3 436.9 1005.0 435.9 1007.0 436.2C1009.0 436.6 1012.6 439.2 1015.3 440.0C1018.1 440.8 1022.3 441.7 1025.3 441.7C1028.3 441.7 1032.8 441.2 1035.3 440.0C1037.8 438.8 1040.0 435.3 1042.0 433.3C1044.0 431.3 1047.7 421.2 1048.7 426.7C1049.7 432.2 1048.9 462.8 1048.7 470.0C1048.4 477.2 1047.0 473.5 1047.0 475.0C1047.0 476.5 1048.9 478.0 1048.7 480.0C1048.4 482.0 1046.8 487.6 1045.3 488.3C1043.8 489.1 1040.7 485.8 1038.7 485.0C1036.7 484.2 1034.2 483.3 1032.0 483.3C1029.8 483.3 1026.2 485.0 1023.7 485.0C1021.2 485.0 1017.8 483.8 1015.3 483.3C1012.8 482.8 1007.8 481.2 1007.0 481.7C1006.2 482.2 1009.1 485.4 1010.3 486.7C1011.6 487.9 1014.1 488.8 1015.3 490.0C1016.6 491.2 1018.9 493.2 1018.7 495.0C1018.4 496.8 1015.4 499.7 1013.7 501.7C1011.9 503.7 1009.2 506.6 1007.0 508.3C1004.8 510.1 1001.4 511.8 998.7 513.3C995.9 514.8 991.7 516.8 988.7 518.3C985.7 519.8 981.4 522.1 978.7 523.3C975.9 524.6 971.7 525.9 970.3 526.7C969.0 527.5 970.0 529.0 969.5 528.8C969.0 528.5 968.1 526.5 967.2 525.0C966.4 523.5 964.6 520.6 963.5 518.8C962.4 516.9 961.1 514.6 959.8 512.5C958.4 510.4 956.2 507.4 954.8 505.0C953.2 502.6 951.2 498.9 949.8 496.2C948.2 493.6 946.1 489.9 944.8 487.5C943.4 485.1 942.0 482.1 941.0 480.0C940.0 477.9 938.6 475.1 938.2 473.8C937.9 472.4 939.0 472.4 938.9 471.2C938.8 470.1 937.6 467.4 937.6 466.2C937.6 465.1 938.5 464.9 938.9 463.8C939.2 462.6 939.8 460.4 940.1 458.8C940.5 457.1 941.1 454.2 941.4 452.5C941.7 450.8 942.1 448.7 942.0 447.5C941.9 446.3 941.5 444.6 940.8 444.4C940.0 444.2 938.3 446.1 937.0 446.2C935.7 446.4 933.7 446.0 932.0 445.6C930.3 445.2 927.4 444.4 925.8 443.8C924.1 443.1 921.7 442.2 920.8 441.2C919.8 440.3 920.0 438.6 919.5 437.5C919.0 436.4 917.8 434.9 917.6 433.8C917.4 432.6 917.4 431.0 918.2 430.0Z M995.3 373.3C996.3 371.8 1002.3 370.5 1005.3 370.0C1008.3 369.5 1012.8 369.0 1015.3 370.0C1017.8 371.0 1020.2 376.2 1022.0 376.7C1023.8 377.2 1025.0 374.1 1027.0 373.3C1029.0 372.6 1032.1 372.2 1035.3 371.7C1038.6 371.2 1044.2 370.0 1048.7 370.0C1053.2 370.0 1061.3 371.2 1065.3 371.7C1069.3 372.2 1073.8 364.6 1075.3 373.3C1076.8 382.1 1079.3 421.5 1075.3 430.0C1071.3 438.5 1053.2 433.0 1048.7 430.0C1044.2 427.0 1046.3 414.5 1045.3 410.0C1044.3 405.5 1043.2 402.5 1042.0 400.0C1040.8 397.5 1038.0 395.3 1037.0 393.3C1036.0 391.3 1036.1 387.4 1035.3 386.7C1034.6 385.9 1033.0 386.8 1032.0 388.3C1031.0 389.8 1030.2 394.4 1028.7 396.7C1027.2 398.9 1024.0 402.8 1022.0 403.3C1020.0 403.8 1017.1 401.8 1015.3 400.0C1013.6 398.2 1011.8 393.9 1010.3 391.7C1008.8 389.4 1007.1 386.8 1005.3 385.0C1003.6 383.2 1000.2 381.8 998.7 380.0C997.2 378.2 994.3 374.8 995.3 373.3Z M1130.3 552.5C1130.6 552.2 1132.2 552.9 1133.7 554.2C1135.2 555.4 1138.5 558.7 1140.3 560.8C1142.2 563.0 1144.7 566.2 1146.2 568.3C1147.7 570.5 1150.1 574.1 1150.3 575.0C1150.6 575.9 1149.1 575.3 1147.8 574.2C1146.6 573.0 1143.8 569.6 1142.0 567.5C1140.2 565.4 1137.7 561.8 1136.2 560.0C1134.7 558.2 1132.9 557.0 1132.0 555.8C1131.1 554.7 1130.1 552.8 1130.3 552.5Z M1163.7 590.8C1163.9 590.5 1168.1 590.8 1170.3 591.3C1172.6 591.8 1177.7 593.6 1178.7 594.2C1179.7 594.7 1178.5 595.1 1177.0 595.0C1175.5 594.9 1170.7 594.0 1168.7 593.3C1166.7 592.7 1163.4 591.1 1163.7 590.8Z M1175.3 565.8C1175.8 564.8 1180.0 564.8 1182.0 564.2C1184.0 563.5 1186.7 562.9 1188.7 561.7C1190.7 560.4 1193.6 556.7 1195.3 555.8C1197.1 555.0 1199.8 555.0 1200.3 555.8C1200.8 556.7 1198.5 560.2 1198.7 561.7C1198.8 563.2 1201.4 564.6 1201.2 565.8C1200.9 567.1 1198.1 568.6 1197.0 570.0C1195.9 571.4 1194.9 574.0 1193.7 575.0C1192.4 576.0 1189.9 576.9 1188.7 576.7C1187.4 576.4 1185.3 574.6 1185.3 573.3C1185.3 572.1 1188.9 569.2 1188.7 568.3C1188.4 567.5 1185.2 567.1 1183.7 567.5C1182.2 567.9 1179.9 571.1 1178.7 570.8C1177.4 570.6 1174.8 566.8 1175.3 565.8Z M1225.3 541.7C1225.9 540.3 1228.9 539.6 1229.5 540.8C1230.1 542.1 1230.1 548.6 1229.5 550.0C1228.9 551.4 1226.3 551.2 1225.7 550.0C1225.0 548.8 1224.8 543.0 1225.3 541.7Z M1256.2 581.7C1256.4 581.2 1262.5 582.1 1265.3 582.5C1268.2 582.9 1272.3 583.3 1275.3 584.2C1278.3 585.0 1282.6 587.0 1285.3 588.3C1288.1 589.7 1291.2 591.6 1293.7 593.3C1296.2 595.1 1300.2 598.5 1302.0 600.0C1303.8 601.5 1305.8 603.1 1305.3 603.0C1304.8 602.9 1300.9 600.6 1298.7 599.2C1296.4 597.7 1292.8 594.8 1290.3 593.3C1287.8 591.8 1284.5 590.2 1282.0 589.2C1279.5 588.2 1276.4 587.2 1273.7 586.7C1270.9 586.1 1266.3 586.1 1263.7 585.3C1261.0 584.6 1255.9 582.1 1256.2 581.7Z M1290.7 711.3C1291.6 710.7 1296.3 710.0 1297.3 710.7C1298.3 711.4 1297.9 714.9 1297.3 716.0C1296.8 717.1 1294.6 718.2 1293.7 718.0C1292.7 717.8 1291.5 715.7 1291.0 714.7C1290.5 713.7 1289.7 711.9 1290.7 711.3Z M553.7 263.7C554.3 262.9 556.4 261.4 559.0 261.0C561.6 260.6 569.6 260.3 571.2 260.8C572.8 261.4 571.3 263.9 569.7 264.7C568.0 265.4 562.6 265.8 560.3 266.0C558.1 266.2 555.7 266.4 554.7 266.0C553.7 265.6 553.0 264.4 553.7 263.7Z" fill="#eae691"/>
<path d="M413.7 338.3C414.3 337.5 417.4 336.5 418.7 337.5C419.9 338.5 420.8 342.9 422.0 345.0C423.2 347.1 425.4 350.2 427.0 351.7C428.6 353.2 431.6 353.5 432.8 355.0C434.1 356.5 434.0 360.0 435.3 361.7C436.7 363.3 441.2 364.8 442.0 365.8C442.8 366.8 441.6 368.5 440.3 368.3C439.1 368.2 435.2 366.5 433.7 365.0C432.2 363.5 431.8 359.8 430.3 358.3C428.8 356.8 425.4 356.5 423.7 355.0C421.9 353.5 420.0 350.1 418.7 348.3C417.3 346.6 415.2 344.8 414.5 343.3C413.8 341.8 413.0 339.2 413.7 338.3Z M467.0 378.3C467.9 377.5 470.4 377.9 471.2 379.2C471.9 380.4 471.6 384.3 472.0 386.7C472.4 389.0 472.7 393.0 473.7 395.0C474.7 397.0 477.4 398.5 478.7 400.0C479.9 401.5 480.2 404.0 482.0 405.0C483.8 406.0 487.8 406.5 490.3 406.7C492.8 406.8 497.2 405.3 498.7 405.8C500.2 406.3 499.6 408.1 500.3 410.0C501.1 411.9 502.4 416.8 503.7 418.3C504.9 419.8 508.4 419.0 508.7 420.0C508.9 421.0 506.1 423.5 505.3 425.0C504.6 426.5 503.2 428.2 503.7 430.0C504.2 431.8 508.7 434.4 508.7 436.7C508.7 438.9 504.2 442.5 503.7 445.0C503.2 447.5 506.1 451.3 505.3 453.3C504.6 455.3 499.9 456.6 498.7 458.3C497.4 460.1 496.5 462.8 497.0 465.0C497.5 467.2 500.2 470.8 502.0 473.3C503.8 475.8 507.2 479.7 508.7 481.7C510.2 483.7 511.8 484.9 512.0 486.7C512.2 488.4 510.1 491.3 510.3 493.3C510.6 495.3 512.7 497.8 513.7 500.0C514.7 502.2 516.8 506.6 517.0 508.3C517.2 510.1 516.6 511.9 515.3 511.7C514.1 511.4 510.7 508.4 508.7 506.7C506.7 504.9 503.5 502.0 502.0 500.0C500.5 498.0 499.7 495.6 498.7 493.3C497.7 491.1 497.3 487.2 495.3 485.0C493.3 482.8 487.3 480.6 485.3 478.3C483.3 476.1 483.0 472.8 482.0 470.0C481.0 467.2 478.9 462.8 478.7 460.0C478.4 457.2 480.6 453.9 480.3 451.7C480.1 449.4 478.2 446.2 477.0 445.0C475.8 443.8 473.2 442.6 472.0 443.3C470.8 444.1 470.2 449.2 468.7 450.0C467.2 450.8 463.5 449.8 462.0 448.3C460.5 446.8 460.2 442.0 458.7 440.0C457.2 438.0 453.5 437.0 452.0 435.0C450.5 433.0 448.9 428.9 448.7 426.7C448.4 424.4 450.7 421.5 450.3 420.0C450.0 418.5 446.4 417.9 446.2 416.7C445.9 415.4 447.5 412.7 448.7 411.7C449.8 410.7 452.7 409.5 453.7 410.0C454.7 410.5 454.3 414.0 455.3 415.0C456.3 416.0 459.3 417.4 460.3 416.7C461.3 415.9 461.9 412.5 462.0 410.0C462.1 407.5 460.9 402.5 461.2 400.0C461.4 397.5 463.0 395.6 463.7 393.3C464.3 391.1 464.8 387.2 465.3 385.0C465.8 382.8 466.1 379.2 467.0 378.3Z M575.3 579.2C575.5 577.7 578.5 577.0 579.5 578.3C580.5 579.7 580.9 585.6 582.0 588.3C583.1 591.1 585.5 594.2 587.0 596.7C588.5 599.2 590.8 603.0 592.0 605.0C593.2 607.0 593.8 609.2 595.3 610.0C596.8 610.8 600.2 609.5 602.0 610.0C603.8 610.5 605.5 611.8 607.0 613.3C608.5 614.8 610.0 618.2 612.0 620.0C614.0 621.8 618.3 623.5 620.3 625.0C622.3 626.5 624.1 628.2 625.3 630.0C626.6 631.8 628.2 634.4 628.7 636.7C629.2 638.9 629.4 643.0 628.7 645.0C627.9 647.0 624.9 648.2 623.7 650.0C622.4 651.8 620.6 654.2 620.3 656.7C620.1 659.2 622.5 663.9 622.0 666.7C621.5 669.4 618.2 672.5 617.0 675.0C615.8 677.5 614.4 680.9 613.7 683.3C612.9 685.8 612.5 688.1 612.0 691.3C611.5 694.5 610.8 701.7 610.3 704.7C609.8 707.7 608.7 708.8 608.7 711.3C608.7 713.8 609.8 718.3 610.3 721.3C610.8 724.3 612.1 728.3 612.0 731.3C611.9 734.3 609.8 738.8 609.3 741.3C608.8 743.8 609.3 746.0 608.7 748.0C608.1 750.0 606.8 753.7 605.3 754.7C603.8 755.7 600.1 756.2 598.7 754.7C597.3 753.2 596.8 748.2 596.0 744.7C595.2 741.2 593.8 735.3 593.7 731.3C593.6 727.3 595.1 722.0 595.3 718.0C595.6 714.0 594.9 708.7 595.3 704.7C595.7 700.7 596.8 695.0 598.0 691.3C599.2 687.6 603.1 683.2 603.7 680.0C604.3 676.8 601.8 673.0 602.0 670.0C602.2 667.0 604.6 663.0 605.3 660.0C606.1 657.0 607.0 653.0 607.0 650.0C607.0 647.0 605.6 643.0 605.3 640.0C605.1 637.0 605.8 632.5 605.3 630.0C604.8 627.5 603.2 625.3 602.0 623.3C600.8 621.3 598.8 618.4 597.0 616.7C595.2 614.9 591.8 613.4 590.3 611.7C588.8 609.9 588.2 607.2 587.0 605.0C585.8 602.8 583.2 599.2 582.0 596.7C580.8 594.2 579.7 591.0 578.7 588.3C577.7 585.7 575.2 580.7 575.3 579.2Z M805.1 465.0C805.5 463.7 807.7 460.2 809.5 458.8C811.3 457.2 814.8 455.9 817.0 455.0C819.2 454.1 822.2 453.1 824.5 452.5C826.8 451.9 829.8 451.4 832.0 451.2C834.2 451.1 838.2 451.0 839.5 451.2C840.8 451.5 841.7 452.6 840.8 453.1C839.8 453.7 835.5 454.5 833.2 455.0C831.0 455.5 828.0 455.7 825.8 456.2C823.5 456.8 820.3 457.8 818.2 458.8C816.2 459.7 813.7 461.2 812.0 462.5C810.3 463.8 808.0 467.1 807.0 467.5C806.0 467.9 804.8 466.3 805.1 465.0Z M842.0 486.2C842.4 484.6 845.5 482.0 847.0 481.2C848.5 480.5 850.5 480.5 852.0 481.2C853.5 482.0 855.5 485.9 857.0 486.2C858.5 486.6 860.5 484.7 862.0 483.8C863.5 482.8 865.9 479.8 867.0 480.0C868.1 480.2 868.4 483.5 869.5 485.0C870.6 486.5 872.8 488.5 874.5 490.0C876.2 491.5 878.7 493.5 880.8 495.0C882.8 496.5 886.6 498.7 888.2 500.0C889.9 501.3 892.0 503.2 892.0 503.8C892.0 504.3 889.8 504.3 888.2 503.8C886.8 503.2 883.9 501.1 882.0 500.0C880.1 498.9 877.6 497.4 875.8 496.2C873.9 495.1 871.6 493.4 869.5 492.5C867.4 491.6 864.1 490.4 862.0 490.0C859.9 489.6 857.6 489.4 855.8 490.0C853.9 490.6 851.2 493.4 849.5 493.8C847.8 494.1 845.6 493.6 844.5 492.5C843.4 491.4 841.6 487.9 842.0 486.2Z M897.6 511.2C898.5 510.2 901.1 509.2 902.0 509.4C902.9 509.6 903.8 511.3 903.9 512.5C904.0 513.7 903.4 516.5 902.6 517.5C901.9 518.5 899.8 519.6 898.9 519.4C897.9 519.2 896.6 517.5 896.4 516.2C896.2 515.0 896.8 512.3 897.6 511.2Z M947.0 520.0C948.2 518.5 951.9 516.2 953.7 516.7C955.4 517.2 958.2 521.3 958.7 523.3C959.2 525.3 956.2 528.2 957.0 530.0C957.8 531.8 961.7 534.0 963.7 535.0C965.7 536.0 968.1 536.9 970.3 536.7C972.6 536.4 978.2 532.8 978.7 533.3C979.2 533.8 975.7 538.8 973.7 540.0C971.7 541.2 967.6 540.9 965.3 541.7C963.1 542.4 960.2 543.5 958.7 545.0C957.2 546.5 956.8 550.9 955.3 551.7C953.8 552.4 950.7 550.5 948.7 550.0C946.7 549.5 943.2 549.8 942.0 548.3C940.8 546.8 940.3 542.5 940.3 540.0C940.3 537.5 941.2 533.7 942.0 531.7C942.8 529.7 944.6 528.4 945.3 526.7C946.1 524.9 945.8 521.5 947.0 520.0Z M922.0 558.3C924.0 556.8 929.2 555.2 932.0 555.0C934.8 554.8 938.1 555.4 940.3 556.7C942.6 557.9 945.8 560.8 947.0 563.3C948.2 565.8 948.8 570.3 948.7 573.3C948.5 576.3 947.2 580.6 946.2 583.3C945.2 586.1 943.1 589.2 942.0 591.7C940.9 594.2 940.9 598.8 938.7 600.0C936.4 601.2 929.8 601.0 927.0 600.0C924.2 599.0 921.8 595.8 920.3 593.3C918.8 590.8 917.8 586.3 917.0 583.3C916.2 580.3 915.1 576.1 915.3 573.3C915.6 570.6 917.7 567.2 918.7 565.0C919.7 562.8 920.0 559.8 922.0 558.3Z M882.0 600.0C884.2 598.8 891.3 596.9 895.3 596.7C899.3 596.4 904.9 598.6 908.7 598.3C912.4 598.1 917.3 594.8 920.3 595.0C923.3 595.2 926.9 598.2 928.7 600.0C930.4 601.8 932.0 604.4 932.0 606.7C932.0 608.9 930.4 613.0 928.7 615.0C926.9 617.0 923.1 619.0 920.3 620.0C917.6 621.0 913.6 621.9 910.3 621.7C907.1 621.4 901.9 618.3 898.7 618.3C895.4 618.3 891.7 621.4 888.7 621.7C885.7 621.9 880.4 621.5 878.7 620.0C876.9 618.5 876.8 613.9 877.0 611.7C877.2 609.4 879.6 606.8 880.3 605.0C881.1 603.2 879.8 601.2 882.0 600.0Z M872.8 626.7C873.8 624.8 879.1 625.6 882.0 625.8C884.9 626.1 890.0 627.0 892.0 628.3C894.0 629.7 895.1 632.8 895.3 635.0C895.6 637.2 894.7 640.8 893.7 643.3C892.7 645.8 890.4 650.2 888.7 651.7C886.9 653.2 883.5 654.1 882.0 653.3C880.5 652.6 879.7 648.9 878.7 646.7C877.7 644.4 876.2 641.3 875.3 638.3C874.5 635.3 871.8 628.5 872.8 626.7Z M913.7 643.3C916.2 641.3 921.4 639.5 923.7 640.0C925.9 640.5 927.7 644.2 928.7 646.7C929.7 649.2 930.8 653.9 930.3 656.7C929.8 659.4 927.1 663.0 925.3 665.0C923.6 667.0 921.2 669.0 918.7 670.0C916.2 671.0 911.4 671.7 908.7 671.7C905.9 671.7 901.3 671.5 900.3 670.0C899.3 668.5 901.0 664.2 902.0 661.7C903.0 659.2 905.2 656.1 907.0 653.3C908.8 650.6 911.2 645.3 913.7 643.3Z M918.7 623.3C919.9 621.8 926.7 620.9 928.7 621.7C930.7 622.4 932.2 626.6 932.0 628.3C931.8 630.1 928.8 632.8 927.0 633.3C925.2 633.8 921.6 633.2 920.3 631.7C919.1 630.2 917.4 624.8 918.7 623.3Z M975.3 623.3C976.3 621.3 979.5 620.7 980.3 621.7C981.2 622.7 981.4 627.5 981.2 630.0C980.9 632.5 979.5 636.6 978.7 638.3C977.8 640.1 976.1 642.2 975.3 641.7C974.6 641.2 973.7 637.8 973.7 635.0C973.7 632.2 974.3 625.3 975.3 623.3Z M968.2 433.8C968.8 433.0 972.4 436.2 974.5 437.5C976.6 438.8 979.9 441.6 982.0 442.5C984.1 443.4 986.4 443.4 988.2 443.8C990.1 444.1 992.4 445.2 994.5 445.0C996.6 444.8 999.8 443.2 1002.0 442.5C1004.2 441.8 1007.2 440.2 1009.5 440.0C1011.8 439.8 1014.8 440.9 1017.0 441.2C1019.2 441.6 1022.2 443.1 1024.5 442.5C1026.8 441.9 1029.8 438.6 1032.0 437.5C1034.2 436.4 1037.1 435.8 1039.5 435.0C1041.9 434.2 1046.9 427.2 1048.2 432.5C1049.6 437.8 1049.2 463.8 1048.2 470.0C1047.3 476.2 1044.4 473.0 1042.0 473.8C1039.6 474.5 1035.0 474.4 1032.0 475.0C1029.0 475.6 1024.2 476.8 1022.0 477.5C1019.8 478.2 1018.5 479.8 1017.0 480.0C1015.5 480.2 1013.7 478.8 1012.0 478.8C1010.3 478.8 1007.4 480.2 1005.8 480.0C1004.1 479.8 1002.4 478.6 1000.8 477.5C999.1 476.4 996.2 474.0 994.5 472.5C992.8 471.0 991.0 469.0 989.5 467.5C988.0 466.0 986.0 464.2 984.5 462.5C983.0 460.8 981.0 458.1 979.5 456.2C978.0 454.4 975.8 452.1 974.5 450.0C973.2 447.9 971.7 444.9 970.8 442.5C969.8 440.1 967.7 434.5 968.2 433.8Z M1045.3 453.3C1047.3 451.8 1056.5 451.0 1062.0 450.0C1067.5 449.0 1077.5 447.7 1082.0 446.7C1086.5 445.7 1089.0 444.3 1092.0 443.3C1095.0 442.3 1099.0 441.2 1102.0 440.0C1105.0 438.8 1109.5 435.9 1112.0 435.0C1114.5 434.1 1118.2 433.4 1118.7 434.2C1119.2 434.9 1114.3 438.1 1115.3 440.0C1116.3 441.9 1122.3 445.9 1125.3 446.7C1128.3 447.4 1132.3 444.8 1135.3 445.0C1138.3 445.2 1143.1 448.3 1145.3 448.3C1147.6 448.3 1148.8 444.2 1150.3 445.0C1151.8 445.8 1155.1 451.1 1155.3 453.3C1155.6 455.6 1153.5 459.2 1152.0 460.0C1150.5 460.8 1147.3 458.1 1145.3 458.3C1143.3 458.6 1140.7 460.4 1138.7 461.7C1136.7 462.9 1134.5 465.9 1132.0 466.7C1129.5 467.4 1124.5 466.2 1122.0 466.7C1119.5 467.2 1116.8 468.8 1115.3 470.0C1113.8 471.2 1114.0 474.2 1112.0 475.0C1110.0 475.8 1105.0 475.5 1102.0 475.0C1099.0 474.5 1095.0 472.9 1092.0 471.7C1089.0 470.4 1086.0 467.9 1082.0 466.7C1078.0 465.4 1070.3 464.3 1065.3 463.3C1060.3 462.3 1051.7 461.5 1048.7 460.0C1045.7 458.5 1043.3 454.8 1045.3 453.3Z M1098.7 388.3C1099.9 387.1 1106.2 385.0 1108.7 385.0C1111.2 385.0 1112.8 388.8 1115.3 388.3C1117.8 387.8 1123.1 383.7 1125.3 381.7C1127.6 379.7 1128.3 375.5 1130.3 375.0C1132.3 374.5 1135.9 376.8 1138.7 378.3C1141.4 379.8 1146.2 384.8 1148.7 385.0C1151.2 385.2 1153.3 380.2 1155.3 380.0C1157.3 379.8 1160.0 383.8 1162.0 383.3C1164.0 382.8 1166.7 378.7 1168.7 376.7C1170.7 374.7 1173.3 372.0 1175.3 370.0C1177.3 368.0 1179.5 364.6 1182.0 363.3C1184.5 362.1 1190.8 360.7 1192.0 361.7C1193.2 362.7 1191.3 367.8 1190.3 370.0C1189.3 372.2 1185.6 374.2 1185.3 376.7C1185.1 379.2 1188.7 383.7 1188.7 386.7C1188.7 389.7 1184.8 394.4 1185.3 396.7C1185.8 398.9 1190.2 399.9 1192.0 401.7C1193.8 403.4 1197.0 406.6 1197.0 408.3C1197.0 410.1 1194.2 412.1 1192.0 413.3C1189.8 414.6 1184.5 415.4 1182.0 416.7C1179.5 417.9 1177.8 420.7 1175.3 421.7C1172.8 422.7 1168.3 423.6 1165.3 423.3C1162.3 423.1 1157.8 421.2 1155.3 420.0C1152.8 418.8 1151.2 416.0 1148.7 415.0C1146.2 414.0 1141.7 413.6 1138.7 413.3C1135.7 413.1 1131.4 414.1 1128.7 413.3C1125.9 412.6 1122.3 410.3 1120.3 408.3C1118.3 406.3 1117.3 401.8 1115.3 400.0C1113.3 398.2 1109.2 397.7 1107.0 396.7C1104.8 395.7 1101.6 394.6 1100.3 393.3C1099.1 392.1 1097.4 389.6 1098.7 388.3Z M1228.7 368.3C1229.2 366.6 1235.7 365.2 1238.7 365.0C1241.7 364.8 1246.2 365.7 1248.7 366.7C1251.2 367.7 1255.1 370.2 1255.3 371.7C1255.6 373.2 1252.3 375.2 1250.3 376.7C1248.3 378.2 1244.2 381.7 1242.0 381.7C1239.8 381.7 1237.3 378.7 1235.3 376.7C1233.3 374.7 1228.2 370.1 1228.7 368.3Z M1215.3 360.0C1216.1 358.0 1224.1 358.8 1225.3 360.0C1226.6 361.2 1224.4 366.3 1223.7 368.3C1222.9 370.3 1221.6 374.6 1220.3 373.3C1219.1 372.1 1214.6 362.0 1215.3 360.0Z M1198.7 383.3C1199.4 381.6 1206.9 379.5 1208.7 380.0C1210.4 380.5 1211.1 384.9 1210.3 386.7C1209.6 388.4 1205.4 392.2 1203.7 391.7C1201.9 391.2 1197.9 385.1 1198.7 383.3Z M1055.3 420.0C1057.6 418.2 1061.8 416.7 1065.3 416.7C1068.8 416.7 1076.2 418.5 1078.7 420.0C1081.2 421.5 1082.5 424.7 1082.0 426.7C1081.5 428.7 1077.3 431.1 1075.3 433.3C1073.3 435.6 1070.2 439.4 1068.7 441.7C1067.2 443.9 1066.8 446.8 1065.3 448.3C1063.8 449.8 1060.7 451.9 1058.7 451.7C1056.7 451.4 1053.5 448.7 1052.0 446.7C1050.5 444.7 1048.9 441.1 1048.7 438.3C1048.4 435.6 1049.3 431.1 1050.3 428.3C1051.3 425.6 1053.1 421.8 1055.3 420.0Z M1385.3 698.0C1386.6 697.0 1393.7 698.3 1394.7 699.3C1395.7 700.3 1393.3 703.6 1392.0 704.7C1390.7 705.7 1387.0 707.3 1386.0 706.3C1385.0 705.3 1384.0 699.0 1385.3 698.0Z M1379.3 711.3C1379.2 712.6 1375.7 718.2 1373.7 720.7C1371.7 723.2 1367.8 727.0 1366.0 728.0C1364.2 729.0 1361.7 728.6 1362.0 727.3C1362.3 726.1 1366.1 722.0 1368.0 719.7C1369.9 717.4 1373.0 713.2 1374.7 712.0C1376.4 710.8 1379.5 710.0 1379.3 711.3Z" fill="#efc878"/>
<path d="M999.5 448.8C1000.4 447.6 1004.8 446.2 1007.0 446.2C1009.2 446.2 1012.6 447.8 1014.5 448.8C1016.4 449.7 1019.1 451.4 1019.5 452.5C1019.9 453.6 1018.5 455.9 1017.0 456.2C1015.5 456.6 1011.0 454.4 1009.5 455.0C1008.0 455.6 1008.1 459.4 1007.0 460.0C1005.9 460.6 1002.9 459.7 1002.0 458.8C1001.1 457.8 1001.1 455.2 1000.8 453.8C1000.4 452.2 998.6 449.9 999.5 448.8Z" fill="#eae691"/>
<path d="M422.0 316.7C422.5 315.0 428.5 313.5 432.0 312.5C435.5 311.5 441.8 309.9 445.3 310.0C448.8 310.1 453.5 312.1 455.3 313.3C457.2 314.6 458.8 317.1 457.8 318.3C456.8 319.6 451.5 320.8 448.7 321.7C445.8 322.5 441.7 323.9 438.7 324.2C435.7 324.4 431.2 324.5 428.7 323.3C426.2 322.2 421.5 318.3 422.0 316.7Z M431.2 321.7C431.9 319.9 438.0 320.8 439.5 322.5C441.0 324.2 440.0 330.8 441.2 333.3C442.3 335.8 444.9 337.8 447.0 339.2C449.1 340.5 453.5 341.5 455.3 342.5C457.2 343.5 460.5 345.0 459.5 345.8C458.5 346.7 451.5 348.4 448.7 348.0C445.8 347.6 442.5 345.4 440.3 343.3C438.2 341.3 435.9 337.4 434.5 334.2C433.1 330.9 430.4 323.4 431.2 321.7Z M782.0 486.7C783.4 485.9 786.4 490.0 788.7 490.0C790.9 490.0 794.2 487.2 797.0 486.7C799.8 486.2 806.2 485.9 807.0 486.7C807.8 487.4 804.0 490.2 802.0 491.7C800.0 493.2 795.7 494.9 793.7 496.7C791.7 498.4 789.2 501.3 788.7 503.3C788.2 505.3 789.3 508.5 790.3 510.0C791.3 511.5 794.1 512.3 795.3 513.3C796.6 514.3 799.2 515.4 798.7 516.7C798.2 517.9 793.8 520.2 792.0 521.7C790.2 523.2 787.0 524.9 787.0 526.7C787.0 528.4 790.2 531.3 792.0 533.3C793.8 535.3 796.9 538.0 798.7 540.0C800.4 542.0 801.7 545.2 803.7 546.7C805.7 548.2 809.5 550.0 812.0 550.0C814.5 550.0 819.1 548.9 820.3 546.7C821.6 544.4 818.8 537.0 820.3 535.0C821.8 533.0 828.3 532.6 830.3 533.3C832.3 534.1 831.9 539.2 833.7 540.0C835.4 540.8 841.0 539.8 842.0 538.3C843.0 536.8 840.1 531.8 840.3 530.0C840.6 528.2 842.7 525.9 843.7 526.7C844.7 527.4 845.8 533.0 847.0 535.0C848.2 537.0 850.0 539.2 852.0 540.0C854.0 540.8 858.1 540.5 860.3 540.0C862.6 539.5 866.8 536.2 867.0 536.7C867.2 537.2 863.5 541.6 862.0 543.3C860.5 545.1 858.0 546.8 857.0 548.3C856.0 549.8 856.6 552.6 855.3 553.3C854.1 554.1 850.4 554.0 848.7 553.3C846.9 552.7 845.7 550.0 843.7 549.2C841.7 548.3 838.1 547.6 835.3 547.5C832.6 547.4 828.3 547.7 825.3 548.3C822.3 549.0 818.1 551.2 815.3 551.7C812.6 552.2 809.2 552.0 807.0 551.7C804.8 551.3 802.6 550.4 800.3 549.2C798.1 547.9 794.5 545.1 792.0 543.3C789.5 541.6 785.7 539.5 783.7 537.5C781.6 535.5 779.5 532.4 778.3 530.0C777.1 527.6 776.1 524.2 775.7 521.7C775.2 519.2 775.1 516.1 775.3 513.3C775.5 510.6 776.4 506.1 777.0 503.3C777.6 500.6 778.8 497.5 779.5 495.0C780.2 492.5 780.6 487.4 782.0 486.7Z M808.9 448.1C810.0 447.5 811.7 449.4 813.2 449.4C814.8 449.4 819.3 447.8 819.5 448.1C819.7 448.4 816.0 450.2 814.5 451.2C813.0 452.3 811.0 453.7 809.5 455.0C808.0 456.3 806.0 458.3 804.5 460.0C803.0 461.7 800.6 465.1 799.5 466.2C798.4 467.4 796.6 468.4 797.0 467.5C797.4 466.6 800.7 462.1 802.0 460.0C803.3 457.9 804.7 455.5 805.8 453.8C806.8 452.0 807.8 448.8 808.9 448.1Z M847.0 453.8C847.9 452.4 850.5 453.1 852.0 452.5C853.5 451.9 855.5 450.9 857.0 450.0C858.5 449.1 860.9 447.2 862.0 446.2C863.1 445.3 864.2 443.2 864.5 443.8C864.8 444.3 864.2 448.5 863.9 450.0C863.5 451.5 862.8 452.4 862.0 453.8C861.2 455.1 859.6 457.2 858.2 458.8C856.9 460.2 854.8 462.8 853.2 463.8C851.8 464.7 849.4 465.4 848.2 465.0C847.1 464.6 845.9 462.9 845.8 461.2C845.6 459.6 846.1 455.1 847.0 453.8Z M875.8 460.0C876.1 459.8 880.1 463.0 882.0 463.8C883.9 464.5 886.8 465.4 888.2 465.0C889.8 464.6 890.7 462.1 892.0 461.2C893.3 460.4 895.3 459.5 897.0 459.4C898.7 459.3 901.4 460.2 903.2 460.6C905.1 461.1 907.4 461.8 909.5 462.5C911.6 463.2 914.9 464.5 917.0 465.0C919.1 465.5 921.4 465.6 923.2 465.6C925.1 465.6 927.8 465.1 929.5 465.0C931.2 464.9 933.4 464.7 934.5 465.0C935.6 465.3 936.9 466.1 937.0 466.9C937.1 467.6 936.2 469.5 935.1 470.0C934.0 470.5 931.3 470.0 929.5 470.0C927.7 470.0 924.8 469.4 923.2 470.0C921.8 470.6 920.8 473.4 919.5 473.8C918.2 474.1 915.6 472.3 914.5 472.5C913.4 472.7 913.3 474.8 912.0 475.0C910.7 475.2 907.6 473.4 905.8 473.8C903.9 474.1 901.2 476.4 899.5 477.5C897.8 478.6 896.0 480.9 894.5 481.2C893.0 481.6 889.9 480.9 889.5 480.0C889.1 479.1 892.2 476.3 892.0 475.0C891.8 473.7 889.6 472.0 888.2 471.2C886.9 470.5 884.6 470.9 883.2 470.0C881.9 469.1 880.6 466.5 879.5 465.0C878.4 463.5 875.4 460.2 875.8 460.0Z M927.0 467.5C927.2 467.1 928.8 468.5 929.5 470.0C930.2 471.5 931.4 475.1 932.0 477.5C932.6 479.9 933.3 483.6 933.2 486.2C933.2 488.9 931.9 493.7 931.4 495.0C930.8 496.3 929.6 496.3 929.5 495.0C929.4 493.7 930.7 488.7 930.8 486.2C930.8 483.8 930.5 480.8 930.1 478.8C929.8 476.7 928.7 474.2 928.2 472.5C927.8 470.8 926.8 467.9 927.0 467.5Z M828.2 478.8C828.9 477.6 833.2 477.1 834.5 477.5C835.8 477.9 837.0 479.9 837.0 481.2C837.0 482.6 835.5 485.7 834.5 486.2C833.5 486.8 831.1 486.1 830.1 485.0C829.2 483.9 827.6 479.9 828.2 478.8Z M985.3 543.3C985.5 542.8 982.1 548.0 980.3 550.0C978.6 552.0 975.7 554.9 973.7 556.7C971.7 558.4 968.8 560.2 967.0 561.7C965.2 563.2 963.2 564.9 962.0 566.7C960.8 568.4 959.5 571.3 958.7 573.3C957.8 575.3 956.7 578.0 956.2 580.0C955.7 582.0 955.1 586.7 955.3 586.7C955.6 586.7 956.8 582.1 957.8 580.0C958.8 577.9 960.8 574.5 962.0 572.5C963.2 570.5 964.5 568.5 966.2 566.7C967.8 564.8 970.8 562.0 972.8 560.0C974.8 558.0 977.6 555.8 979.5 553.3C981.4 550.8 985.2 543.8 985.3 543.3Z M932.0 600.0C933.0 600.5 935.8 607.5 937.0 610.0C938.2 612.5 939.0 615.2 940.3 616.7C941.7 618.2 943.9 619.8 946.2 620.0C948.4 620.2 955.0 618.0 955.3 618.3C955.7 618.7 950.7 621.2 948.7 622.5C946.7 623.8 943.5 625.3 942.0 626.7C940.5 628.0 938.7 630.4 938.7 631.7C938.7 632.9 941.2 633.5 942.0 635.0C942.8 636.5 944.2 639.7 943.7 641.7C943.2 643.7 940.4 647.6 938.7 648.3C936.9 649.1 933.1 647.9 932.0 646.7C930.9 645.4 930.9 641.8 931.2 640.0C931.4 638.2 932.8 636.8 933.7 635.0C934.5 633.2 936.6 630.3 937.0 628.3C937.4 626.3 936.9 623.7 936.2 621.7C935.4 619.7 932.9 617.2 932.0 615.0C931.1 612.8 930.3 608.9 930.3 606.7C930.3 604.4 931.0 599.5 932.0 600.0Z M893.7 683.3C894.4 683.6 899.5 682.0 902.0 681.7C904.5 681.3 908.1 681.6 910.3 680.8C912.6 680.1 916.2 677.7 917.0 676.7C917.8 675.7 916.6 674.2 915.3 674.2C914.1 674.2 910.7 676.3 908.7 676.7C906.7 677.0 903.8 676.2 902.0 676.7C900.2 677.2 898.2 679.0 897.0 680.0C895.8 681.0 892.9 683.1 893.7 683.3Z M959.5 452.5C960.3 451.8 965.1 450.2 967.0 450.6C968.9 451.0 970.5 453.2 972.0 455.0C973.5 456.8 975.7 460.2 977.0 462.5C978.3 464.8 980.0 468.3 980.8 470.0C981.5 471.7 981.4 472.7 982.0 473.8C982.6 474.8 983.6 475.7 984.5 476.9C985.4 478.1 987.1 480.4 988.2 481.9C989.4 483.4 990.6 485.7 992.0 486.9C993.4 488.1 995.6 489.9 997.6 490.0C999.7 490.1 1004.3 487.1 1005.8 487.5C1007.2 487.9 1007.2 490.8 1007.0 492.5C1006.8 494.2 1005.2 497.1 1004.5 498.8C1003.8 500.4 1003.1 503.4 1002.0 503.8C1000.9 504.1 998.5 502.4 997.0 501.2C995.5 500.1 993.5 497.9 992.0 496.2C990.5 494.6 988.3 492.1 987.0 490.0C985.7 487.9 984.4 484.6 983.2 482.5C982.1 480.4 980.6 478.1 979.5 476.2C978.4 474.4 977.1 471.9 975.8 470.0C974.4 468.1 972.2 465.4 970.8 463.8C969.2 462.1 967.2 460.1 965.8 458.8C964.3 457.4 962.3 455.9 961.4 455.0C960.4 454.1 958.7 453.2 959.5 452.5Z M941.0 480.0C941.0 481.1 943.4 485.1 944.8 487.5C946.1 489.9 948.2 493.6 949.8 496.2C951.2 498.9 953.2 502.6 954.8 505.0C956.2 507.4 958.4 510.4 959.8 512.5C961.1 514.6 962.4 516.9 963.5 518.8C964.6 520.6 966.4 523.5 967.2 525.0C968.1 526.5 968.9 528.8 969.5 528.8C970.1 528.8 971.3 526.5 971.0 525.0C970.7 523.5 968.4 520.6 967.2 518.8C966.1 516.9 964.8 514.8 963.5 512.5C962.2 510.2 960.0 506.4 958.5 503.8C957.0 501.1 955.0 497.6 953.5 495.0C952.0 492.4 949.8 488.5 948.5 486.2C947.2 484.0 945.9 480.9 944.8 480.0C943.6 479.1 941.0 478.9 941.0 480.0Z M937.6 466.2C937.4 465.7 938.5 464.9 938.9 463.8C939.2 462.6 939.8 460.4 940.1 458.8C940.5 457.1 941.1 454.2 941.4 452.5C941.7 450.8 941.5 448.1 942.0 447.5C942.5 446.9 944.2 447.6 944.5 448.8C944.8 449.9 944.2 453.1 943.9 455.0C943.5 456.9 942.5 459.4 942.0 461.2C941.5 463.1 941.2 466.8 940.5 467.5C939.8 468.2 937.9 466.8 937.6 466.2Z M1005.3 503.3C1007.1 501.2 1011.7 499.6 1013.7 498.3C1015.7 497.1 1018.4 494.5 1018.7 495.0C1018.9 495.5 1016.8 499.7 1015.3 501.7C1013.8 503.7 1010.7 506.7 1008.7 508.3C1006.7 510.0 1002.5 513.2 1002.0 512.5C1001.5 511.8 1003.6 505.5 1005.3 503.3Z M912.0 426.9C912.6 426.1 917.1 425.8 918.2 426.2C919.4 426.7 919.6 428.9 919.5 430.0C919.4 431.1 917.6 432.6 917.6 433.8C917.6 434.9 919.6 437.1 919.5 437.5C919.4 437.9 917.8 437.2 917.0 436.2C916.2 435.3 915.2 432.7 914.5 431.2C913.8 429.8 911.4 427.6 912.0 426.9Z M799.5 425.0C800.5 424.2 806.2 423.9 807.0 425.0C807.8 426.1 805.3 430.2 805.1 432.5C804.9 434.8 806.0 438.4 805.8 440.0C805.5 441.6 804.0 443.1 803.2 443.1C802.5 443.1 801.5 441.0 800.8 440.0C800.0 439.0 798.3 437.8 798.2 436.2C798.2 434.8 799.9 431.7 800.1 430.0C800.3 428.3 798.5 425.8 799.5 425.0Z M1060.3 373.3C1061.1 363.6 1064.1 319.1 1065.3 308.3C1066.6 297.6 1067.2 302.7 1068.7 301.7C1070.2 300.7 1074.1 301.9 1075.3 301.7C1076.6 301.4 1077.8 300.8 1077.0 300.0C1076.2 299.2 1071.6 298.4 1070.3 296.7C1069.1 294.9 1068.4 290.6 1068.7 288.3C1068.9 286.1 1070.5 283.2 1072.0 281.7C1073.5 280.2 1076.2 279.3 1078.7 278.3C1081.2 277.3 1085.7 275.8 1088.7 275.0C1091.7 274.2 1096.2 274.3 1098.7 273.3C1101.2 272.3 1103.3 269.8 1105.3 268.3C1107.3 266.8 1109.5 264.6 1112.0 263.3C1114.5 262.1 1119.0 261.0 1122.0 260.0C1125.0 259.0 1129.0 257.3 1132.0 256.7C1135.0 256.0 1139.5 256.3 1142.0 255.8C1144.5 255.3 1147.2 254.5 1148.7 253.3C1150.2 252.2 1150.2 249.3 1152.0 248.3C1153.8 247.3 1158.1 246.2 1160.3 246.7C1162.6 247.2 1164.8 250.5 1167.0 251.7C1169.2 252.8 1172.6 253.4 1175.3 254.2C1178.1 254.9 1183.3 255.8 1185.3 256.7C1187.3 257.5 1188.7 258.9 1188.7 260.0C1188.7 261.1 1186.8 262.9 1185.3 264.2C1183.8 265.4 1180.7 267.2 1178.7 268.3C1176.7 269.5 1174.2 270.4 1172.0 271.7C1169.8 272.9 1163.7 276.4 1163.7 276.7C1163.7 276.9 1169.2 274.1 1172.0 273.3C1174.8 272.6 1179.0 271.7 1182.0 271.7C1185.0 271.7 1189.0 272.8 1192.0 273.3C1195.0 273.8 1199.5 274.5 1202.0 275.0C1204.5 275.5 1206.2 276.7 1208.7 276.7C1211.2 276.7 1216.4 275.6 1218.7 275.0C1220.9 274.4 1221.7 272.5 1223.7 272.5C1225.7 272.5 1229.8 273.9 1232.0 275.0C1234.2 276.1 1237.9 278.5 1238.7 280.0C1239.4 281.5 1236.5 283.8 1237.0 285.0C1237.5 286.2 1240.2 288.3 1242.0 288.3C1243.8 288.3 1246.7 285.2 1248.7 285.0C1250.7 284.8 1252.8 286.7 1255.3 286.7C1257.8 286.7 1262.8 285.8 1265.3 285.0C1267.8 284.2 1270.0 282.7 1272.0 281.7C1274.0 280.7 1276.4 278.6 1278.7 278.3C1280.9 278.1 1285.0 279.2 1287.0 280.0C1289.0 280.8 1290.2 282.6 1292.0 283.3C1293.8 284.1 1296.2 284.2 1298.7 285.0C1301.2 285.8 1305.7 287.6 1308.7 288.3C1311.7 289.1 1315.7 289.9 1318.7 290.0C1321.7 290.1 1325.9 288.9 1328.7 289.2C1331.4 289.4 1335.0 290.5 1337.0 291.7C1339.0 292.8 1340.2 295.7 1342.0 296.7C1343.8 297.7 1346.2 298.3 1348.7 298.3C1351.2 298.3 1356.2 297.2 1358.7 296.7C1361.2 296.2 1364.3 294.9 1365.3 295.0C1366.3 295.1 1366.3 297.0 1365.3 297.5C1364.3 298.0 1361.2 298.0 1358.7 298.3C1356.2 298.7 1351.2 299.0 1348.7 300.0C1346.2 301.0 1343.8 303.5 1342.0 305.0C1340.2 306.5 1339.0 308.5 1337.0 310.0C1335.0 311.5 1331.2 313.8 1328.7 315.0C1326.2 316.2 1321.3 316.6 1320.3 318.3C1319.3 320.1 1322.8 325.2 1322.0 326.7C1321.2 328.2 1316.8 329.3 1315.3 328.3C1313.8 327.3 1314.0 322.0 1312.0 320.0C1310.0 318.0 1305.0 316.0 1302.0 315.0C1299.0 314.0 1295.0 314.1 1292.0 313.3C1289.0 312.6 1284.5 311.0 1282.0 310.0C1279.5 309.0 1275.3 308.2 1275.3 306.7C1275.3 305.2 1279.2 302.0 1282.0 300.0C1284.8 298.0 1292.9 294.3 1293.7 293.3C1294.4 292.3 1289.0 293.8 1287.0 293.3C1285.0 292.8 1282.8 290.0 1280.3 290.0C1277.8 290.0 1272.8 292.1 1270.3 293.3C1267.8 294.6 1265.4 296.3 1263.7 298.3C1261.9 300.3 1260.4 304.2 1258.7 306.7C1256.9 309.2 1254.0 314.5 1252.0 315.0C1250.0 315.5 1245.8 311.8 1245.3 310.0C1244.8 308.2 1247.2 305.8 1248.7 303.3C1250.2 300.8 1255.6 294.3 1255.3 293.3C1255.1 292.3 1249.0 297.2 1247.0 296.7C1245.0 296.2 1243.8 291.8 1242.0 290.0C1240.2 288.2 1237.3 285.0 1235.3 285.0C1233.3 285.0 1230.4 288.2 1228.7 290.0C1226.9 291.8 1225.7 295.4 1223.7 296.7C1221.7 297.9 1217.6 297.1 1215.3 298.3C1213.1 299.6 1210.7 303.2 1208.7 305.0C1206.7 306.8 1203.5 309.8 1202.0 310.0C1200.5 310.2 1198.7 308.2 1198.7 306.7C1198.7 305.2 1201.0 302.0 1202.0 300.0C1203.0 298.0 1203.8 295.1 1205.3 293.3C1206.8 291.6 1212.5 289.1 1212.0 288.3C1211.5 287.6 1204.5 288.1 1202.0 288.3C1199.5 288.6 1197.8 288.8 1195.3 290.0C1192.8 291.2 1188.3 296.2 1185.3 296.7C1182.3 297.2 1177.8 294.8 1175.3 293.3C1172.8 291.8 1170.7 287.9 1168.7 286.7C1166.7 285.4 1164.0 284.5 1162.0 285.0C1160.0 285.5 1157.3 288.8 1155.3 290.0C1153.3 291.2 1151.2 292.6 1148.7 293.3C1146.2 294.1 1142.2 295.0 1138.7 295.0C1135.2 295.0 1128.8 293.1 1125.3 293.3C1121.8 293.6 1117.1 294.7 1115.3 296.7C1113.6 298.7 1114.7 303.7 1113.7 306.7C1112.7 309.7 1108.2 313.7 1108.7 316.7C1109.2 319.7 1116.5 323.2 1117.0 326.7C1117.5 330.2 1112.5 336.5 1112.0 340.0C1111.5 343.5 1111.7 347.5 1113.7 350.0C1115.7 352.5 1122.1 356.2 1125.3 356.7C1128.6 357.2 1132.3 354.0 1135.3 353.3C1138.3 352.7 1144.6 351.8 1145.3 352.5C1146.1 353.2 1142.8 356.8 1140.3 358.3C1137.8 359.8 1132.4 361.5 1128.7 362.5C1124.9 363.5 1117.1 364.4 1115.3 365.0C1113.6 365.6 1117.8 364.9 1117.0 366.7C1116.2 368.4 1113.1 374.4 1110.3 376.7C1107.6 378.9 1101.9 381.2 1098.7 381.7C1095.4 382.2 1091.2 379.8 1088.7 380.0C1086.2 380.2 1084.5 383.3 1082.0 383.3C1079.5 383.3 1075.2 381.5 1072.0 380.0C1068.8 378.5 1062.1 374.3 1060.3 373.3C1058.6 372.3 1059.6 383.1 1060.3 373.3Z M1178.7 333.3C1179.2 332.1 1182.8 330.0 1185.3 330.0C1187.8 330.0 1192.8 333.3 1195.3 333.3C1197.8 333.3 1201.5 331.5 1202.0 330.0C1202.5 328.5 1198.2 325.1 1198.7 323.3C1199.2 321.6 1203.1 318.6 1205.3 318.3C1207.6 318.1 1211.4 321.9 1213.7 321.7C1215.9 321.4 1218.3 316.4 1220.3 316.7C1222.3 316.9 1224.8 321.6 1227.0 323.3C1229.2 325.1 1233.1 327.1 1235.3 328.3C1237.6 329.6 1239.8 331.4 1242.0 331.7C1244.2 331.9 1247.6 330.0 1250.3 330.0C1253.1 330.0 1258.3 330.2 1260.3 331.7C1262.3 333.2 1263.4 337.2 1263.7 340.0C1263.9 342.8 1263.2 348.0 1262.0 350.0C1260.8 352.0 1256.8 353.8 1255.3 353.3C1253.8 352.8 1253.0 348.7 1252.0 346.7C1251.0 344.7 1250.4 341.2 1248.7 340.0C1246.9 338.8 1242.8 338.3 1240.3 338.3C1237.8 338.3 1234.5 339.2 1232.0 340.0C1229.5 340.8 1226.2 342.3 1223.7 343.3C1221.2 344.3 1217.1 345.7 1215.3 346.7C1213.6 347.7 1212.2 350.5 1212.0 350.0C1211.8 349.5 1212.4 345.1 1213.7 343.3C1214.9 341.6 1220.6 339.3 1220.3 338.3C1220.1 337.3 1214.8 336.4 1212.0 336.7C1209.2 336.9 1205.0 339.5 1202.0 340.0C1199.0 340.5 1195.0 340.2 1192.0 340.0C1189.0 339.8 1184.0 339.3 1182.0 338.3C1180.0 337.3 1178.2 334.6 1178.7 333.3Z M1277.0 306.7C1277.2 305.4 1284.0 304.3 1287.0 303.3C1290.0 302.3 1294.0 299.8 1297.0 300.0C1300.0 300.2 1303.8 304.5 1307.0 305.0C1310.2 305.5 1315.7 303.1 1318.7 303.3C1321.7 303.6 1325.0 305.7 1327.0 306.7C1329.0 307.7 1332.2 309.0 1332.0 310.0C1331.8 311.0 1327.3 312.3 1325.3 313.3C1323.3 314.3 1319.2 315.2 1318.7 316.7C1318.2 318.2 1322.0 321.6 1322.0 323.3C1322.0 325.1 1319.9 328.1 1318.7 328.3C1317.4 328.6 1314.7 326.5 1313.7 325.0C1312.7 323.5 1313.5 319.8 1312.0 318.3C1310.5 316.8 1306.2 315.8 1303.7 315.0C1301.2 314.2 1298.1 313.8 1295.3 313.3C1292.6 312.8 1288.1 312.7 1285.3 311.7C1282.6 310.7 1276.8 307.9 1277.0 306.7Z M1268.7 370.0C1268.7 368.2 1271.9 361.1 1273.7 358.3C1275.4 355.6 1278.1 353.2 1280.3 351.7C1282.6 350.2 1285.9 349.1 1288.7 348.3C1291.4 347.6 1295.2 346.9 1298.7 346.7C1302.2 346.4 1308.5 347.2 1312.0 346.7C1315.5 346.2 1319.0 344.6 1322.0 343.3C1325.0 342.1 1329.0 339.6 1332.0 338.3C1335.0 337.1 1339.0 335.8 1342.0 335.0C1345.0 334.2 1351.0 332.6 1352.0 333.3C1353.0 334.1 1350.2 339.2 1348.7 340.0C1347.2 340.8 1344.5 338.1 1342.0 338.3C1339.5 338.6 1335.0 340.4 1332.0 341.7C1329.0 342.9 1325.0 345.4 1322.0 346.7C1319.0 347.9 1315.5 349.4 1312.0 350.0C1308.5 350.6 1302.2 350.5 1298.7 350.8C1295.2 351.2 1291.2 351.6 1288.7 352.5C1286.2 353.4 1283.8 355.0 1282.0 356.7C1280.2 358.3 1278.2 361.3 1277.0 363.3C1275.8 365.3 1274.9 369.0 1273.7 370.0C1272.4 371.0 1268.7 371.8 1268.7 370.0Z M1365.3 318.3C1366.3 316.3 1369.5 317.7 1372.0 316.7C1374.5 315.7 1379.8 311.7 1382.0 311.7C1384.2 311.7 1385.0 315.2 1387.0 316.7C1389.0 318.2 1393.6 319.9 1395.3 321.7C1397.1 323.4 1399.2 327.1 1398.7 328.3C1398.2 329.6 1394.0 330.2 1392.0 330.0C1390.0 329.8 1387.3 326.9 1385.3 326.7C1383.3 326.4 1380.7 327.1 1378.7 328.3C1376.7 329.6 1374.0 334.8 1372.0 335.0C1370.0 335.2 1366.3 332.5 1365.3 330.0C1364.3 327.5 1364.3 320.3 1365.3 318.3Z M1420.3 313.3C1421.3 312.7 1426.4 314.3 1428.7 315.0C1430.9 315.7 1435.3 317.0 1435.3 318.0C1435.3 319.0 1430.3 320.7 1428.7 321.7C1427.0 322.6 1425.5 324.5 1424.5 324.2C1423.5 323.8 1422.6 320.8 1422.0 319.2C1421.4 317.5 1419.3 314.0 1420.3 313.3Z M1363.7 295.8C1364.4 294.9 1369.8 294.7 1372.0 295.3C1374.2 296.0 1377.9 298.3 1378.7 300.0C1379.4 301.7 1378.0 305.9 1377.0 306.7C1376.0 307.4 1373.5 305.8 1372.0 305.0C1370.5 304.2 1368.2 303.0 1367.0 301.7C1365.8 300.3 1362.9 296.8 1363.7 295.8Z M1347.0 358.3C1348.1 358.8 1349.5 361.8 1349.5 363.3C1349.5 364.8 1348.1 366.8 1347.0 368.3C1345.9 369.8 1343.5 371.8 1342.0 373.3C1340.5 374.8 1338.5 376.8 1337.0 378.3C1335.5 379.8 1333.4 381.8 1332.0 383.3C1330.6 384.8 1328.3 388.3 1327.8 388.3C1327.3 388.3 1327.8 385.1 1328.7 383.3C1329.5 381.6 1332.7 378.7 1333.7 376.7C1334.7 374.7 1334.3 371.5 1335.3 370.0C1336.3 368.5 1339.3 368.2 1340.3 366.7C1341.3 365.2 1341.0 361.2 1342.0 360.0C1343.0 358.8 1345.9 357.8 1347.0 358.3Z M1228.7 381.7C1229.2 381.2 1233.3 384.9 1235.3 386.7C1237.3 388.4 1240.0 392.6 1242.0 393.3C1244.0 394.1 1246.7 392.7 1248.7 391.7C1250.7 390.7 1253.1 388.2 1255.3 386.7C1257.6 385.2 1261.2 383.2 1263.7 381.7C1266.2 380.2 1270.0 376.7 1272.0 376.7C1274.0 376.7 1276.5 379.7 1277.0 381.7C1277.5 383.7 1276.3 387.5 1275.3 390.0C1274.3 392.5 1272.1 395.8 1270.3 398.3C1268.6 400.8 1265.7 404.4 1263.7 406.7C1261.7 408.9 1259.0 411.6 1257.0 413.3C1255.0 415.1 1251.6 418.3 1250.3 418.3C1249.1 418.3 1248.2 415.3 1248.7 413.3C1249.2 411.3 1252.2 407.2 1253.7 405.0C1255.2 402.8 1258.4 399.6 1258.7 398.3C1258.9 397.1 1257.1 396.2 1255.3 396.7C1253.6 397.2 1249.5 401.7 1247.0 401.7C1244.5 401.7 1240.9 398.4 1238.7 396.7C1236.4 394.9 1233.5 392.2 1232.0 390.0C1230.5 387.8 1228.2 382.2 1228.7 381.7Z M1222.0 396.7C1223.0 396.4 1224.3 399.9 1225.3 401.7C1226.3 403.4 1228.9 406.8 1228.7 408.3C1228.4 409.8 1224.9 410.4 1223.7 411.7C1222.4 412.9 1221.1 414.4 1220.3 416.7C1219.6 418.9 1219.7 424.4 1218.7 426.7C1217.7 428.9 1213.9 432.4 1213.7 431.7C1213.4 430.9 1216.5 424.7 1217.0 421.7C1217.5 418.7 1216.8 414.4 1217.0 411.7C1217.2 408.9 1217.9 405.6 1218.7 403.3C1219.4 401.1 1221.0 396.9 1222.0 396.7Z M1202.0 428.3C1203.8 428.1 1208.2 428.8 1208.7 430.0C1209.2 431.2 1205.3 434.7 1205.3 436.7C1205.3 438.7 1207.9 441.3 1208.7 443.3C1209.4 445.3 1209.6 447.8 1210.3 450.0C1211.1 452.2 1212.9 455.8 1213.7 458.3C1214.4 460.8 1215.3 464.4 1215.3 466.7C1215.3 468.9 1214.7 471.8 1213.7 473.3C1212.7 474.8 1210.4 476.4 1208.7 476.7C1206.9 476.9 1203.8 476.2 1202.0 475.0C1200.2 473.8 1198.8 469.1 1197.0 468.3C1195.2 467.6 1192.1 468.8 1190.3 470.0C1188.6 471.2 1186.6 476.9 1185.3 476.7C1184.1 476.4 1181.5 470.8 1182.0 468.3C1182.5 465.8 1187.7 462.8 1188.7 460.0C1189.7 457.2 1187.9 453.2 1188.7 450.0C1189.4 446.8 1192.4 441.1 1193.7 438.3C1194.9 435.6 1195.8 433.2 1197.0 431.7C1198.2 430.2 1200.2 428.6 1202.0 428.3Z M1223.7 433.3C1224.9 433.8 1228.6 440.9 1230.3 441.7C1232.1 442.4 1234.1 438.1 1235.3 438.3C1236.6 438.6 1238.3 441.6 1238.7 443.3C1239.0 445.1 1238.8 448.6 1237.8 450.0C1236.8 451.4 1233.4 453.0 1232.0 452.5C1230.6 452.0 1229.4 448.3 1228.7 446.7C1227.9 445.0 1228.0 442.9 1227.0 441.7C1226.0 440.4 1222.5 439.6 1222.0 438.3C1221.5 437.1 1222.4 432.8 1223.7 433.3Z M1210.3 478.3C1210.3 479.1 1208.2 483.0 1207.0 485.0C1205.8 487.0 1203.8 490.2 1202.0 491.7C1200.2 493.2 1197.3 494.2 1195.3 495.0C1193.3 495.8 1190.7 495.9 1188.7 496.7C1186.7 497.4 1184.0 499.0 1182.0 500.0C1180.0 501.0 1176.8 502.3 1175.3 503.3C1173.8 504.3 1173.0 506.9 1172.0 506.7C1171.0 506.4 1168.2 503.2 1168.7 501.7C1169.2 500.2 1173.3 498.2 1175.3 496.7C1177.3 495.2 1180.0 492.4 1182.0 491.7C1184.0 490.9 1186.4 491.7 1188.7 491.7C1190.9 491.7 1194.8 492.4 1197.0 491.7C1199.2 490.9 1202.2 488.4 1203.7 486.7C1205.2 484.9 1206.0 481.2 1207.0 480.0C1208.0 478.8 1210.3 477.6 1210.3 478.3Z M1082.0 480.0C1084.0 478.5 1088.5 477.4 1092.0 476.7C1095.5 475.9 1101.8 475.5 1105.3 475.0C1108.8 474.5 1112.3 473.6 1115.3 473.3C1118.3 473.1 1121.8 472.8 1125.3 473.3C1128.8 473.8 1136.9 475.2 1138.7 476.7C1140.4 478.2 1138.2 481.8 1137.0 483.3C1135.8 484.8 1132.1 485.2 1130.3 486.7C1128.6 488.2 1125.1 491.6 1125.3 493.3C1125.6 495.1 1130.2 498.3 1132.0 498.3C1133.8 498.3 1135.5 493.3 1137.0 493.3C1138.5 493.3 1140.8 496.3 1142.0 498.3C1143.2 500.3 1144.3 506.4 1145.3 506.7C1146.3 506.9 1147.2 501.8 1148.7 500.0C1150.2 498.2 1153.1 496.0 1155.3 495.0C1157.6 494.0 1161.7 492.8 1163.7 493.3C1165.7 493.8 1168.4 496.6 1168.7 498.3C1168.9 500.1 1165.8 503.0 1165.3 505.0C1164.8 507.0 1164.8 509.9 1165.3 511.7C1165.8 513.4 1167.7 514.9 1168.7 516.7C1169.7 518.4 1171.8 521.3 1172.0 523.3C1172.2 525.3 1170.2 530.5 1170.3 530.0C1170.5 529.5 1172.3 521.0 1172.8 520.0C1173.3 519.0 1174.0 521.8 1173.7 523.3C1173.3 524.8 1171.6 528.2 1170.3 530.0C1169.1 531.8 1166.6 533.5 1165.3 535.0C1164.1 536.5 1163.0 540.0 1162.0 540.0C1161.0 540.0 1160.2 536.8 1158.7 535.0C1157.2 533.2 1154.0 529.8 1152.0 528.3C1150.0 526.8 1147.1 525.2 1145.3 525.0C1143.6 524.8 1141.2 525.9 1140.3 526.7C1139.5 527.4 1139.5 528.0 1139.5 530.0C1139.5 532.0 1139.6 537.5 1140.3 540.0C1141.1 542.5 1143.2 544.9 1144.5 546.7C1145.8 548.4 1147.3 549.9 1148.7 551.7C1150.0 553.4 1152.4 556.5 1153.7 558.3C1154.9 560.2 1156.8 563.2 1157.0 564.2C1157.2 565.2 1156.3 565.6 1155.3 565.0C1154.3 564.4 1151.7 561.5 1150.3 560.0C1149.0 558.5 1147.4 556.8 1146.2 555.0C1144.9 553.2 1143.1 550.3 1142.0 548.3C1140.9 546.3 1139.3 544.2 1138.7 541.7C1138.0 539.2 1137.6 532.9 1137.8 531.7C1138.1 530.4 1140.2 534.1 1140.3 533.3C1140.5 532.6 1139.4 528.9 1138.7 526.7C1137.9 524.4 1136.3 520.3 1135.3 518.3C1134.3 516.3 1133.2 513.8 1132.0 513.3C1130.8 512.8 1128.0 515.5 1127.0 515.0C1126.0 514.5 1126.1 512.0 1125.3 510.0C1124.6 508.0 1123.1 503.9 1122.0 501.7C1120.9 499.4 1119.3 495.8 1117.8 495.0C1116.3 494.2 1114.1 496.2 1112.0 496.7C1109.9 497.2 1106.2 498.3 1103.7 498.3C1101.2 498.3 1097.8 496.4 1095.3 496.7C1092.8 496.9 1089.0 498.8 1087.0 500.0C1085.0 501.2 1083.2 505.5 1082.0 505.0C1080.8 504.5 1079.2 499.4 1078.7 496.7C1078.2 493.9 1078.2 489.2 1078.7 486.7C1079.2 484.2 1080.0 481.5 1082.0 480.0Z M1059.5 498.3C1060.0 497.3 1062.8 495.4 1063.7 496.7C1064.5 497.9 1064.6 503.4 1065.3 506.7C1066.1 509.9 1067.5 514.8 1068.7 518.3C1069.8 521.8 1071.6 526.8 1072.8 530.0C1074.1 533.2 1076.4 538.0 1077.0 540.0C1077.6 542.0 1077.5 543.6 1077.0 543.3C1076.5 543.1 1074.7 540.3 1073.7 538.3C1072.7 536.3 1071.3 532.5 1070.3 530.0C1069.3 527.5 1068.0 524.2 1067.0 521.7C1066.0 519.2 1064.7 516.1 1063.7 513.3C1062.7 510.6 1061.0 505.6 1060.3 503.3C1059.7 501.1 1059.0 499.3 1059.5 498.3Z M1052.0 461.7C1052.9 460.3 1056.7 459.2 1058.7 459.2C1060.7 459.2 1064.6 460.3 1065.3 461.7C1066.1 463.0 1064.7 466.6 1063.7 468.3C1062.7 470.1 1059.9 472.1 1058.7 473.3C1057.4 474.6 1056.3 476.4 1055.3 476.7C1054.3 476.9 1052.4 476.2 1052.0 475.0C1051.6 473.8 1052.8 470.3 1052.8 468.3C1052.8 466.3 1051.1 463.0 1052.0 461.7Z M1048.7 493.3C1049.2 495.3 1053.7 497.6 1055.3 498.3C1057.0 499.1 1058.0 499.1 1059.5 498.3C1061.0 497.6 1064.7 495.1 1065.3 493.3C1066.0 491.6 1064.7 488.2 1063.7 486.7C1062.7 485.2 1060.4 483.6 1058.7 483.3C1056.9 483.1 1053.5 483.5 1052.0 485.0C1050.5 486.5 1048.2 491.3 1048.7 493.3Z M1075.3 475.0C1075.8 473.5 1079.8 470.5 1082.0 470.0C1084.2 469.5 1087.8 470.7 1090.3 471.7C1092.8 472.7 1096.9 475.4 1098.7 476.7C1100.4 477.9 1101.5 478.0 1102.0 480.0C1102.5 482.0 1103.0 487.8 1102.0 490.0C1101.0 492.2 1096.8 495.0 1095.3 495.0C1093.8 495.0 1093.5 491.8 1092.0 490.0C1090.5 488.2 1087.3 484.8 1085.3 483.3C1083.3 481.8 1080.2 481.2 1078.7 480.0C1077.2 478.8 1074.8 476.5 1075.3 475.0Z M1095.3 500.0C1094.8 501.1 1090.5 503.5 1088.7 505.0C1086.8 506.5 1084.0 508.2 1082.8 510.0C1081.7 511.8 1080.8 514.7 1081.2 516.7C1081.5 518.7 1084.9 521.1 1085.3 523.3C1085.8 525.6 1084.7 529.4 1084.0 531.7C1083.3 533.9 1081.7 536.8 1080.7 538.3C1079.7 539.9 1077.9 542.2 1077.3 542.0C1076.8 541.8 1076.6 538.5 1077.0 536.7C1077.4 534.9 1079.4 531.9 1080.0 530.0C1080.6 528.1 1081.6 526.0 1081.2 524.2C1080.8 522.3 1077.7 519.8 1077.3 517.5C1077.0 515.2 1077.8 511.3 1079.0 509.2C1080.2 507.0 1083.4 505.0 1085.3 503.3C1087.3 501.7 1090.5 498.5 1092.0 498.0C1093.5 497.5 1095.8 498.9 1095.3 500.0Z M1220.3 623.3C1221.8 621.7 1225.5 618.9 1227.0 617.5C1228.5 616.1 1229.1 614.3 1230.3 614.2C1231.6 614.0 1233.8 616.8 1235.3 616.7C1236.8 616.5 1238.8 614.6 1240.3 613.3C1241.8 612.1 1243.8 609.2 1245.3 608.3C1246.8 607.5 1248.6 607.2 1250.3 607.5C1252.1 607.8 1255.2 609.8 1257.0 610.0C1258.8 610.2 1261.5 608.4 1262.0 609.2C1262.5 609.9 1259.8 613.4 1260.3 615.0C1260.8 616.6 1263.6 618.5 1265.3 620.0C1267.1 621.5 1270.4 624.5 1272.0 625.0C1273.6 625.5 1275.2 625.1 1276.2 623.3C1277.2 621.6 1278.0 616.1 1278.7 613.3C1279.3 610.6 1279.7 606.0 1280.3 605.0C1281.0 604.0 1282.2 605.2 1282.8 606.7C1283.5 608.2 1283.8 612.8 1284.5 615.0C1285.2 617.2 1287.2 619.4 1287.8 621.7C1288.5 623.9 1289.0 627.8 1288.7 630.0C1288.3 632.2 1286.6 635.2 1285.3 636.7C1284.1 638.2 1281.6 640.2 1280.3 640.0C1279.1 639.8 1278.2 636.5 1277.0 635.0C1275.8 633.5 1273.8 631.2 1272.0 630.0C1270.2 628.8 1267.3 627.9 1265.3 626.7C1263.3 625.4 1260.7 622.7 1258.7 621.7C1256.7 620.7 1253.8 620.5 1252.0 620.0C1250.2 619.5 1248.5 618.3 1247.0 618.3C1245.5 618.3 1243.2 619.2 1242.0 620.0C1240.8 620.8 1239.9 623.1 1238.7 623.3C1237.4 623.6 1235.2 621.7 1233.7 621.7C1232.2 621.7 1230.2 622.3 1228.7 623.3C1227.2 624.3 1225.2 627.3 1223.7 628.3C1222.2 629.3 1220.2 629.0 1218.7 630.0C1217.2 631.0 1214.7 634.5 1213.7 635.0C1212.7 635.5 1211.5 634.3 1212.0 633.3C1212.5 632.3 1215.8 629.8 1217.0 628.3C1218.2 626.8 1218.8 625.0 1220.3 623.3Z M1254.5 651.7C1255.5 649.7 1260.1 648.4 1262.0 646.7C1263.9 644.9 1265.8 640.2 1267.0 640.0C1268.2 639.8 1268.6 644.5 1270.3 645.0C1272.1 645.5 1276.5 642.8 1278.7 643.3C1280.8 643.8 1283.8 646.6 1284.5 648.3C1285.2 650.1 1284.3 653.0 1283.7 655.0C1283.0 657.0 1281.6 659.9 1280.3 661.7C1279.1 663.4 1276.3 664.9 1275.3 666.7C1274.3 668.4 1274.7 672.8 1273.7 673.3C1272.7 673.8 1269.9 671.5 1268.7 670.0C1267.4 668.5 1266.8 663.8 1265.3 663.3C1263.8 662.8 1260.2 667.2 1258.7 666.7C1257.2 666.2 1256.0 662.2 1255.3 660.0C1254.7 657.8 1253.5 653.7 1254.5 651.7Z M1278.7 670.0C1280.2 668.0 1283.1 666.0 1285.3 665.0C1287.6 664.0 1291.7 663.1 1293.7 663.3C1295.7 663.6 1298.4 665.4 1298.7 666.7C1298.9 667.9 1296.8 670.4 1295.3 671.7C1293.8 672.9 1290.2 673.8 1288.7 675.0C1287.2 676.2 1286.6 678.5 1285.3 680.0C1284.1 681.5 1281.8 683.5 1280.3 685.0C1278.8 686.5 1276.6 689.8 1275.3 690.0C1274.1 690.2 1272.0 688.4 1272.0 686.7C1272.0 684.9 1274.3 680.8 1275.3 678.3C1276.3 675.8 1277.2 672.0 1278.7 670.0Z M1250.3 675.0C1250.8 674.0 1256.7 673.1 1258.7 673.3C1260.7 673.6 1262.7 674.9 1263.7 676.7C1264.7 678.4 1266.1 683.8 1265.3 685.0C1264.6 686.2 1260.2 685.8 1258.7 685.0C1257.2 684.2 1256.6 681.5 1255.3 680.0C1254.1 678.5 1249.8 676.0 1250.3 675.0Z M1186.2 653.3C1186.0 651.1 1186.1 648.4 1187.0 646.7C1187.9 644.9 1189.8 643.2 1192.0 641.7C1194.2 640.2 1199.0 637.9 1202.0 636.7C1205.0 635.4 1210.0 633.3 1212.0 633.3C1214.0 633.3 1215.8 635.7 1215.3 636.7C1214.8 637.7 1211.2 639.0 1208.7 640.0C1206.2 641.0 1200.9 642.1 1198.7 643.3C1196.4 644.6 1194.8 646.6 1193.7 648.3C1192.5 650.1 1191.4 652.8 1191.2 655.0C1190.9 657.2 1191.6 661.1 1192.0 663.3C1192.4 665.6 1193.2 667.8 1193.7 670.0C1194.2 672.2 1194.8 676.5 1195.3 678.3C1195.8 680.2 1197.5 682.2 1197.0 682.5C1196.5 682.8 1193.0 681.9 1192.0 680.0C1191.0 678.1 1191.0 672.8 1190.3 670.0C1189.7 667.2 1188.5 664.2 1187.8 661.7C1187.2 659.2 1186.3 655.6 1186.2 653.3Z" fill="#7eb24f"/>
<path d="M1108.7 268.3C1110.7 266.7 1117.5 264.9 1122.0 264.2C1126.5 263.4 1135.4 262.7 1138.7 263.3C1141.9 264.0 1144.7 267.1 1143.7 268.3C1142.7 269.6 1135.8 270.9 1132.0 271.7C1128.2 272.4 1122.2 272.8 1118.7 273.3C1115.2 273.8 1110.2 275.8 1108.7 275.0C1107.2 274.2 1106.7 270.0 1108.7 268.3Z M1148.7 258.3C1150.2 257.5 1158.0 257.5 1162.0 257.5C1166.0 257.5 1171.6 258.1 1175.3 258.3C1179.1 258.6 1185.0 258.5 1187.0 259.2C1189.0 259.8 1190.4 261.8 1188.7 262.5C1186.9 263.2 1179.3 263.8 1175.3 264.2C1171.3 264.5 1165.5 265.1 1162.0 265.0C1158.5 264.9 1154.0 264.3 1152.0 263.3C1150.0 262.3 1147.2 259.2 1148.7 258.3Z M1088.7 275.0C1090.0 274.2 1097.0 273.7 1098.7 274.2C1100.3 274.7 1100.9 277.6 1099.5 278.3C1098.1 279.1 1091.1 279.7 1089.5 279.2C1087.9 278.7 1087.3 275.8 1088.7 275.0Z M1143.7 498.3C1144.7 497.1 1149.5 495.0 1152.0 495.0C1154.5 495.0 1158.1 497.1 1160.3 498.3C1162.6 499.6 1166.5 501.6 1167.0 503.3C1167.5 505.1 1163.7 508.0 1163.7 510.0C1163.7 512.0 1167.0 514.9 1167.0 516.7C1167.0 518.4 1164.9 521.7 1163.7 521.7C1162.4 521.7 1160.2 517.9 1158.7 516.7C1157.2 515.4 1155.2 514.6 1153.7 513.3C1152.2 512.1 1149.9 509.8 1148.7 508.3C1147.4 506.8 1146.1 504.8 1145.3 503.3C1144.6 501.8 1142.7 499.6 1143.7 498.3Z M1124.5 495.0C1125.0 494.0 1127.5 492.6 1128.7 493.3C1129.8 494.1 1131.0 497.8 1132.0 500.0C1133.0 502.2 1135.2 506.6 1135.3 508.3C1135.5 510.1 1133.8 512.2 1132.8 511.7C1131.8 511.2 1129.8 506.8 1128.7 505.0C1127.5 503.2 1126.0 501.5 1125.3 500.0C1124.7 498.5 1124.0 496.0 1124.5 495.0Z" fill="#eae691"/>
<path d="M595.3 243.0C597.3 239.8 609.8 232.8 615.3 228.7C620.8 224.5 626.0 217.6 632.0 215.3C638.0 213.0 648.3 214.6 655.3 213.3C662.3 212.0 671.2 208.1 678.7 206.7C686.2 205.3 696.8 204.6 705.3 204.0C713.8 203.4 727.3 202.7 735.3 203.0C743.3 203.3 754.6 204.8 758.7 206.3C762.8 207.8 758.2 211.4 762.7 213.0C767.2 214.6 785.9 215.1 788.7 216.7C791.5 218.2 783.8 221.3 781.3 223.3C778.8 225.3 772.9 227.8 772.0 230.0C771.1 232.2 776.7 235.8 775.3 238.0C773.9 240.2 763.7 242.6 762.7 244.7C761.7 246.8 769.2 249.5 768.7 252.0C768.2 254.5 760.3 258.4 759.3 261.3C758.3 264.2 763.0 267.8 762.0 271.3C761.0 274.8 753.7 281.7 752.7 284.7C751.7 287.7 756.4 289.2 755.3 291.3C754.2 293.4 748.3 296.2 745.3 298.7C742.3 301.2 738.8 305.5 735.3 308.0C731.8 310.5 726.0 313.2 722.0 315.3C718.0 317.4 712.2 319.5 708.7 322.0C705.2 324.5 701.2 329.0 698.7 332.0C696.2 335.0 693.8 339.7 692.0 342.0C690.2 344.3 689.0 347.4 687.0 347.3C685.0 347.2 681.3 344.2 678.7 341.3C676.0 338.4 671.8 332.0 669.3 328.0C666.8 324.0 663.6 318.7 662.0 314.7C660.4 310.7 660.2 304.8 658.7 301.3C657.2 297.8 652.5 294.3 652.0 291.3C651.5 288.3 655.6 284.3 655.3 281.3C655.1 278.3 652.3 274.2 650.3 271.3C648.3 268.4 645.2 264.2 642.0 262.0C638.8 259.8 632.7 258.0 628.7 256.7C624.7 255.4 619.3 254.3 615.3 253.3C611.3 252.3 605.0 251.6 602.0 250.0C599.0 248.4 593.3 246.2 595.3 243.0Z M533.7 216.3C535.2 214.6 543.4 212.7 548.7 211.3C553.9 210.0 561.7 208.2 568.7 207.3C575.7 206.4 588.3 205.5 595.3 205.3C602.3 205.2 610.1 205.4 615.3 206.3C620.6 207.2 630.3 209.1 630.3 211.3C630.3 213.6 620.1 218.6 615.3 221.3C610.6 224.1 603.7 227.7 598.7 229.7C593.7 231.7 585.2 232.2 582.0 234.7C578.8 237.2 579.8 243.7 577.0 246.3C574.2 248.9 567.4 251.4 563.7 252.0C559.9 252.6 554.5 251.5 552.0 250.0C549.5 248.5 548.2 244.8 547.0 242.0C545.8 239.2 544.9 234.2 543.7 231.3C542.4 228.5 540.2 225.2 538.7 223.0C537.2 220.8 532.2 218.1 533.7 216.3Z" fill="#f3f9f1"/>
<path d="M532.0 403.3C532.5 402.1 537.8 399.2 540.3 398.3C542.8 397.5 546.4 396.8 548.7 397.5C550.9 398.2 554.8 402.0 555.3 403.3C555.8 404.7 553.8 406.5 552.0 406.7C550.2 406.8 545.9 404.2 543.7 404.2C541.4 404.2 538.8 406.8 537.0 406.7C535.2 406.5 531.5 404.6 532.0 403.3Z M547.0 410.0C548.0 408.5 550.8 407.6 552.0 408.3C553.2 409.1 554.3 414.5 555.3 415.0C556.3 415.5 557.2 412.7 558.7 411.7C560.2 410.7 563.6 408.3 565.3 408.3C567.1 408.3 569.8 410.4 570.3 411.7C570.8 412.9 569.7 415.7 568.7 416.7C567.7 417.7 564.7 417.3 563.7 418.3C562.7 419.3 563.0 422.3 562.0 423.3C561.0 424.3 558.2 425.5 557.0 425.0C555.8 424.5 554.9 420.2 553.7 420.0C552.4 419.8 549.9 423.6 548.7 423.3C547.4 423.1 545.6 420.3 545.3 418.3C545.1 416.3 546.0 411.5 547.0 410.0Z M572.0 418.3C573.2 417.6 580.5 415.8 582.0 415.8C583.5 415.8 583.2 417.6 582.0 418.3C580.8 419.1 575.2 420.8 573.7 420.8C572.2 420.8 570.8 419.1 572.0 418.3Z M562.0 425.0C563.0 424.5 567.8 423.2 568.7 423.3C569.5 423.5 568.8 425.3 567.8 425.8C566.8 426.3 562.9 426.8 562.0 426.7C561.1 426.5 561.0 425.5 562.0 425.0Z M510.3 376.7C510.6 375.8 512.7 374.8 513.7 375.8C514.7 376.8 516.4 381.3 517.0 383.3C517.6 385.3 518.1 388.4 517.8 389.2C517.6 389.9 516.2 389.5 515.3 388.3C514.5 387.2 512.8 383.4 512.0 381.7C511.2 379.9 510.1 377.5 510.3 376.7Z M455.3 340.0C455.3 338.9 458.8 335.5 460.3 335.0C461.8 334.5 463.3 336.8 465.3 336.7C467.3 336.5 473.7 333.8 473.7 334.2C473.7 334.5 467.3 337.9 465.3 339.2C463.3 340.4 461.8 342.4 460.3 342.5C458.8 342.6 455.3 341.1 455.3 340.0Z M430.3 316.7C431.1 315.7 434.8 314.0 437.0 313.3C439.2 312.7 443.6 312.1 445.3 312.5C447.1 312.9 449.2 315.0 448.7 315.8C448.2 316.7 443.8 317.5 442.0 318.3C440.2 319.2 438.5 321.4 437.0 321.7C435.5 321.9 433.0 320.8 432.0 320.0C431.0 319.2 429.6 317.7 430.3 316.7Z M928.7 569.2C929.6 568.0 933.5 567.2 934.5 567.5C935.5 567.8 935.7 569.6 935.3 570.8C935.0 572.1 933.0 575.2 932.0 575.8C931.0 576.5 928.8 576.0 928.3 575.0C927.8 574.0 927.7 570.3 928.7 569.2Z M917.0 422.5C917.1 421.3 918.8 419.2 919.5 417.5C920.2 415.8 920.9 412.9 922.0 411.2C923.1 409.6 925.3 407.1 927.0 406.2C928.7 405.4 931.9 405.2 933.2 405.6C934.6 406.0 934.8 408.1 935.8 408.8C936.7 409.4 938.0 410.2 939.5 410.0C941.0 409.8 944.1 408.3 945.8 407.5C947.4 406.7 950.2 404.2 950.8 404.4C951.3 404.6 950.4 407.5 949.5 408.8C948.6 410.0 944.7 411.4 944.5 412.5C944.3 413.6 946.9 415.3 948.2 416.2C949.6 417.2 951.8 418.0 953.2 418.8C954.8 419.5 957.2 420.3 958.2 421.2C959.3 422.2 960.3 424.2 960.1 425.0C959.9 425.8 958.6 426.6 957.0 426.9C955.4 427.2 951.8 427.0 949.5 426.9C947.2 426.8 944.2 426.6 942.0 426.2C939.8 425.9 936.6 424.5 934.5 424.4C932.4 424.3 929.9 425.2 928.2 425.6C926.6 426.0 924.7 426.9 923.2 426.9C921.8 426.9 919.8 426.3 918.9 425.6C917.9 425.0 916.9 423.7 917.0 422.5Z M978.2 413.8C978.4 412.1 980.5 410.0 982.0 408.8C983.5 407.5 986.2 406.0 988.2 405.6C990.3 405.2 994.4 405.6 995.8 406.2C997.1 406.9 997.4 408.9 997.0 410.0C996.6 411.1 994.0 412.4 993.2 413.8C992.5 415.1 991.8 417.2 992.0 418.8C992.2 420.2 993.4 422.4 994.5 423.8C995.6 425.1 998.6 426.0 999.5 427.5C1000.4 429.0 1000.9 431.9 1000.8 433.8C1000.6 435.6 999.2 438.5 998.2 440.0C997.3 441.5 995.8 443.4 994.5 443.8C993.2 444.1 990.8 443.4 989.5 442.5C988.2 441.6 986.1 439.2 985.8 437.5C985.4 435.8 987.2 433.1 987.0 431.2C986.8 429.4 985.4 426.7 984.5 425.0C983.6 423.3 981.7 421.7 980.8 420.0C979.8 418.3 978.1 415.4 978.2 413.8Z M848.7 352.0C849.4 352.8 853.6 354.2 855.3 355.0C857.1 355.8 858.8 356.2 860.3 357.0C861.8 357.8 864.1 358.6 865.3 360.0C866.6 361.4 867.5 365.3 868.7 366.7C869.8 368.0 871.3 368.9 872.8 369.2C874.3 369.4 876.9 368.9 878.7 368.3C880.4 367.8 882.9 366.8 884.5 365.3C886.1 363.9 888.0 360.0 889.5 358.7C891.0 357.4 893.2 357.7 894.5 356.7C895.8 355.7 896.2 353.0 897.8 352.0C899.5 351.0 902.7 350.8 905.3 350.0C908.0 349.2 912.8 347.6 915.3 347.0C917.8 346.4 922.0 346.2 922.0 345.8C922.0 345.5 917.8 344.6 915.3 344.7C912.8 344.7 907.8 346.2 905.3 346.0C902.8 345.8 899.9 344.5 898.7 343.3C897.4 342.2 897.0 339.8 897.0 338.3C897.0 336.8 897.9 334.8 898.7 333.3C899.4 331.8 900.8 329.8 902.0 328.3C903.2 326.8 906.1 324.7 907.0 323.3C907.9 322.0 908.7 320.0 908.2 319.2C907.7 318.3 905.1 317.4 903.7 317.5C902.2 317.6 899.9 318.9 898.7 320.0C897.4 321.1 896.6 323.5 895.3 325.0C894.1 326.5 891.8 328.5 890.3 330.0C888.8 331.5 886.3 333.2 885.3 335.0C884.3 336.8 883.7 339.7 883.7 341.7C883.7 343.7 884.6 346.8 885.3 348.3C886.1 349.9 888.5 350.5 888.7 352.0C888.9 353.5 887.7 356.6 886.7 358.3C885.7 360.0 883.6 362.2 882.0 363.3C880.4 364.5 877.5 366.0 876.2 365.8C874.8 365.7 873.8 363.9 872.8 362.5C871.8 361.1 870.5 358.4 869.5 356.7C868.5 354.9 867.3 351.8 866.2 350.8C865.0 349.8 863.6 350.2 862.0 350.0C860.4 349.8 857.1 349.2 855.3 349.2C853.6 349.1 851.3 349.2 850.3 349.7C849.3 350.1 847.9 351.2 848.7 352.0Z M932.0 311.7C932.0 312.4 935.8 314.9 937.0 316.7C938.2 318.4 938.8 322.0 940.3 323.3C941.8 324.7 945.5 326.2 947.0 325.8C948.5 325.5 948.8 322.0 950.3 320.8C951.8 319.7 955.8 319.5 957.0 318.3C958.2 317.2 959.2 314.0 958.7 313.3C958.2 312.7 955.2 313.8 953.7 314.2C952.2 314.5 950.4 315.8 948.7 315.8C946.9 315.8 943.8 314.8 942.0 314.2C940.2 313.5 938.5 312.0 937.0 311.7C935.5 311.3 932.0 310.9 932.0 311.7Z M980.8 470.0C981.1 469.2 983.4 467.8 984.5 468.1C985.6 468.5 986.9 471.1 988.2 472.5C989.6 473.9 991.6 476.2 993.2 477.5C994.9 478.8 997.6 480.5 999.5 481.2C1001.4 482.0 1004.6 481.8 1005.8 482.5C1006.9 483.2 1007.4 485.3 1007.0 486.2C1006.6 487.2 1004.8 488.3 1003.2 488.8C1001.8 489.2 998.7 489.8 997.0 489.4C995.3 489.0 993.3 487.5 992.0 486.2C990.7 485.0 989.4 482.8 988.2 481.2C987.1 479.8 985.4 477.5 984.5 476.2C983.6 475.0 982.6 474.1 982.0 473.1C981.4 472.2 980.4 470.8 980.8 470.0Z M1154.5 380.8C1155.5 379.8 1159.9 376.9 1162.0 375.0C1164.1 373.1 1167.0 370.1 1168.7 368.3C1170.3 366.6 1172.3 363.5 1172.8 363.3C1173.3 363.2 1172.9 365.9 1172.0 367.5C1171.1 369.1 1168.8 372.3 1167.0 374.2C1165.2 376.0 1162.1 378.8 1160.3 380.0C1158.6 381.2 1156.2 381.9 1155.3 382.0C1154.5 382.1 1153.5 381.9 1154.5 380.8Z" fill="#1260c4"/>
<path d="M320.8 309.0q4.0 -6.5 7.2 0M326.5 308.5q2.9 -4.6 5.4 0.8M361.0 310.5q3.2 -6.3 5.8 0M365.6 310.0q2.3 -4.5 4.4 0.8M1133.7 304.1q3.3 -7.7 6.1 0M1138.6 303.6q2.4 -5.5 4.5 0.8M1154.2 306.7q3.8 -8.3 6.9 0M1159.7 306.2q2.7 -5.9 5.1 0.8M1389.6 306.8q3.2 -7.2 5.8 0M1394.2 306.3q2.3 -5.1 4.3 0.8M1126.7 326.7q2.9 -8.0 5.3 0M1130.9 326.2q2.1 -5.7 4.0 0.8M1153.9 330.2q2.8 -6.9 5.0 0M1157.9 329.7q2.0 -4.9 3.8 0.8M1283.4 322.3q3.7 -6.6 6.8 0M1288.9 321.8q2.7 -4.6 5.1 0.8M401.6 346.9q3.7 -7.5 6.7 0M407.0 346.4q2.7 -5.3 5.0 0.8M1143.3 340.2q3.1 -6.8 5.6 0M1147.9 339.7q2.3 -4.8 4.2 0.8M1281.5 339.2q3.0 -6.6 5.4 0M1285.9 338.7q2.2 -4.6 4.1 0.8M409.5 356.0q4.0 -6.1 7.2 0M415.3 355.5q2.9 -4.3 5.4 0.8M440.6 363.1q2.9 -6.0 5.4 0M444.9 362.6q2.1 -4.2 4.0 0.8M471.4 360.3q3.3 -8.3 6.1 0M476.3 359.8q2.4 -5.8 4.6 0.8M485.0 360.7q3.0 -7.9 5.5 0M489.4 360.2q2.2 -5.6 4.1 0.8M1178.3 358.4q4.1 -8.0 7.5 0M1184.2 357.9q3.0 -5.6 5.6 0.8M1249.6 357.5q3.6 -6.9 6.6 0M1254.9 357.0q2.6 -4.9 4.9 0.8M442.7 376.9q4.1 -6.7 7.5 0M448.7 376.4q3.0 -4.7 5.6 0.8M466.3 373.6q3.9 -7.1 7.2 0M472.1 373.1q2.9 -5.0 5.4 0.8M478.8 375.9q3.8 -6.2 6.8 0M484.3 375.4q2.7 -4.4 5.1 0.8M592.0 379.6q3.8 -7.8 7.0 0M597.6 379.1q2.8 -5.5 5.2 0.8M1055.6 381.6q3.4 -7.5 6.1 0M1060.5 381.1q2.4 -5.3 4.6 0.8M1176.1 373.6q3.5 -7.2 6.3 0M1181.1 373.1q2.5 -5.1 4.7 0.8M1241.7 372.4q3.8 -6.7 7.0 0M1247.3 371.9q2.8 -4.8 5.2 0.8M442.1 391.4q3.2 -6.4 5.9 0M446.8 390.9q2.4 -4.5 4.4 0.8M475.9 394.3q3.3 -6.1 6.0 0M480.7 393.8q2.4 -4.3 4.5 0.8M497.0 397.3q3.1 -6.4 5.6 0M501.5 396.8q2.2 -4.5 4.2 0.8M545.5 392.4q3.7 -6.2 6.8 0M550.9 391.9q2.7 -4.4 5.1 0.8M561.8 397.4q3.4 -8.1 6.1 0M566.7 396.9q2.4 -5.7 4.6 0.8M589.2 390.6q3.7 -6.9 6.8 0M594.7 390.1q2.7 -4.9 5.1 0.8M1050.4 396.1q2.8 -6.4 5.1 0M1054.4 395.6q2.0 -4.5 3.8 0.8M1064.9 392.0q2.8 -6.7 5.1 0M1069.0 391.5q2.0 -4.8 3.8 0.8M1111.4 396.2q3.3 -7.7 6.1 0M1116.3 395.7q2.4 -5.4 4.6 0.8M1155.9 391.9q3.9 -7.5 7.1 0M1161.6 391.4q2.9 -5.3 5.4 0.8M1168.1 391.4q3.8 -6.5 7.0 0M1173.7 390.9q2.8 -4.6 5.2 0.8M1199.5 396.5q3.7 -7.0 6.7 0M1204.9 396.0q2.7 -4.9 5.1 0.8M491.4 411.6q3.4 -7.1 6.2 0M496.4 411.1q2.5 -5.0 4.7 0.8M502.9 411.4q4.0 -7.6 7.3 0M508.7 410.9q2.9 -5.4 5.5 0.8M1198.1 411.8q3.5 -7.4 6.3 0M1203.2 411.3q2.5 -5.2 4.7 0.8M450.2 429.8q3.0 -7.1 5.5 0M454.6 429.3q2.2 -5.0 4.1 0.8M470.1 428.8q2.8 -6.2 5.1 0M474.2 428.3q2.0 -4.4 3.8 0.8M505.6 429.9q2.9 -8.2 5.4 0M509.8 429.4q2.1 -5.8 4.0 0.8M1053.9 426.7q3.1 -6.8 5.6 0M1058.3 426.2q2.2 -4.8 4.2 0.8M1114.7 424.7q3.2 -6.7 5.8 0M1119.3 424.2q2.3 -4.8 4.3 0.8M508.9 441.3q3.4 -7.6 6.2 0M513.8 440.8q2.5 -5.4 4.6 0.8M560.9 441.3q3.4 -7.4 6.3 0M565.9 440.8q2.5 -5.2 4.7 0.8M987.5 448.8q4.0 -6.9 7.2 0M993.3 448.3q2.9 -4.8 5.4 0.8M1010.9 448.6q3.9 -8.5 7.2 0M1016.7 448.1q2.9 -6.0 5.4 0.8M1066.4 447.4q3.0 -7.7 5.4 0M1070.7 446.9q2.2 -5.4 4.1 0.8M1172.3 444.3q2.8 -8.5 5.0 0M1176.4 443.8q2.0 -6.0 3.8 0.8M487.4 463.8q3.6 -7.3 6.6 0M492.7 463.3q2.6 -5.2 4.9 0.8M503.8 463.1q4.0 -7.2 7.3 0M509.6 462.6q2.9 -5.1 5.5 0.8M818.9 460.7q3.3 -6.0 6.0 0M823.7 460.2q2.4 -4.2 4.5 0.8M860.2 464.2q3.2 -6.6 5.8 0M864.9 463.7q2.3 -4.6 4.4 0.8M991.9 465.1q3.3 -7.4 6.0 0M996.6 464.6q2.4 -5.2 4.5 0.8M1072.6 462.3q4.0 -7.9 7.3 0M1078.4 461.8q2.9 -5.6 5.4 0.8M1089.4 462.9q3.4 -8.1 6.2 0M1094.3 462.4q2.5 -5.7 4.6 0.8M797.8 480.8q3.9 -6.3 7.1 0M803.5 480.3q2.8 -4.4 5.3 0.8M841.0 476.9q3.8 -7.2 6.9 0M846.5 476.4q2.8 -5.1 5.2 0.8M866.8 474.9q3.9 -7.5 7.2 0M872.5 474.4q2.9 -5.3 5.4 0.8M1151.7 483.4q3.9 -8.2 7.1 0M1157.4 482.9q2.8 -5.8 5.3 0.8M827.6 491.0q2.8 -6.2 5.0 0M831.7 490.5q2.0 -4.4 3.8 0.8M865.6 494.4q3.2 -8.1 5.9 0M870.3 493.9q2.4 -5.7 4.4 0.8M888.5 493.9q3.1 -7.7 5.7 0M893.1 493.4q2.3 -5.5 4.3 0.8M826.3 517.0q3.2 -6.1 5.8 0M831.0 516.5q2.3 -4.3 4.4 0.8M868.3 513.8q3.5 -6.6 6.4 0M873.4 513.3q2.6 -4.7 4.8 0.8M796.1 527.0q3.6 -7.6 6.5 0M801.3 526.5q2.6 -5.3 4.8 0.8M927.8 525.6q4.1 -6.5 7.5 0M933.8 525.1q3.0 -4.6 5.6 0.8M905.2 549.7q2.9 -6.7 5.3 0M909.4 549.2q2.1 -4.7 3.9 0.8M927.9 548.9q3.8 -6.2 6.8 0M933.3 548.4q2.7 -4.4 5.1 0.8M892.3 559.6q3.0 -7.4 5.4 0M896.6 559.1q2.2 -5.3 4.1 0.8M892.2 578.0q3.7 -6.6 6.7 0M897.5 577.5q2.7 -4.7 5.0 0.8M653.4 601.2q3.9 -8.1 7.1 0M659.1 600.7q2.8 -5.7 5.3 0.8M613.9 613.5q3.2 -7.7 5.9 0M618.6 613.0q2.4 -5.4 4.4 0.8M914.2 616.4q3.2 -6.9 5.8 0M918.9 615.9q2.3 -4.9 4.4 0.8M652.4 633.5q3.3 -8.3 5.9 0M657.2 633.0q2.4 -5.9 4.4 0.8M1239.8 635.9q4.1 -8.5 7.4 0M1245.7 635.4q3.0 -6.0 5.5 0.8M899.2 645.7q2.9 -8.1 5.3 0M903.4 645.2q2.1 -5.7 4.0 0.8M1235.7 645.4q2.9 -7.7 5.3 0M1240.0 644.9q2.1 -5.4 4.0 0.8M906.8 661.2q3.3 -6.0 5.9 0M911.5 660.7q2.4 -4.2 4.5 0.8M1219.3 664.8q3.6 -7.9 6.6 0M1224.6 664.3q2.6 -5.6 4.9 0.8" fill="none" stroke="#5f5c2c" stroke-opacity=".5" stroke-width=".9" stroke-linecap="round"/>
<g filter="url(#cb3)" fill="#fff" opacity=".31"><path d="M379.0 360.0C405.7 360.0 402.1 357.4 427.0 382.0C451.9 406.6 455.7 405.4 462.0 442.0C468.3 478.6 464.8 477.3 448.0 504.0C431.2 530.7 435.1 518.7 406.0 531.0C376.9 543.3 379.2 548.9 351.0 545.0C322.8 541.1 328.5 542.9 312.0 518.0C295.5 493.1 298.1 493.2 296.0 462.0C293.9 430.8 292.4 438.0 305.0 414.0C317.6 390.0 315.8 398.2 338.0 382.0C360.2 365.8 352.3 360.0 379.0 360.0Z"/></g>
<g filter="url(#cb)" fill="#fff" opacity=".1"><ellipse cx="372.0" cy="420.0" rx="34.0" ry="34.0"/><ellipse cx="345.0" cy="470.0" rx="30.0" ry="30.0"/><ellipse cx="395.0" cy="480.0" rx="30.0" ry="30.0"/><ellipse cx="330.0" cy="440.0" rx="20.0" ry="20.0"/></g>
<g filter="url(#cb2)" fill="#fff" opacity=".5"><ellipse cx="394.0" cy="283.0" rx="13.0" ry="13.0"/><ellipse cx="405.0" cy="270.0" rx="13.0" ry="13.0"/><ellipse cx="416.0" cy="266.0" rx="10.0" ry="10.0"/><ellipse cx="384.0" cy="293.0" rx="11.0" ry="11.0"/><ellipse cx="410.0" cy="284.0" rx="12.0" ry="12.0"/><ellipse cx="424.0" cy="276.0" rx="10.0" ry="10.0"/></g>
<g filter="url(#cb)" fill="#fff" opacity=".22"><ellipse cx="455" cy="305" rx="75" ry="15" transform="rotate(20 455 305)"/><ellipse cx="425" cy="295" rx="32" ry="24"/><ellipse cx="548" cy="350" rx="36" ry="28"/></g>
<g filter="url(#cb)" fill="#fff" opacity=".26"><path d="M1130.0 190.0C1133.9 175.0 1137.7 181.0 1150.0 178.0C1162.3 175.0 1157.5 177.6 1171.0 180.0C1184.5 182.4 1182.7 181.8 1195.0 186.0C1207.3 190.2 1200.9 189.8 1212.0 194.0C1223.1 198.2 1221.5 194.0 1232.0 200.0C1242.5 206.0 1237.1 205.6 1247.0 214.0C1256.9 222.4 1254.8 221.7 1265.0 228.0C1275.2 234.3 1267.8 233.5 1281.0 235.0C1294.2 236.5 1294.3 231.5 1309.0 233.0C1323.7 234.5 1319.8 235.2 1330.0 240.0C1340.2 244.8 1334.6 241.8 1343.0 249.0C1351.4 256.2 1351.7 254.7 1358.0 264.0C1364.3 273.3 1366.4 270.1 1364.0 280.0C1361.6 289.9 1366.5 294.0 1350.0 297.0C1333.5 300.0 1333.6 296.3 1309.0 290.0C1284.4 283.7 1297.1 286.2 1268.0 276.0C1238.9 265.8 1243.2 264.1 1212.0 256.0C1180.8 247.9 1186.5 257.4 1164.0 249.0C1141.5 240.6 1147.2 245.7 1137.0 228.0C1126.8 210.3 1126.1 205.0 1130.0 190.0Z"/></g>
<g filter="url(#cb2)" fill="#fff" opacity=".26"><ellipse cx="1175.0" cy="193.3" rx="11.7" ry="11.7"/><ellipse cx="1193.3" cy="198.3" rx="13.0" ry="13.0"/><ellipse cx="1160.0" cy="205.0" rx="11.7" ry="11.7"/><ellipse cx="1146.7" cy="216.7" rx="11.7" ry="11.7"/><ellipse cx="1213.3" cy="205.0" rx="15.0" ry="15.0"/><ellipse cx="1230.0" cy="213.3" rx="15.0" ry="15.0"/><ellipse cx="1183.3" cy="216.7" rx="18.0" ry="18.0"/><ellipse cx="1216.7" cy="228.0" rx="18.0" ry="18.0"/><ellipse cx="1246.7" cy="230.0" rx="15.0" ry="15.0"/><ellipse cx="1266.7" cy="243.3" rx="15.0" ry="15.0"/><ellipse cx="1291.7" cy="245.0" rx="14.0" ry="14.0"/><ellipse cx="1311.7" cy="246.7" rx="14.0" ry="14.0"/><ellipse cx="1330.0" cy="258.3" rx="14.0" ry="14.0"/><ellipse cx="1341.7" cy="270.0" rx="12.0" ry="12.0"/></g>
<g filter="url(#cb)" fill="#fff" opacity=".24"><ellipse cx="1092" cy="352" rx="28" ry="20" transform="rotate(-30 1092 352)"/></g>
<g filter="url(#cb3)" fill="#fff" opacity=".29"><path d="M758.0 533.0C733.1 535.1 745.6 538.9 730.0 559.0C714.4 579.1 718.3 575.1 706.0 600.0C693.7 624.9 701.9 615.0 689.0 642.0C676.1 669.0 676.8 664.2 663.0 690.0C649.2 715.8 646.9 702.5 643.0 728.0C639.1 753.5 635.9 751.0 650.0 775.0C664.1 799.0 657.0 796.3 690.0 808.0C723.0 819.7 719.5 818.8 760.0 814.0C800.5 809.2 801.6 812.7 825.0 792.0C848.4 771.3 840.1 773.5 838.0 745.0C835.9 716.5 818.0 724.0 818.0 697.0C818.0 670.0 824.8 679.9 838.0 655.0C851.2 630.1 858.4 638.0 862.0 614.0C865.6 590.0 864.7 593.6 850.0 575.0C835.3 556.4 840.6 564.6 813.0 552.0C785.4 539.4 782.9 530.9 758.0 533.0Z"/></g>
<g filter="url(#cb)" fill="#fff" opacity=".1"><ellipse cx="752.0" cy="585.0" rx="26.0" ry="26.0"/><ellipse cx="740.0" cy="650.0" rx="34.0" ry="34.0"/><ellipse cx="712.0" cy="725.0" rx="36.0" ry="36.0"/><ellipse cx="760.0" cy="740.0" rx="34.0" ry="34.0"/><ellipse cx="790.0" cy="640.0" rx="26.0" ry="26.0"/></g>
<g filter="url(#cb)" fill="#fff" opacity=".3"><ellipse cx="893.0" cy="617.0" rx="30.0" ry="30.0"/><ellipse cx="880.0" cy="655.0" rx="22.0" ry="22.0"/></g>
<g filter="url(#cb2)" fill="#fff" opacity=".27"><path d="M1528.0 551.0C1513.6 551.0 1520.7 553.4 1512.0 560.0C1503.3 566.6 1506.8 565.8 1499.0 573.0C1491.2 580.2 1491.7 576.5 1486.0 584.0C1480.3 591.5 1482.7 589.0 1480.0 598.0C1477.3 607.0 1476.1 602.9 1477.0 614.0C1477.9 625.1 1483.9 623.6 1483.0 635.0C1482.1 646.4 1477.6 642.1 1474.0 652.0C1470.4 661.9 1473.7 656.6 1471.0 668.0C1468.3 679.4 1470.7 679.2 1465.0 690.0C1459.3 700.8 1458.6 696.5 1452.0 704.0C1445.4 711.5 1450.2 709.0 1443.0 715.0C1435.8 721.0 1435.8 718.3 1428.0 724.0C1420.2 729.7 1422.7 726.8 1417.0 734.0C1411.3 741.2 1411.7 740.2 1409.0 748.0C1406.3 755.8 1406.8 752.8 1408.0 760.0C1409.2 767.2 1409.1 765.4 1413.0 772.0C1416.9 778.6 1412.0 772.7 1421.0 782.0C1430.0 791.3 1427.1 788.9 1443.0 803.0C1458.9 817.1 1455.1 816.4 1474.0 829.0C1492.9 841.6 1480.2 838.7 1506.0 845.0C1531.8 851.3 1540.8 893.5 1560.0 850.0C1579.2 806.5 1570.0 787.0 1570.0 700.0C1570.0 613.0 1572.6 604.7 1560.0 560.0C1547.4 515.3 1542.4 551.0 1528.0 551.0Z"/></g>
<g filter="url(#cb2)" fill="#fff" opacity=".1"><ellipse cx="1510.0" cy="572.0" rx="12.0" ry="12.0"/><ellipse cx="1494.0" cy="600.0" rx="13.0" ry="13.0"/><ellipse cx="1492.0" cy="628.0" rx="12.0" ry="12.0"/><ellipse cx="1486.0" cy="665.0" rx="14.0" ry="14.0"/><ellipse cx="1470.0" cy="700.0" rx="14.0" ry="14.0"/><ellipse cx="1447.0" cy="728.0" rx="14.0" ry="14.0"/><ellipse cx="1428.0" cy="748.0" rx="14.0" ry="14.0"/><ellipse cx="1515.0" cy="640.0" rx="22.0" ry="22.0"/><ellipse cx="1500.0" cy="720.0" rx="26.0" ry="26.0"/><ellipse cx="1470.0" cy="770.0" rx="24.0" ry="24.0"/></g>
</g>
<g fill="none" stroke="#9c9c98" stroke-width="1" shape-rendering="crispEdges" clip-path="url(#mapclip)">
<rect x="200.5" y="173.5" width="1267" height="624"/>
<rect x="287.500" y="201.500" width="1153" height="568"/>
<rect x="282.500" y="253.500" width="322" height="307"/>
<rect x="1049.500" y="173.500" width="322" height="307"/>
<rect x="1402.500" y="547.500" width="322" height="400"/>
<rect x="630.500" y="529.500" width="321" height="307" stroke="#18dede"/>
</g>
<g shape-rendering="geometricPrecision">
<rect x="848.500" y="610.500" width="14" height="14" fill="#5aa0e8" fill-opacity=".45" stroke="#1e8cff" stroke-width="1"/>
<rect x="783.500" y="675.500" width="14.500" height="14.500" fill="none" stroke="#18dede" stroke-width="1.200"/>
<rect x="790" y="682" width="1" height="1" fill="#18dede"/>
<path d="M790.500 668V592" stroke="#3df516" stroke-width="1.300"/>
<path d="M790.500 579l6.200 14h-12.400z" fill="#3df516"/>
<path d="M806 682.500H882" stroke="#f01414" stroke-width="1.300"/>
<path d="M894.500 682.500l-13.500-5.800v11.600z" fill="#f01414"/>
</g>
<rect x="1314.500" y="133" width="199.500" height="40" rx="20" fill="#393c43"/>
<circle cx="1334" cy="153.200" r="14.500" fill="#2c2e34"/>
<g fill="#c9ccd0"><rect x="1331.500" y="150.700" width="5" height="5"/><path d="M1334 146l2.800 3.200h-5.600zM1334 160.400l2.800-3.200h-5.600zM1326.800 153.200l3.200-2.800v5.600zM1341.200 153.200l-3.200-2.800v5.600z"/><rect x="1333.500" y="148" width="1" height="10.500"/><rect x="1328.700" y="152.700" width="10.500" height="1"/></g>
<g fill="none" stroke="#c9ccd0" stroke-width="1.100"><path d="M1378.200 147.800A6.500 6.500 0 1 0 1380.300 152.600"/></g><g fill="#c9ccd0"><path d="M1374 150l3 3-3 3-3-3z"/><path d="M1376.600 148.200l4.400-2.400-1 4.800z"/></g>
<g fill="#c9ccd0"><rect x="1407" y="154.200" width="7" height="7"/></g><g fill="none" stroke="#c9ccd0" stroke-width="1.100"><path d="M1407.500 151v-4.500h4.500M1416.500 161.500h4.500v-4.500M1415.500 151.500l5-5M1417 146.500h3.500v3.500"/></g>
<g fill="none" stroke="#c9ccd0" stroke-width="1.100" stroke-linejoin="round"><path d="M1447.500 148.500l6.500-2.300 6.500 2.300-6.500 2.300zM1447.500 148.500l2.200 9 4.300 2.800 4.300-2.800 2.200-9M1454 150.800v9.500"/></g>
<g fill="none" stroke="#c9ccd0" stroke-width="2"><path d="M1498.500 156.500A5.300 5.300 0 1 1 1499.300 151"/></g><g fill="#c9ccd0"><circle cx="1494.200" cy="152.300" r="1.800"/><path d="M1495.500 156h6l-3 3.500z"/></g>
<rect x="248" y="118" width="14" height="743" fill="#23262b"/>
<rect x="248" y="846" width="1281" height="15" fill="#23262b"/>
<g fill="#b9bbbd" shape-rendering="crispEdges">
<rect x="262" y="118" width="1" height="729"/>
<rect x="262" y="846" width="1267" height="1"/>
<rect x="294" y="846" width="1" height="15"/>
<rect x="361" y="846" width="1" height="15"/>
<rect x="427" y="846" width="1" height="15"/>
<rect x="493" y="846" width="1" height="15"/>
<rect x="559" y="846" width="1" height="15"/>
<rect x="626" y="846" width="1" height="15"/>
<rect x="692" y="846" width="1" height="15"/>
<rect x="758" y="846" width="1" height="15"/>
<rect x="825" y="846" width="1" height="15"/>
<rect x="891" y="846" width="1" height="15"/>
<rect x="957" y="846" width="1" height="15"/>
<rect x="1023" y="846" width="1" height="15"/>
<rect x="1090" y="846" width="1" height="15"/>
<rect x="1156" y="846" width="1" height="15"/>
<rect x="1222" y="846" width="1" height="15"/>
<rect x="1288" y="846" width="1" height="15"/>
<rect x="1355" y="846" width="1" height="15"/>
<rect x="1421" y="846" width="1" height="15"/>
<rect x="1487" y="846" width="1" height="15"/>
<rect x="248" y="843" width="14" height="1"/>
<rect x="248" y="777" width="14" height="1"/>
<rect x="248" y="711" width="14" height="1"/>
<rect x="248" y="644" width="14" height="1"/>
<rect x="248" y="578" width="14" height="1"/>
<rect x="248" y="512" width="14" height="1"/>
<rect x="248" y="446" width="14" height="1"/>
<rect x="248" y="379" width="14" height="1"/>
<rect x="248" y="313" width="14" height="1"/>
<rect x="248" y="247" width="14" height="1"/>
<rect x="248" y="180" width="14" height="1"/>
</g>
<rect x="248" y="519" width="14" height="1" fill="#2fae1c"/>
<rect x="976" y="846" width="1" height="15" fill="#d01818"/>
<g font-family="Liberation Sans, sans-serif" font-size="9.600" fill="#b9bbbd" letter-spacing="0.200">
<text x="297.5" y="857.300">100</text>
<text x="364.5" y="857.300">200</text>
<text x="430.5" y="857.300">300</text>
<text x="496.5" y="857.300">400</text>
<text x="562.5" y="857.300">500</text>
<text x="629.5" y="857.300">600</text>
<text x="695.5" y="857.300">700</text>
<text x="761.5" y="857.300">800</text>
<text x="828.5" y="857.300">900</text>
<text x="894.5" y="857.300">1000</text>
<text x="960.5" y="857.300">1100</text>
<text x="1026.5" y="857.300">1200</text>
<text x="1093.5" y="857.300">1300</text>
<text x="1159.5" y="857.300">1400</text>
<text x="1225.5" y="857.300">1500</text>
<text x="1291.5" y="857.300">1600</text>
<text x="1358.5" y="857.300">1700</text>
<text x="1424.5" y="857.300">1800</text>
<text x="1490.5" y="857.300">1900</text>
<text transform="translate(259.800 840.5) rotate(-90)">0</text>
<text transform="translate(259.800 774.5) rotate(-90)">100</text>
<text transform="translate(259.800 708.5) rotate(-90)">200</text>
<text transform="translate(259.800 641.5) rotate(-90)">300</text>
<text transform="translate(259.800 575.5) rotate(-90)">400</text>
<text transform="translate(259.800 509.5) rotate(-90)">500</text>
<text transform="translate(259.800 443.5) rotate(-90)">600</text>
<text transform="translate(259.800 376.5) rotate(-90)">700</text>
<text transform="translate(259.800 310.5) rotate(-90)">800</text>
<text transform="translate(259.800 244.5) rotate(-90)">900</text>
<text transform="translate(259.800 177.5) rotate(-90)">1000</text>
</g>
</svg>
</div>
<div class="panel" style="left:248px;top:903px;width:1281px;height:58px"></div>
<div class="panel2" style="left:248px;top:961px;width:1281px;height:70px"></div>
<svg class="i " style="left:258px;top:876px" width="18" height="15"><use href="#console"/></svg>
<span class="t btab" style="left:280px;top:876px;">Console</span>
<svg class="i " style="left:351px;top:878px" width="19" height="11"><use href="#curve"/></svg>
<span class="t btab" style="left:374px;top:876px;">Curve Editor</span>
<svg class="i " style="left:471px;top:876px" width="18" height="15"><use href="#builderr"/></svg>
<span class="t btab" style="left:494px;top:876px;">Build Errors</span>
<svg class="i " style="left:589px;top:877px" width="14" height="14"><use href="#search"/></svg>
<span class="t btab" style="left:610px;top:876px;">Search Results</span>
<div class="orange" style="left:248px;top:901px;width:86px;height:2px"></div>
<div class="field" style="left:264px;top:919px;width:1116px;height:26px"><span class="ph">Search</span></div>
<div class="btn" style="left:1396px;top:919px;width:26px;height:26px"><svg width="26" height="26" fill="none" stroke="#c8ccd0" stroke-width="1.900"><path d="M15.700 8l-5 5 5 5"/></svg></div>
<div class="btn" style="left:1426px;top:919px;width:26px;height:26px"><svg width="26" height="26" fill="none" stroke="#c8ccd0" stroke-width="1.900"><path d="M10.300 8l5 5-5 5"/></svg></div>
<div class="btn" style="left:1464px;top:919px;width:49px;height:26px;line-height:27px;background:#40444e">Clear</div>
<div class="panel" style="left:1546px;top:77px;width:373px;height:522px"></div>
<span class="t hdr" style="left:1561px;top:90px;">Outline</span>
<div class="sel" style="left:1547px;top:447px;width:364px;height:27px"></div><div class="selbar" style="left:1547px;top:447px;height:27px"></div>
<div style="position:absolute;left:1546px;top:77px;width:373px;height:522px;overflow:hidden"><div style="position:absolute;left:-1546px;top:-77px">
<svg class="i" style="left:1561px;top:133.0px" width="9" height="7"><path d="M0 0h9l-4.500 6.500z" fill="#4db8ff"/></svg>
<svg class="i gry" style="left:1574px;top:131.5px" width="16" height="12"><use href="#coll"/></svg>
<span class="t orow " style="left:1594px;top:129.0px;">Collection</span>
<svg class="i" style="left:1574px;top:160.0px" width="9" height="7"><path d="M0 0h9l-4.500 6.500z" fill="#c8ccd0"/></svg>
<svg class="i gry" style="left:1589px;top:157.0px" width="13" height="14"><use href="#cube"/></svg>
<span class="t orow " style="left:1607px;top:156.0px;">Main</span>
<svg class="i gry" style="left:1601px;top:183.5px" width="15" height="15"><use href="#gear"/></svg>
<span class="t orow it" style="left:1620px;top:183.0px;">main - /Map/Map.script</span>
<svg class="i" style="left:1575.5px;top:213.0px" width="7" height="9"><path d="M0 0v9l6.500-4.500z" fill="#c8ccd0"/></svg>
<svg class="i gry" style="left:1589px;top:211.0px" width="13" height="14"><use href="#cube"/></svg>
<span class="t orow " style="left:1607px;top:210.0px;">Planes</span>
<svg class="i" style="left:1574px;top:241.0px" width="9" height="7"><path d="M0 0h9l-4.500 6.500z" fill="#6a6e73"/></svg>
<svg class="i gdim" style="left:1589px;top:238.0px" width="13" height="14"><use href="#cube"/></svg>
<span class="t orow dim" style="left:1607px;top:237.0px;">UI</span>
<svg class="i" style="left:1588.5px;top:267.0px" width="7" height="9"><path d="M0 0v9l6.500-4.500z" fill="#6a6e73"/></svg>
<svg class="i gdim" style="left:1601px;top:265.5px" width="16" height="13"><use href="#guig"/></svg>
<span class="t orow it dim" style="left:1620px;top:264.0px;">Exchange - /UI/Exchange.gui</span>
<svg class="i" style="left:1588.5px;top:294.0px" width="7" height="9"><path d="M0 0v9l6.500-4.500z" fill="#6a6e73"/></svg>
<svg class="i gdim" style="left:1601px;top:292.5px" width="16" height="13"><use href="#guig"/></svg>
<span class="t orow it dim" style="left:1620px;top:291.0px;">Gift - /UI/Gift.gui</span>
<svg class="i" style="left:1588.5px;top:321.0px" width="7" height="9"><path d="M0 0v9l6.500-4.500z" fill="#6a6e73"/></svg>
<svg class="i gdim" style="left:1601px;top:319.5px" width="16" height="13"><use href="#guig"/></svg>
<span class="t orow it dim" style="left:1620px;top:318.0px;">Info - /UI/Info.gui</span>
<svg class="i" style="left:1574px;top:349.0px" width="9" height="7"><path d="M0 0h9l-4.500 6.500z" fill="#4db8ff"/></svg>
<svg class="i gry" style="left:1589px;top:346.0px" width="13" height="14"><use href="#cube"/></svg>
<span class="t orow " style="left:1607px;top:345.0px;">World Map</span>
<svg class="i" style="left:1588.5px;top:375.0px" width="7" height="9"><path d="M0 0v9l6.500-4.500z" fill="#c8ccd0"/></svg>
<svg class="i gry" style="left:1601px;top:373.0px" width="13" height="14"><use href="#cube"/></svg>
<span class="t orow " style="left:1620px;top:372.0px;">0. World Map BG</span>
<svg class="i" style="left:1588.5px;top:402.0px" width="7" height="9"><path d="M0 0v9l6.500-4.500z" fill="#c8ccd0"/></svg>
<svg class="i gry" style="left:1601px;top:400.0px" width="13" height="14"><use href="#cube"/></svg>
<span class="t orow " style="left:1620px;top:399.0px;">1. Map Depth</span>
<svg class="i" style="left:1587px;top:430.0px" width="9" height="7"><path d="M0 0h9l-4.500 6.500z" fill="#4db8ff"/></svg>
<svg class="i gry" style="left:1601px;top:427.0px" width="13" height="14"><use href="#cube"/></svg>
<span class="t orow " style="left:1620px;top:426.0px;">Clouds</span>
<svg class="i" style="left:1601.5px;top:456.0px" width="7" height="9"><path d="M0 0v9l6.500-4.500z" fill="#4db8ff"/></svg>
<svg class="i gry" style="left:1614px;top:454.0px" width="13" height="14"><use href="#cube"/></svg>
<span class="t orow it sel1" style="left:1633px;top:453.0px;">4. Cloud - /Clouds/Cloud.go</span>
<svg class="i" style="left:1601.5px;top:483.0px" width="7" height="9"><path d="M0 0v9l6.500-4.500z" fill="#c8ccd0"/></svg>
<svg class="i gry" style="left:1614px;top:481.0px" width="13" height="14"><use href="#cube"/></svg>
<span class="t orow it" style="left:1633px;top:480.0px;">4. Cloud1 - /Clouds/Cloud.go</span>
<svg class="i" style="left:1601.5px;top:510.0px" width="7" height="9"><path d="M0 0v9l6.500-4.500z" fill="#c8ccd0"/></svg>
<svg class="i gry" style="left:1614px;top:508.0px" width="13" height="14"><use href="#cube"/></svg>
<span class="t orow it" style="left:1633px;top:507.0px;">4. Cloud2 - /Clouds/Cloud.go</span>
<svg class="i" style="left:1601.5px;top:537.0px" width="7" height="9"><path d="M0 0v9l6.500-4.500z" fill="#4db8ff"/></svg>
<svg class="i gry" style="left:1614px;top:535.0px" width="13" height="14"><use href="#cube"/></svg>
<span class="t orow it" style="left:1633px;top:534.0px;">4. Cloud3 - /Clouds/Cloud.go</span>
<svg class="i" style="left:1601.5px;top:564.0px" width="7" height="9"><path d="M0 0v9l6.500-4.500z" fill="#4db8ff"/></svg>
<svg class="i gry" style="left:1614px;top:562.0px" width="13" height="14"><use href="#cube"/></svg>
<span class="t orow it" style="left:1633px;top:561.0px;">4. Cloud4 - /Clouds/Cloud.go</span>
<svg class="i" style="left:1587px;top:592.0px" width="9" height="7"><path d="M0 0h9l-4.500 6.500z" fill="#c8ccd0"/></svg>
<svg class="i gry" style="left:1601px;top:589.0px" width="13" height="14"><use href="#cube"/></svg>
<span class="t orow " style="left:1620px;top:588.0px;">Ships</span>
</div></div>
<div class="sbtrack" style="left:1911px;top:123px;width:8px;height:476px"></div><div class="sbthumb" style="left:1912px;top:127px;width:7px;height:312px"></div>
<div class="panel" style="left:1546px;top:601px;width:373px;height:430px"></div>
<span class="t hdr" style="left:1561px;top:614px;">Properties</span>
<span class="t row" style="left:1561px;top:656px;">Id</span>
<div class="field" style="left:1623px;top:651px;width:288px;height:27px"><span class="fv">4. Cloud</span></div>
<span class="t row" style="left:1561px;top:690px;">Url</span>
<div class="field" style="left:1623px;top:685px;width:288px;height:27px"><span class="fv">/4. Cloud</span></div>
<span class="t row" style="left:1561px;top:724px;">Path</span>
<div class="field" style="left:1623px;top:719px;width:242px;height:27px"><span class="fv">/Clouds/Cloud.go</span></div>
<div class="pbtn" style="left:1866px;top:719px;width:45px;height:27px"><svg width="45" height="27" fill="none" stroke="#9ca0a5" stroke-width="1.2"><path d="M7 13.5h8M12 10l3.500 3.500-3.500 3.500M17.500 10v7"/><g fill="#b4b8bc" stroke="none"><rect x="28" y="16" width="1.6" height="1.600"/><rect x="32" y="16" width="1.6" height="1.600"/><rect x="36" y="16" width="1.6" height="1.600"/></g></svg></div>
<span class="t row" style="left:1561px;top:758px;">Position</span>
<span class="t row" style="left:1626px;top:758px;">X</span>
<div class="field num" style="left:1638px;top:753px;width:78px;height:26px"><span class="fv">-230</span></div>
<span class="t row" style="left:1723px;top:758px;">Y</span>
<div class="field num" style="left:1735px;top:753px;width:78px;height:26px"><span class="fv">-620</span></div>
<span class="t row" style="left:1820px;top:758px;">Z</span>
<div class="field num" style="left:1833px;top:753px;width:78px;height:26px"><span class="fv">0.6</span></div>
<span class="t row" style="left:1561px;top:792px;">Rotation</span>
<span class="t row" style="left:1626px;top:792px;">X</span>
<div class="field num" style="left:1638px;top:787px;width:78px;height:26px"><span class="fv">0</span></div>
<span class="t row" style="left:1723px;top:792px;">Y</span>
<div class="field num" style="left:1735px;top:787px;width:78px;height:26px"><span class="fv">0</span></div>
<span class="t row" style="left:1820px;top:792px;">Z</span>
<div class="field num" style="left:1833px;top:787px;width:78px;height:26px"><span class="fv">0</span></div>
<span class="t row" style="left:1561px;top:826px;">Scale</span>
<span class="t row" style="left:1626px;top:826px;">X</span>
<div class="field num" style="left:1638px;top:821px;width:78px;height:26px"><span class="fv">5</span></div>
<span class="t row" style="left:1723px;top:826px;">Y</span>
<div class="field num" style="left:1735px;top:821px;width:78px;height:26px"><span class="fv">5</span></div>
<span class="t row" style="left:1820px;top:826px;">Z</span>
<div class="field num" style="left:1833px;top:821px;width:78px;height:26px"><span class="fv">5</span></div>
<span class="t row" style="left:16px;top:1039px;color:#5c6066">Ready</span>
</div>
</body></html>
